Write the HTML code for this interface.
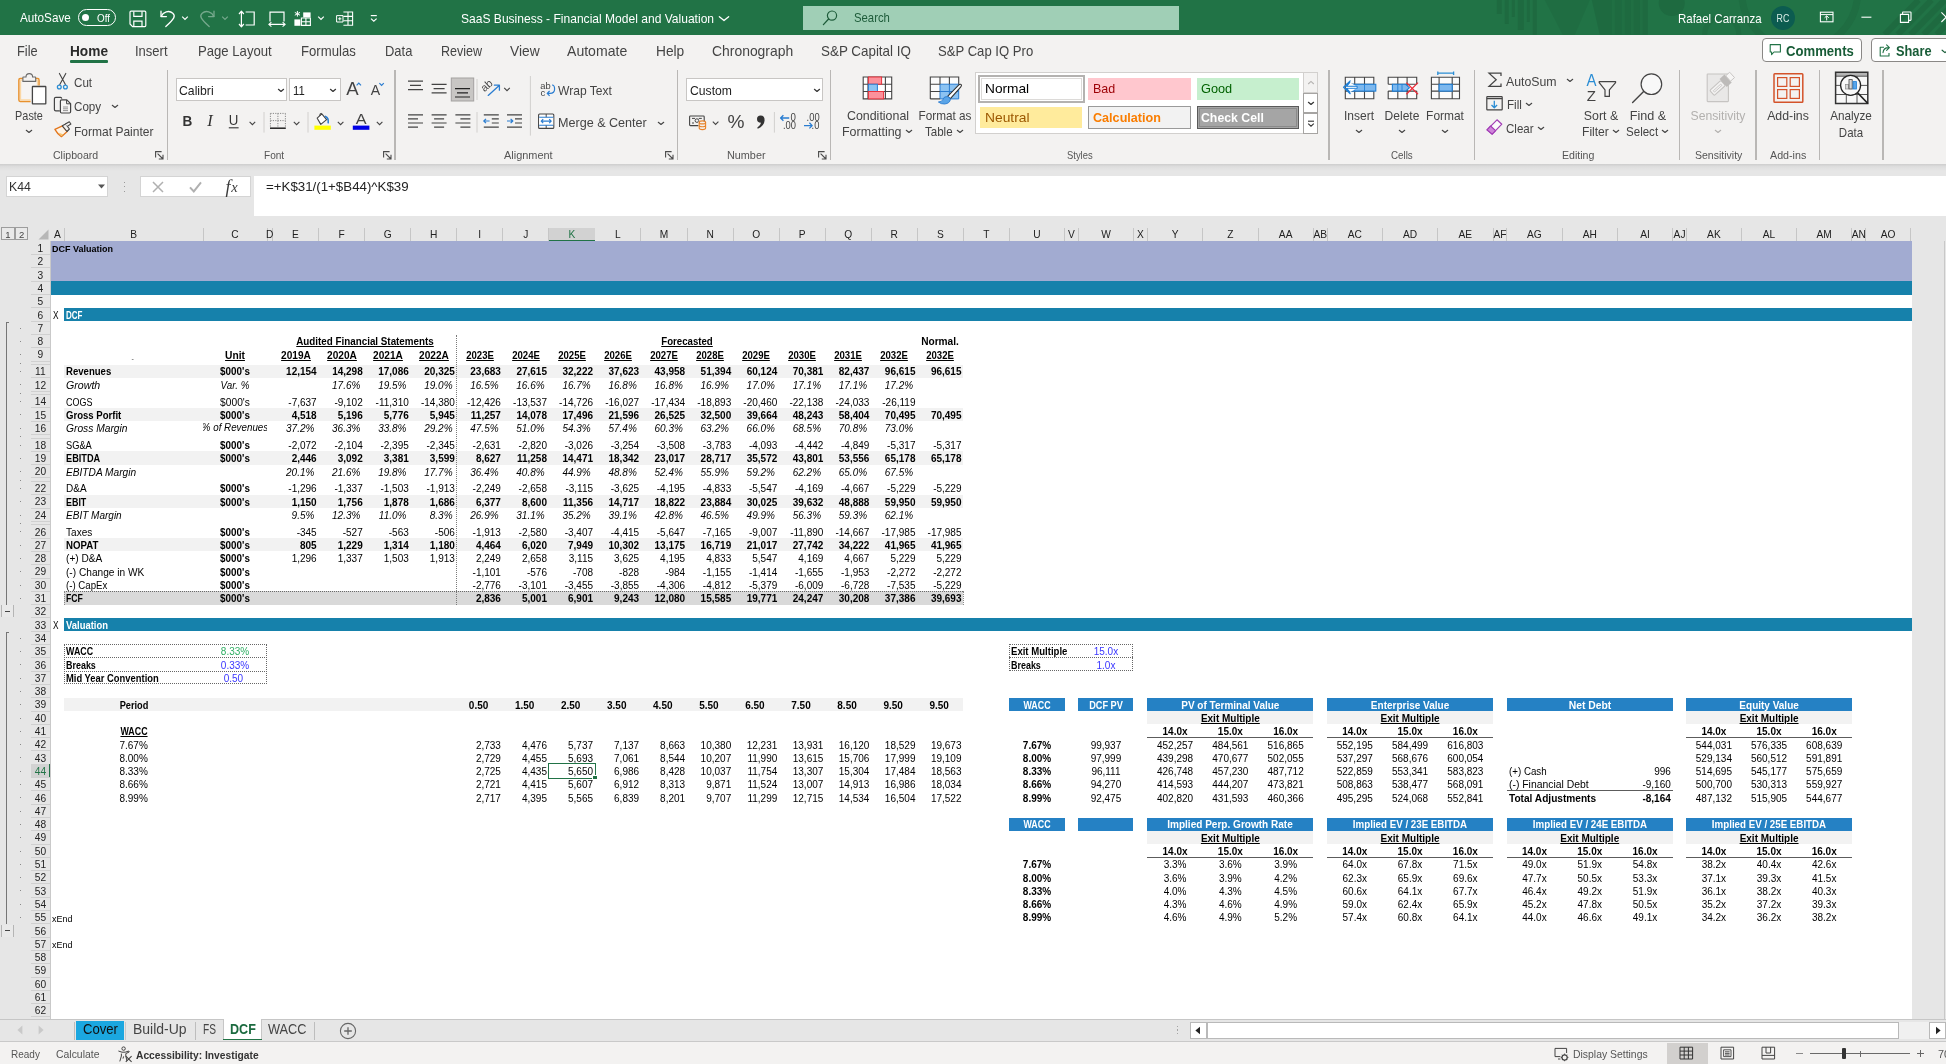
<!DOCTYPE html>
<html><head><meta charset="utf-8"><title>Excel</title>
<style>
html,body{margin:0;padding:0;}
body{width:1946px;height:1064px;overflow:hidden;position:relative;background:#e6e6e6;
font-family:"Liberation Sans",sans-serif;}
.b{position:absolute;display:block;}
.t{position:absolute;white-space:nowrap;line-height:1;display:block;}
svg{overflow:visible;}
#root{position:absolute;left:0;top:0;width:1946px;height:1064px;overflow:hidden;will-change:transform;}
</style></head>
<body>
<div id="root">
<div class="b" style="left:0.00px;top:216.50px;width:1946.00px;height:802.50px;background:#e6e6e6;"></div>
<div class="b" style="left:50.50px;top:241.40px;width:1861.70px;height:777.60px;background:#fff;"></div>
<div class="b" style="left:63.70px;top:227.60px;width:1.00px;height:13.40px;background:#c6c6c6;"></div>
<div class="b" style="left:202.50px;top:227.60px;width:1.00px;height:13.40px;background:#c6c6c6;"></div>
<div class="b" style="left:266.50px;top:227.60px;width:1.00px;height:13.40px;background:#c6c6c6;"></div>
<div class="b" style="left:272.00px;top:227.60px;width:1.00px;height:13.40px;background:#c6c6c6;"></div>
<div class="b" style="left:318.06px;top:227.60px;width:1.00px;height:13.40px;background:#c6c6c6;"></div>
<div class="b" style="left:364.12px;top:227.60px;width:1.00px;height:13.40px;background:#c6c6c6;"></div>
<div class="b" style="left:410.18px;top:227.60px;width:1.00px;height:13.40px;background:#c6c6c6;"></div>
<div class="b" style="left:456.24px;top:227.60px;width:1.00px;height:13.40px;background:#c6c6c6;"></div>
<div class="b" style="left:502.30px;top:227.60px;width:1.00px;height:13.40px;background:#c6c6c6;"></div>
<div class="b" style="left:548.36px;top:227.60px;width:1.00px;height:13.40px;background:#c6c6c6;"></div>
<div class="b" style="left:594.42px;top:227.60px;width:1.00px;height:13.40px;background:#c6c6c6;"></div>
<div class="b" style="left:640.48px;top:227.60px;width:1.00px;height:13.40px;background:#c6c6c6;"></div>
<div class="b" style="left:686.54px;top:227.60px;width:1.00px;height:13.40px;background:#c6c6c6;"></div>
<div class="b" style="left:732.60px;top:227.60px;width:1.00px;height:13.40px;background:#c6c6c6;"></div>
<div class="b" style="left:778.66px;top:227.60px;width:1.00px;height:13.40px;background:#c6c6c6;"></div>
<div class="b" style="left:824.72px;top:227.60px;width:1.00px;height:13.40px;background:#c6c6c6;"></div>
<div class="b" style="left:870.78px;top:227.60px;width:1.00px;height:13.40px;background:#c6c6c6;"></div>
<div class="b" style="left:916.84px;top:227.60px;width:1.00px;height:13.40px;background:#c6c6c6;"></div>
<div class="b" style="left:962.90px;top:227.60px;width:1.00px;height:13.40px;background:#c6c6c6;"></div>
<div class="b" style="left:1008.96px;top:227.60px;width:1.00px;height:13.40px;background:#c6c6c6;"></div>
<div class="b" style="left:1064.10px;top:227.60px;width:1.00px;height:13.40px;background:#c6c6c6;"></div>
<div class="b" style="left:1077.90px;top:227.60px;width:1.00px;height:13.40px;background:#c6c6c6;"></div>
<div class="b" style="left:1133.00px;top:227.60px;width:1.00px;height:13.40px;background:#c6c6c6;"></div>
<div class="b" style="left:1146.90px;top:227.60px;width:1.00px;height:13.40px;background:#c6c6c6;"></div>
<div class="b" style="left:1202.20px;top:227.60px;width:1.00px;height:13.40px;background:#c6c6c6;"></div>
<div class="b" style="left:1257.50px;top:227.60px;width:1.00px;height:13.40px;background:#c6c6c6;"></div>
<div class="b" style="left:1312.80px;top:227.60px;width:1.00px;height:13.40px;background:#c6c6c6;"></div>
<div class="b" style="left:1326.60px;top:227.60px;width:1.00px;height:13.40px;background:#c6c6c6;"></div>
<div class="b" style="left:1381.90px;top:227.60px;width:1.00px;height:13.40px;background:#c6c6c6;"></div>
<div class="b" style="left:1437.20px;top:227.60px;width:1.00px;height:13.40px;background:#c6c6c6;"></div>
<div class="b" style="left:1492.50px;top:227.60px;width:1.00px;height:13.40px;background:#c6c6c6;"></div>
<div class="b" style="left:1506.30px;top:227.60px;width:1.00px;height:13.40px;background:#c6c6c6;"></div>
<div class="b" style="left:1561.60px;top:227.60px;width:1.00px;height:13.40px;background:#c6c6c6;"></div>
<div class="b" style="left:1616.90px;top:227.60px;width:1.00px;height:13.40px;background:#c6c6c6;"></div>
<div class="b" style="left:1672.20px;top:227.60px;width:1.00px;height:13.40px;background:#c6c6c6;"></div>
<div class="b" style="left:1685.90px;top:227.60px;width:1.00px;height:13.40px;background:#c6c6c6;"></div>
<div class="b" style="left:1740.90px;top:227.60px;width:1.00px;height:13.40px;background:#c6c6c6;"></div>
<div class="b" style="left:1796.10px;top:227.60px;width:1.00px;height:13.40px;background:#c6c6c6;"></div>
<div class="b" style="left:1851.30px;top:227.60px;width:1.00px;height:13.40px;background:#c6c6c6;"></div>
<div class="b" style="left:1865.20px;top:227.60px;width:1.00px;height:13.40px;background:#c6c6c6;"></div>
<div class="b" style="left:1910.00px;top:227.60px;width:1.00px;height:13.40px;background:#c6c6c6;"></div>
<div class="b" style="left:548.86px;top:227.50px;width:46.06px;height:13.90px;background:#d2d2d2;"></div>
<div class="b" style="left:548.86px;top:240.20px;width:46.06px;height:1.20px;background:#217346;"></div>
<span class="t" style="top:230.08px;font-size:10.2px;color:#222;left:57.35px;transform-origin:50% 50%;transform:translateX(-50%);">A</span>
<span class="t" style="top:230.08px;font-size:10.2px;color:#222;left:133.60px;transform-origin:50% 50%;transform:translateX(-50%);">B</span>
<span class="t" style="top:230.08px;font-size:10.2px;color:#222;left:235.00px;transform-origin:50% 50%;transform:translateX(-50%);">C</span>
<span class="t" style="top:230.08px;font-size:10.2px;color:#222;left:269.75px;transform-origin:50% 50%;transform:translateX(-50%);">D</span>
<span class="t" style="top:230.08px;font-size:10.2px;color:#222;left:295.53px;transform-origin:50% 50%;transform:translateX(-50%);">E</span>
<span class="t" style="top:230.08px;font-size:10.2px;color:#222;left:341.59px;transform-origin:50% 50%;transform:translateX(-50%);">F</span>
<span class="t" style="top:230.08px;font-size:10.2px;color:#222;left:387.65px;transform-origin:50% 50%;transform:translateX(-50%);">G</span>
<span class="t" style="top:230.08px;font-size:10.2px;color:#222;left:433.71px;transform-origin:50% 50%;transform:translateX(-50%);">H</span>
<span class="t" style="top:230.08px;font-size:10.2px;color:#222;left:479.77px;transform-origin:50% 50%;transform:translateX(-50%);">I</span>
<span class="t" style="top:230.08px;font-size:10.2px;color:#222;left:525.83px;transform-origin:50% 50%;transform:translateX(-50%);">J</span>
<span class="t" style="top:230.08px;font-size:10.2px;color:#217346;left:571.89px;transform-origin:50% 50%;transform:translateX(-50%);">K</span>
<span class="t" style="top:230.08px;font-size:10.2px;color:#222;left:617.95px;transform-origin:50% 50%;transform:translateX(-50%);">L</span>
<span class="t" style="top:230.08px;font-size:10.2px;color:#222;left:664.01px;transform-origin:50% 50%;transform:translateX(-50%);">M</span>
<span class="t" style="top:230.08px;font-size:10.2px;color:#222;left:710.07px;transform-origin:50% 50%;transform:translateX(-50%);">N</span>
<span class="t" style="top:230.08px;font-size:10.2px;color:#222;left:756.13px;transform-origin:50% 50%;transform:translateX(-50%);">O</span>
<span class="t" style="top:230.08px;font-size:10.2px;color:#222;left:802.19px;transform-origin:50% 50%;transform:translateX(-50%);">P</span>
<span class="t" style="top:230.08px;font-size:10.2px;color:#222;left:848.25px;transform-origin:50% 50%;transform:translateX(-50%);">Q</span>
<span class="t" style="top:230.08px;font-size:10.2px;color:#222;left:894.31px;transform-origin:50% 50%;transform:translateX(-50%);">R</span>
<span class="t" style="top:230.08px;font-size:10.2px;color:#222;left:940.37px;transform-origin:50% 50%;transform:translateX(-50%);">S</span>
<span class="t" style="top:230.08px;font-size:10.2px;color:#222;left:986.43px;transform-origin:50% 50%;transform:translateX(-50%);">T</span>
<span class="t" style="top:230.08px;font-size:10.2px;color:#222;left:1037.03px;transform-origin:50% 50%;transform:translateX(-50%);">U</span>
<span class="t" style="top:230.08px;font-size:10.2px;color:#222;left:1071.50px;transform-origin:50% 50%;transform:translateX(-50%);">V</span>
<span class="t" style="top:230.08px;font-size:10.2px;color:#222;left:1105.95px;transform-origin:50% 50%;transform:translateX(-50%);">W</span>
<span class="t" style="top:230.08px;font-size:10.2px;color:#222;left:1140.45px;transform-origin:50% 50%;transform:translateX(-50%);">X</span>
<span class="t" style="top:230.08px;font-size:10.2px;color:#222;left:1175.05px;transform-origin:50% 50%;transform:translateX(-50%);">Y</span>
<span class="t" style="top:230.08px;font-size:10.2px;color:#222;left:1230.35px;transform-origin:50% 50%;transform:translateX(-50%);">Z</span>
<span class="t" style="top:230.08px;font-size:10.2px;color:#222;left:1285.65px;transform-origin:50% 50%;transform:translateX(-50%);">AA</span>
<span class="t" style="top:230.08px;font-size:10.2px;color:#222;left:1320.20px;transform-origin:50% 50%;transform:translateX(-50%);">AB</span>
<span class="t" style="top:230.08px;font-size:10.2px;color:#222;left:1354.75px;transform-origin:50% 50%;transform:translateX(-50%);">AC</span>
<span class="t" style="top:230.08px;font-size:10.2px;color:#222;left:1410.05px;transform-origin:50% 50%;transform:translateX(-50%);">AD</span>
<span class="t" style="top:230.08px;font-size:10.2px;color:#222;left:1465.35px;transform-origin:50% 50%;transform:translateX(-50%);">AE</span>
<span class="t" style="top:230.08px;font-size:10.2px;color:#222;left:1499.90px;transform-origin:50% 50%;transform:translateX(-50%);">AF</span>
<span class="t" style="top:230.08px;font-size:10.2px;color:#222;left:1534.45px;transform-origin:50% 50%;transform:translateX(-50%);">AG</span>
<span class="t" style="top:230.08px;font-size:10.2px;color:#222;left:1589.75px;transform-origin:50% 50%;transform:translateX(-50%);">AH</span>
<span class="t" style="top:230.08px;font-size:10.2px;color:#222;left:1645.05px;transform-origin:50% 50%;transform:translateX(-50%);">AI</span>
<span class="t" style="top:230.08px;font-size:10.2px;color:#222;left:1679.55px;transform-origin:50% 50%;transform:translateX(-50%);">AJ</span>
<span class="t" style="top:230.08px;font-size:10.2px;color:#222;left:1713.90px;transform-origin:50% 50%;transform:translateX(-50%);">AK</span>
<span class="t" style="top:230.08px;font-size:10.2px;color:#222;left:1769.00px;transform-origin:50% 50%;transform:translateX(-50%);">AL</span>
<span class="t" style="top:230.08px;font-size:10.2px;color:#222;left:1824.20px;transform-origin:50% 50%;transform:translateX(-50%);">AM</span>
<span class="t" style="top:230.08px;font-size:10.2px;color:#222;left:1858.75px;transform-origin:50% 50%;transform:translateX(-50%);">AN</span>
<span class="t" style="top:230.08px;font-size:10.2px;color:#222;left:1888.10px;transform-origin:50% 50%;transform:translateX(-50%);">AO</span>
<div class="b" style="left:50.50px;top:240.60px;width:1861.70px;height:0.80px;background:#c9c9c9;"></div>
<svg class="b" style="left:38.00px;top:229.00px;" width="11" height="11" viewBox="0 0 11 11"><path d="M10.5 0.5 L10.5 10.5 L0.5 10.5 Z" fill="#b7b7b7"/></svg>
<div class="b" style="left:1.40px;top:227.40px;width:13.20px;height:13.00px;background:#e9e9e9;border:1px solid #9d9d9d;box-sizing:border-box;"></div>
<span class="t" style="top:229.62px;font-size:9.5px;color:#444;left:8.00px;transform-origin:50% 50%;transform:translateX(-50%);">1</span>
<div class="b" style="left:15.00px;top:227.40px;width:13.20px;height:13.00px;background:#e9e9e9;border:1px solid #9d9d9d;box-sizing:border-box;"></div>
<span class="t" style="top:229.62px;font-size:9.5px;color:#444;left:21.60px;transform-origin:50% 50%;transform:translateX(-50%);">2</span>
<div class="b" style="left:30.50px;top:254.10px;width:19.60px;height:1.00px;background:#d0d0d0;"></div>
<span class="t" style="top:244.03px;font-size:10.2px;color:#222;left:40.40px;transform-origin:50% 50%;transform:translateX(-50%);">1</span>
<div class="b" style="left:30.50px;top:267.40px;width:19.60px;height:1.00px;background:#d0d0d0;"></div>
<span class="t" style="top:257.33px;font-size:10.2px;color:#222;left:40.40px;transform-origin:50% 50%;transform:translateX(-50%);">2</span>
<div class="b" style="left:30.50px;top:280.70px;width:19.60px;height:1.00px;background:#d0d0d0;"></div>
<span class="t" style="top:270.63px;font-size:10.2px;color:#222;left:40.40px;transform-origin:50% 50%;transform:translateX(-50%);">3</span>
<div class="b" style="left:30.50px;top:294.00px;width:19.60px;height:1.00px;background:#d0d0d0;"></div>
<span class="t" style="top:283.93px;font-size:10.2px;color:#222;left:40.40px;transform-origin:50% 50%;transform:translateX(-50%);">4</span>
<div class="b" style="left:30.50px;top:307.30px;width:19.60px;height:1.00px;background:#d0d0d0;"></div>
<span class="t" style="top:297.23px;font-size:10.2px;color:#222;left:40.40px;transform-origin:50% 50%;transform:translateX(-50%);">5</span>
<div class="b" style="left:30.50px;top:320.60px;width:19.60px;height:1.00px;background:#d0d0d0;"></div>
<span class="t" style="top:310.53px;font-size:10.2px;color:#222;left:40.40px;transform-origin:50% 50%;transform:translateX(-50%);">6</span>
<div class="b" style="left:30.50px;top:333.90px;width:19.60px;height:1.00px;background:#d0d0d0;"></div>
<span class="t" style="top:323.83px;font-size:10.2px;color:#222;left:40.40px;transform-origin:50% 50%;transform:translateX(-50%);">7</span>
<div class="b" style="left:30.50px;top:347.20px;width:19.60px;height:1.00px;background:#d0d0d0;"></div>
<span class="t" style="top:337.13px;font-size:10.2px;color:#222;left:40.40px;transform-origin:50% 50%;transform:translateX(-50%);">8</span>
<div class="b" style="left:30.50px;top:360.50px;width:19.60px;height:1.00px;background:#d0d0d0;"></div>
<span class="t" style="top:350.43px;font-size:10.2px;color:#222;left:40.40px;transform-origin:50% 50%;transform:translateX(-50%);">9</span>
<div class="b" style="left:30.50px;top:364.00px;width:19.60px;height:1.00px;background:#d0d0d0;"></div>
<div class="b" style="left:30.50px;top:377.30px;width:19.60px;height:1.00px;background:#d0d0d0;"></div>
<span class="t" style="top:367.23px;font-size:10.2px;color:#222;left:40.40px;transform-origin:50% 50%;transform:translateX(-50%);">11</span>
<div class="b" style="left:30.50px;top:390.60px;width:19.60px;height:1.00px;background:#d0d0d0;"></div>
<span class="t" style="top:380.53px;font-size:10.2px;color:#222;left:40.40px;transform-origin:50% 50%;transform:translateX(-50%);">12</span>
<div class="b" style="left:30.50px;top:394.10px;width:19.60px;height:1.00px;background:#d0d0d0;"></div>
<div class="b" style="left:30.50px;top:407.40px;width:19.60px;height:1.00px;background:#d0d0d0;"></div>
<span class="t" style="top:397.33px;font-size:10.2px;color:#222;left:40.40px;transform-origin:50% 50%;transform:translateX(-50%);">14</span>
<div class="b" style="left:30.50px;top:420.70px;width:19.60px;height:1.00px;background:#d0d0d0;"></div>
<span class="t" style="top:410.63px;font-size:10.2px;color:#222;left:40.40px;transform-origin:50% 50%;transform:translateX(-50%);">15</span>
<div class="b" style="left:30.50px;top:434.00px;width:19.60px;height:1.00px;background:#d0d0d0;"></div>
<span class="t" style="top:423.93px;font-size:10.2px;color:#222;left:40.40px;transform-origin:50% 50%;transform:translateX(-50%);">16</span>
<div class="b" style="left:30.50px;top:437.50px;width:19.60px;height:1.00px;background:#d0d0d0;"></div>
<div class="b" style="left:30.50px;top:450.80px;width:19.60px;height:1.00px;background:#d0d0d0;"></div>
<span class="t" style="top:440.73px;font-size:10.2px;color:#222;left:40.40px;transform-origin:50% 50%;transform:translateX(-50%);">18</span>
<div class="b" style="left:30.50px;top:464.10px;width:19.60px;height:1.00px;background:#d0d0d0;"></div>
<span class="t" style="top:454.03px;font-size:10.2px;color:#222;left:40.40px;transform-origin:50% 50%;transform:translateX(-50%);">19</span>
<div class="b" style="left:30.50px;top:477.40px;width:19.60px;height:1.00px;background:#d0d0d0;"></div>
<span class="t" style="top:467.33px;font-size:10.2px;color:#222;left:40.40px;transform-origin:50% 50%;transform:translateX(-50%);">20</span>
<div class="b" style="left:30.50px;top:480.90px;width:19.60px;height:1.00px;background:#d0d0d0;"></div>
<div class="b" style="left:30.50px;top:494.20px;width:19.60px;height:1.00px;background:#d0d0d0;"></div>
<span class="t" style="top:484.13px;font-size:10.2px;color:#222;left:40.40px;transform-origin:50% 50%;transform:translateX(-50%);">22</span>
<div class="b" style="left:30.50px;top:507.50px;width:19.60px;height:1.00px;background:#d0d0d0;"></div>
<span class="t" style="top:497.43px;font-size:10.2px;color:#222;left:40.40px;transform-origin:50% 50%;transform:translateX(-50%);">23</span>
<div class="b" style="left:30.50px;top:520.80px;width:19.60px;height:1.00px;background:#d0d0d0;"></div>
<span class="t" style="top:510.73px;font-size:10.2px;color:#222;left:40.40px;transform-origin:50% 50%;transform:translateX(-50%);">24</span>
<div class="b" style="left:30.50px;top:524.30px;width:19.60px;height:1.00px;background:#d0d0d0;"></div>
<div class="b" style="left:30.50px;top:537.60px;width:19.60px;height:1.00px;background:#d0d0d0;"></div>
<span class="t" style="top:527.53px;font-size:10.2px;color:#222;left:40.40px;transform-origin:50% 50%;transform:translateX(-50%);">26</span>
<div class="b" style="left:30.50px;top:550.90px;width:19.60px;height:1.00px;background:#d0d0d0;"></div>
<span class="t" style="top:540.83px;font-size:10.2px;color:#222;left:40.40px;transform-origin:50% 50%;transform:translateX(-50%);">27</span>
<div class="b" style="left:30.50px;top:564.20px;width:19.60px;height:1.00px;background:#d0d0d0;"></div>
<span class="t" style="top:554.13px;font-size:10.2px;color:#222;left:40.40px;transform-origin:50% 50%;transform:translateX(-50%);">28</span>
<div class="b" style="left:30.50px;top:577.50px;width:19.60px;height:1.00px;background:#d0d0d0;"></div>
<span class="t" style="top:567.43px;font-size:10.2px;color:#222;left:40.40px;transform-origin:50% 50%;transform:translateX(-50%);">29</span>
<div class="b" style="left:30.50px;top:590.80px;width:19.60px;height:1.00px;background:#d0d0d0;"></div>
<span class="t" style="top:580.73px;font-size:10.2px;color:#222;left:40.40px;transform-origin:50% 50%;transform:translateX(-50%);">30</span>
<div class="b" style="left:30.50px;top:604.10px;width:19.60px;height:1.00px;background:#d0d0d0;"></div>
<span class="t" style="top:594.03px;font-size:10.2px;color:#222;left:40.40px;transform-origin:50% 50%;transform:translateX(-50%);">31</span>
<div class="b" style="left:30.50px;top:617.40px;width:19.60px;height:1.00px;background:#d0d0d0;"></div>
<span class="t" style="top:607.33px;font-size:10.2px;color:#222;left:40.40px;transform-origin:50% 50%;transform:translateX(-50%);">32</span>
<div class="b" style="left:30.50px;top:630.70px;width:19.60px;height:1.00px;background:#d0d0d0;"></div>
<span class="t" style="top:620.63px;font-size:10.2px;color:#222;left:40.40px;transform-origin:50% 50%;transform:translateX(-50%);">33</span>
<div class="b" style="left:30.50px;top:644.00px;width:19.60px;height:1.00px;background:#d0d0d0;"></div>
<span class="t" style="top:633.93px;font-size:10.2px;color:#222;left:40.40px;transform-origin:50% 50%;transform:translateX(-50%);">34</span>
<div class="b" style="left:30.50px;top:657.30px;width:19.60px;height:1.00px;background:#d0d0d0;"></div>
<span class="t" style="top:647.23px;font-size:10.2px;color:#222;left:40.40px;transform-origin:50% 50%;transform:translateX(-50%);">35</span>
<div class="b" style="left:30.50px;top:670.60px;width:19.60px;height:1.00px;background:#d0d0d0;"></div>
<span class="t" style="top:660.53px;font-size:10.2px;color:#222;left:40.40px;transform-origin:50% 50%;transform:translateX(-50%);">36</span>
<div class="b" style="left:30.50px;top:683.90px;width:19.60px;height:1.00px;background:#d0d0d0;"></div>
<span class="t" style="top:673.83px;font-size:10.2px;color:#222;left:40.40px;transform-origin:50% 50%;transform:translateX(-50%);">37</span>
<div class="b" style="left:30.50px;top:697.20px;width:19.60px;height:1.00px;background:#d0d0d0;"></div>
<span class="t" style="top:687.13px;font-size:10.2px;color:#222;left:40.40px;transform-origin:50% 50%;transform:translateX(-50%);">38</span>
<div class="b" style="left:30.50px;top:710.50px;width:19.60px;height:1.00px;background:#d0d0d0;"></div>
<span class="t" style="top:700.43px;font-size:10.2px;color:#222;left:40.40px;transform-origin:50% 50%;transform:translateX(-50%);">39</span>
<div class="b" style="left:30.50px;top:723.80px;width:19.60px;height:1.00px;background:#d0d0d0;"></div>
<span class="t" style="top:713.73px;font-size:10.2px;color:#222;left:40.40px;transform-origin:50% 50%;transform:translateX(-50%);">40</span>
<div class="b" style="left:30.50px;top:737.10px;width:19.60px;height:1.00px;background:#d0d0d0;"></div>
<span class="t" style="top:727.03px;font-size:10.2px;color:#222;left:40.40px;transform-origin:50% 50%;transform:translateX(-50%);">41</span>
<div class="b" style="left:30.50px;top:750.40px;width:19.60px;height:1.00px;background:#d0d0d0;"></div>
<span class="t" style="top:740.33px;font-size:10.2px;color:#222;left:40.40px;transform-origin:50% 50%;transform:translateX(-50%);">42</span>
<div class="b" style="left:30.50px;top:763.70px;width:19.60px;height:1.00px;background:#d0d0d0;"></div>
<span class="t" style="top:753.63px;font-size:10.2px;color:#222;left:40.40px;transform-origin:50% 50%;transform:translateX(-50%);">43</span>
<div class="b" style="left:30.50px;top:764.30px;width:20.00px;height:13.30px;background:#d2d2d2;"></div>
<div class="b" style="left:48.80px;top:764.30px;width:1.80px;height:13.30px;background:#217346;"></div>
<div class="b" style="left:30.50px;top:777.00px;width:19.60px;height:1.00px;background:#d0d0d0;"></div>
<span class="t" style="top:766.93px;font-size:10.2px;color:#217346;left:40.40px;transform-origin:50% 50%;transform:translateX(-50%);">44</span>
<div class="b" style="left:30.50px;top:790.30px;width:19.60px;height:1.00px;background:#d0d0d0;"></div>
<span class="t" style="top:780.23px;font-size:10.2px;color:#222;left:40.40px;transform-origin:50% 50%;transform:translateX(-50%);">45</span>
<div class="b" style="left:30.50px;top:803.60px;width:19.60px;height:1.00px;background:#d0d0d0;"></div>
<span class="t" style="top:793.53px;font-size:10.2px;color:#222;left:40.40px;transform-origin:50% 50%;transform:translateX(-50%);">46</span>
<div class="b" style="left:30.50px;top:816.90px;width:19.60px;height:1.00px;background:#d0d0d0;"></div>
<span class="t" style="top:806.83px;font-size:10.2px;color:#222;left:40.40px;transform-origin:50% 50%;transform:translateX(-50%);">47</span>
<div class="b" style="left:30.50px;top:830.20px;width:19.60px;height:1.00px;background:#d0d0d0;"></div>
<span class="t" style="top:820.13px;font-size:10.2px;color:#222;left:40.40px;transform-origin:50% 50%;transform:translateX(-50%);">48</span>
<div class="b" style="left:30.50px;top:843.50px;width:19.60px;height:1.00px;background:#d0d0d0;"></div>
<span class="t" style="top:833.43px;font-size:10.2px;color:#222;left:40.40px;transform-origin:50% 50%;transform:translateX(-50%);">49</span>
<div class="b" style="left:30.50px;top:856.80px;width:19.60px;height:1.00px;background:#d0d0d0;"></div>
<span class="t" style="top:846.73px;font-size:10.2px;color:#222;left:40.40px;transform-origin:50% 50%;transform:translateX(-50%);">50</span>
<div class="b" style="left:30.50px;top:870.10px;width:19.60px;height:1.00px;background:#d0d0d0;"></div>
<span class="t" style="top:860.03px;font-size:10.2px;color:#222;left:40.40px;transform-origin:50% 50%;transform:translateX(-50%);">51</span>
<div class="b" style="left:30.50px;top:883.40px;width:19.60px;height:1.00px;background:#d0d0d0;"></div>
<span class="t" style="top:873.33px;font-size:10.2px;color:#222;left:40.40px;transform-origin:50% 50%;transform:translateX(-50%);">52</span>
<div class="b" style="left:30.50px;top:896.70px;width:19.60px;height:1.00px;background:#d0d0d0;"></div>
<span class="t" style="top:886.63px;font-size:10.2px;color:#222;left:40.40px;transform-origin:50% 50%;transform:translateX(-50%);">53</span>
<div class="b" style="left:30.50px;top:910.00px;width:19.60px;height:1.00px;background:#d0d0d0;"></div>
<span class="t" style="top:899.93px;font-size:10.2px;color:#222;left:40.40px;transform-origin:50% 50%;transform:translateX(-50%);">54</span>
<div class="b" style="left:30.50px;top:923.30px;width:19.60px;height:1.00px;background:#d0d0d0;"></div>
<span class="t" style="top:913.23px;font-size:10.2px;color:#222;left:40.40px;transform-origin:50% 50%;transform:translateX(-50%);">55</span>
<div class="b" style="left:30.50px;top:936.60px;width:19.60px;height:1.00px;background:#d0d0d0;"></div>
<span class="t" style="top:926.53px;font-size:10.2px;color:#222;left:40.40px;transform-origin:50% 50%;transform:translateX(-50%);">56</span>
<div class="b" style="left:30.50px;top:949.90px;width:19.60px;height:1.00px;background:#d0d0d0;"></div>
<span class="t" style="top:939.83px;font-size:10.2px;color:#222;left:40.40px;transform-origin:50% 50%;transform:translateX(-50%);">57</span>
<div class="b" style="left:30.50px;top:963.20px;width:19.60px;height:1.00px;background:#d0d0d0;"></div>
<span class="t" style="top:953.13px;font-size:10.2px;color:#222;left:40.40px;transform-origin:50% 50%;transform:translateX(-50%);">58</span>
<div class="b" style="left:30.50px;top:976.50px;width:19.60px;height:1.00px;background:#d0d0d0;"></div>
<span class="t" style="top:966.43px;font-size:10.2px;color:#222;left:40.40px;transform-origin:50% 50%;transform:translateX(-50%);">59</span>
<div class="b" style="left:30.50px;top:989.80px;width:19.60px;height:1.00px;background:#d0d0d0;"></div>
<span class="t" style="top:979.73px;font-size:10.2px;color:#222;left:40.40px;transform-origin:50% 50%;transform:translateX(-50%);">60</span>
<div class="b" style="left:30.50px;top:1003.10px;width:19.60px;height:1.00px;background:#d0d0d0;"></div>
<span class="t" style="top:993.03px;font-size:10.2px;color:#222;left:40.40px;transform-origin:50% 50%;transform:translateX(-50%);">61</span>
<div class="b" style="left:30.50px;top:1016.40px;width:19.60px;height:1.00px;background:#d0d0d0;"></div>
<span class="t" style="top:1006.33px;font-size:10.2px;color:#222;left:40.40px;transform-origin:50% 50%;transform:translateX(-50%);">62</span>
<div class="b" style="left:50.00px;top:241.40px;width:0.80px;height:777.60px;background:#c9c9c9;"></div>
<div class="b" style="left:5.80px;top:322.20px;width:1.00px;height:282.50px;background:#767676;"></div>
<div class="b" style="left:5.80px;top:322.20px;width:3.40px;height:1.00px;background:#767676;"></div>
<div class="b" style="left:20.00px;top:327.65px;width:1.00px;height:1.00px;background:#8a8a8a;"></div>
<div class="b" style="left:20.00px;top:340.95px;width:1.00px;height:1.00px;background:#8a8a8a;"></div>
<div class="b" style="left:20.00px;top:354.25px;width:1.00px;height:1.00px;background:#8a8a8a;"></div>
<div class="b" style="left:20.00px;top:362.65px;width:1.00px;height:1.00px;background:#8a8a8a;"></div>
<div class="b" style="left:20.00px;top:371.05px;width:1.00px;height:1.00px;background:#8a8a8a;"></div>
<div class="b" style="left:20.00px;top:384.35px;width:1.00px;height:1.00px;background:#8a8a8a;"></div>
<div class="b" style="left:20.00px;top:392.75px;width:1.00px;height:1.00px;background:#8a8a8a;"></div>
<div class="b" style="left:20.00px;top:401.15px;width:1.00px;height:1.00px;background:#8a8a8a;"></div>
<div class="b" style="left:20.00px;top:414.45px;width:1.00px;height:1.00px;background:#8a8a8a;"></div>
<div class="b" style="left:20.00px;top:427.75px;width:1.00px;height:1.00px;background:#8a8a8a;"></div>
<div class="b" style="left:20.00px;top:436.15px;width:1.00px;height:1.00px;background:#8a8a8a;"></div>
<div class="b" style="left:20.00px;top:444.55px;width:1.00px;height:1.00px;background:#8a8a8a;"></div>
<div class="b" style="left:20.00px;top:457.85px;width:1.00px;height:1.00px;background:#8a8a8a;"></div>
<div class="b" style="left:20.00px;top:471.15px;width:1.00px;height:1.00px;background:#8a8a8a;"></div>
<div class="b" style="left:20.00px;top:479.55px;width:1.00px;height:1.00px;background:#8a8a8a;"></div>
<div class="b" style="left:20.00px;top:487.95px;width:1.00px;height:1.00px;background:#8a8a8a;"></div>
<div class="b" style="left:20.00px;top:501.25px;width:1.00px;height:1.00px;background:#8a8a8a;"></div>
<div class="b" style="left:20.00px;top:514.55px;width:1.00px;height:1.00px;background:#8a8a8a;"></div>
<div class="b" style="left:20.00px;top:522.95px;width:1.00px;height:1.00px;background:#8a8a8a;"></div>
<div class="b" style="left:20.00px;top:531.35px;width:1.00px;height:1.00px;background:#8a8a8a;"></div>
<div class="b" style="left:20.00px;top:544.65px;width:1.00px;height:1.00px;background:#8a8a8a;"></div>
<div class="b" style="left:20.00px;top:557.95px;width:1.00px;height:1.00px;background:#8a8a8a;"></div>
<div class="b" style="left:20.00px;top:571.25px;width:1.00px;height:1.00px;background:#8a8a8a;"></div>
<div class="b" style="left:20.00px;top:584.55px;width:1.00px;height:1.00px;background:#8a8a8a;"></div>
<div class="b" style="left:20.00px;top:597.85px;width:1.00px;height:1.00px;background:#8a8a8a;"></div>
<div class="b" style="left:1.20px;top:605.30px;width:13.20px;height:12.00px;background:#e9e9e9;border-left:1px solid #b5b5b5;border-right:1px solid #b5b5b5;box-sizing:border-box;"></div>
<div class="b" style="left:5.20px;top:610.85px;width:5.20px;height:1.10px;background:#444;"></div>
<div class="b" style="left:5.80px;top:632.30px;width:1.00px;height:291.60px;background:#767676;"></div>
<div class="b" style="left:5.80px;top:632.30px;width:3.40px;height:1.00px;background:#767676;"></div>
<div class="b" style="left:20.00px;top:637.75px;width:1.00px;height:1.00px;background:#8a8a8a;"></div>
<div class="b" style="left:20.00px;top:651.05px;width:1.00px;height:1.00px;background:#8a8a8a;"></div>
<div class="b" style="left:20.00px;top:664.35px;width:1.00px;height:1.00px;background:#8a8a8a;"></div>
<div class="b" style="left:20.00px;top:677.65px;width:1.00px;height:1.00px;background:#8a8a8a;"></div>
<div class="b" style="left:20.00px;top:690.95px;width:1.00px;height:1.00px;background:#8a8a8a;"></div>
<div class="b" style="left:20.00px;top:704.25px;width:1.00px;height:1.00px;background:#8a8a8a;"></div>
<div class="b" style="left:20.00px;top:717.55px;width:1.00px;height:1.00px;background:#8a8a8a;"></div>
<div class="b" style="left:20.00px;top:730.85px;width:1.00px;height:1.00px;background:#8a8a8a;"></div>
<div class="b" style="left:20.00px;top:744.15px;width:1.00px;height:1.00px;background:#8a8a8a;"></div>
<div class="b" style="left:20.00px;top:757.45px;width:1.00px;height:1.00px;background:#8a8a8a;"></div>
<div class="b" style="left:20.00px;top:770.75px;width:1.00px;height:1.00px;background:#8a8a8a;"></div>
<div class="b" style="left:20.00px;top:784.05px;width:1.00px;height:1.00px;background:#8a8a8a;"></div>
<div class="b" style="left:20.00px;top:797.35px;width:1.00px;height:1.00px;background:#8a8a8a;"></div>
<div class="b" style="left:20.00px;top:810.65px;width:1.00px;height:1.00px;background:#8a8a8a;"></div>
<div class="b" style="left:20.00px;top:823.95px;width:1.00px;height:1.00px;background:#8a8a8a;"></div>
<div class="b" style="left:20.00px;top:837.25px;width:1.00px;height:1.00px;background:#8a8a8a;"></div>
<div class="b" style="left:20.00px;top:850.55px;width:1.00px;height:1.00px;background:#8a8a8a;"></div>
<div class="b" style="left:20.00px;top:863.85px;width:1.00px;height:1.00px;background:#8a8a8a;"></div>
<div class="b" style="left:20.00px;top:877.15px;width:1.00px;height:1.00px;background:#8a8a8a;"></div>
<div class="b" style="left:20.00px;top:890.45px;width:1.00px;height:1.00px;background:#8a8a8a;"></div>
<div class="b" style="left:20.00px;top:903.75px;width:1.00px;height:1.00px;background:#8a8a8a;"></div>
<div class="b" style="left:20.00px;top:917.05px;width:1.00px;height:1.00px;background:#8a8a8a;"></div>
<div class="b" style="left:1.20px;top:924.50px;width:13.20px;height:12.00px;background:#e9e9e9;border-left:1px solid #b5b5b5;border-right:1px solid #b5b5b5;box-sizing:border-box;"></div>
<div class="b" style="left:5.20px;top:930.05px;width:5.20px;height:1.10px;background:#444;"></div>
<div class="b" style="left:50.50px;top:241.40px;width:1861.70px;height:39.90px;background:#a2abd1;"></div>
<div class="b" style="left:50.50px;top:281.30px;width:1861.70px;height:13.30px;background:#1681ab;"></div>
<div class="b" style="left:64.20px;top:307.90px;width:1848.00px;height:13.30px;background:#1681ab;"></div>
<div class="b" style="left:64.20px;top:618.00px;width:1848.00px;height:13.30px;background:#1681ab;"></div>
<span class="t" style="transform:scaleX(0.9104);top:244.28px;font-size:9.9px;color:#000;font-weight:bold;left:52.30px;transform-origin:0 50%;">DCF Valuation</span>
<span class="t" style="transform:scaleX(0.8000);top:310.54px;font-size:10.4px;color:#000;left:52.50px;transform-origin:0 50%;">X</span>
<span class="t" style="transform:scaleX(0.8000);top:310.73px;font-size:10px;color:#fff;font-weight:bold;left:66.40px;transform-origin:0 50%;">DCF</span>
<span class="t" style="transform:scaleX(0.8000);top:620.64px;font-size:10.4px;color:#000;left:52.50px;transform-origin:0 50%;">X</span>
<span class="t" style="transform:scaleX(0.9432);top:620.83px;font-size:10px;color:#fff;font-weight:bold;left:66.40px;transform-origin:0 50%;">Valuation</span>
<div class="b" style="left:64.20px;top:364.60px;width:899.20px;height:13.30px;background:#f2f2f2;"></div>
<div class="b" style="left:64.20px;top:408.00px;width:899.20px;height:13.30px;background:#f2f2f2;"></div>
<div class="b" style="left:64.20px;top:451.40px;width:899.20px;height:13.30px;background:#f2f2f2;"></div>
<div class="b" style="left:64.20px;top:494.80px;width:899.20px;height:13.30px;background:#f2f2f2;"></div>
<div class="b" style="left:64.20px;top:538.20px;width:899.20px;height:13.30px;background:#f2f2f2;"></div>
<div class="b" style="left:64.20px;top:591.40px;width:899.20px;height:13.30px;background:#d9d9d9;"></div>
<div class="b" style="left:64.20px;top:697.80px;width:899.20px;height:13.30px;background:#f2f2f2;"></div>
<span class="t" style="transform:translateX(-50%) scaleX(0.9821);top:337.33px;font-size:10.0px;color:#000;font-weight:bold;text-decoration:underline;left:364.62px;transform-origin:50% 50%;">Audited Financial Statements</span>
<span class="t" style="transform:translateX(-50%) scaleX(0.9660);top:337.33px;font-size:10.0px;color:#000;font-weight:bold;text-decoration:underline;left:687.04px;transform-origin:50% 50%;">Forecasted</span>
<span class="t" style="transform:translateX(-50%) scaleX(1.0135);top:337.33px;font-size:10.0px;color:#000;font-weight:bold;left:940.37px;transform-origin:50% 50%;">Normal.</span>
<span class="t" style="transform:translateX(-50%) scaleX(1.0211);top:350.63px;font-size:10.0px;color:#000;font-weight:bold;text-decoration:underline;left:235.00px;transform-origin:50% 50%;">Unit</span>
<span class="t" style="transform:translateX(-50%) scaleX(1.0103);top:350.63px;font-size:10.0px;color:#000;font-weight:bold;text-decoration:underline;left:295.53px;transform-origin:50% 50%;">2019A</span>
<span class="t" style="transform:translateX(-50%) scaleX(1.0103);top:350.63px;font-size:10.0px;color:#000;font-weight:bold;text-decoration:underline;left:341.59px;transform-origin:50% 50%;">2020A</span>
<span class="t" style="transform:translateX(-50%) scaleX(1.0103);top:350.63px;font-size:10.0px;color:#000;font-weight:bold;text-decoration:underline;left:387.65px;transform-origin:50% 50%;">2021A</span>
<span class="t" style="transform:translateX(-50%) scaleX(1.0103);top:350.63px;font-size:10.0px;color:#000;font-weight:bold;text-decoration:underline;left:433.71px;transform-origin:50% 50%;">2022A</span>
<span class="t" style="transform:translateX(-50%) scaleX(0.9586);top:350.63px;font-size:10.0px;color:#000;font-weight:bold;text-decoration:underline;left:479.77px;transform-origin:50% 50%;">2023E</span>
<span class="t" style="transform:translateX(-50%) scaleX(0.9586);top:350.63px;font-size:10.0px;color:#000;font-weight:bold;text-decoration:underline;left:525.83px;transform-origin:50% 50%;">2024E</span>
<span class="t" style="transform:translateX(-50%) scaleX(0.9586);top:350.63px;font-size:10.0px;color:#000;font-weight:bold;text-decoration:underline;left:571.89px;transform-origin:50% 50%;">2025E</span>
<span class="t" style="transform:translateX(-50%) scaleX(0.9586);top:350.63px;font-size:10.0px;color:#000;font-weight:bold;text-decoration:underline;left:617.95px;transform-origin:50% 50%;">2026E</span>
<span class="t" style="transform:translateX(-50%) scaleX(0.9586);top:350.63px;font-size:10.0px;color:#000;font-weight:bold;text-decoration:underline;left:664.01px;transform-origin:50% 50%;">2027E</span>
<span class="t" style="transform:translateX(-50%) scaleX(0.9586);top:350.63px;font-size:10.0px;color:#000;font-weight:bold;text-decoration:underline;left:710.07px;transform-origin:50% 50%;">2028E</span>
<span class="t" style="transform:translateX(-50%) scaleX(0.9586);top:350.63px;font-size:10.0px;color:#000;font-weight:bold;text-decoration:underline;left:756.13px;transform-origin:50% 50%;">2029E</span>
<span class="t" style="transform:translateX(-50%) scaleX(0.9586);top:350.63px;font-size:10.0px;color:#000;font-weight:bold;text-decoration:underline;left:802.19px;transform-origin:50% 50%;">2030E</span>
<span class="t" style="transform:translateX(-50%) scaleX(0.9586);top:350.63px;font-size:10.0px;color:#000;font-weight:bold;text-decoration:underline;left:848.25px;transform-origin:50% 50%;">2031E</span>
<span class="t" style="transform:translateX(-50%) scaleX(0.9586);top:350.63px;font-size:10.0px;color:#000;font-weight:bold;text-decoration:underline;left:894.31px;transform-origin:50% 50%;">2032E</span>
<span class="t" style="transform:translateX(-50%) scaleX(0.9586);top:350.63px;font-size:10.0px;color:#000;font-weight:bold;text-decoration:underline;left:940.37px;transform-origin:50% 50%;">2032E</span>
<span class="t" style="top:355.23px;font-size:7px;color:#444;left:132.60px;transform-origin:50% 50%;transform:translateX(-50%);">-</span>
<span class="t" style="transform:scaleX(0.9574);top:367.43px;font-size:10.0px;color:#000;font-weight:bold;left:66.10px;transform-origin:0 50%;">Revenues</span>
<span class="t" style="transform:translateX(-50%) scaleX(0.9867);top:367.43px;font-size:10.0px;color:#000;font-weight:bold;left:235.00px;transform-origin:50% 50%;">$000's</span>
<span class="t" style="top:367.43px;font-size:10.0px;color:#000;font-weight:bold;right:1629.34px;transform-origin:100% 50%;">12,154</span>
<span class="t" style="top:367.43px;font-size:10.0px;color:#000;font-weight:bold;right:1583.28px;transform-origin:100% 50%;">14,298</span>
<span class="t" style="top:367.43px;font-size:10.0px;color:#000;font-weight:bold;right:1537.22px;transform-origin:100% 50%;">17,086</span>
<span class="t" style="top:367.43px;font-size:10.0px;color:#000;font-weight:bold;right:1491.16px;transform-origin:100% 50%;">20,325</span>
<span class="t" style="top:367.43px;font-size:10.0px;color:#000;font-weight:bold;right:1445.10px;transform-origin:100% 50%;">23,683</span>
<span class="t" style="top:367.43px;font-size:10.0px;color:#000;font-weight:bold;right:1399.04px;transform-origin:100% 50%;">27,615</span>
<span class="t" style="top:367.43px;font-size:10.0px;color:#000;font-weight:bold;right:1352.98px;transform-origin:100% 50%;">32,222</span>
<span class="t" style="top:367.43px;font-size:10.0px;color:#000;font-weight:bold;right:1306.92px;transform-origin:100% 50%;">37,623</span>
<span class="t" style="top:367.43px;font-size:10.0px;color:#000;font-weight:bold;right:1260.86px;transform-origin:100% 50%;">43,958</span>
<span class="t" style="top:367.43px;font-size:10.0px;color:#000;font-weight:bold;right:1214.80px;transform-origin:100% 50%;">51,394</span>
<span class="t" style="top:367.43px;font-size:10.0px;color:#000;font-weight:bold;right:1168.74px;transform-origin:100% 50%;">60,124</span>
<span class="t" style="top:367.43px;font-size:10.0px;color:#000;font-weight:bold;right:1122.68px;transform-origin:100% 50%;">70,381</span>
<span class="t" style="top:367.43px;font-size:10.0px;color:#000;font-weight:bold;right:1076.62px;transform-origin:100% 50%;">82,437</span>
<span class="t" style="top:367.43px;font-size:10.0px;color:#000;font-weight:bold;right:1030.56px;transform-origin:100% 50%;">96,615</span>
<span class="t" style="top:367.43px;font-size:10.0px;color:#000;font-weight:bold;right:984.50px;transform-origin:100% 50%;">96,615</span>
<span class="t" style="transform:scaleX(1.0625);top:380.73px;font-size:10.0px;color:#000;font-style:italic;left:66.10px;transform-origin:0 50%;">Growth</span>
<span class="t" style="transform:translateX(-50%) scaleX(0.9828);top:380.73px;font-size:10.0px;color:#000;font-style:italic;left:235.00px;transform-origin:50% 50%;">Var. %</span>
<span class="t" style="top:380.73px;font-size:10.0px;color:#000;font-style:italic;right:1585.58px;transform-origin:100% 50%;">17.6%</span>
<span class="t" style="top:380.73px;font-size:10.0px;color:#000;font-style:italic;right:1539.52px;transform-origin:100% 50%;">19.5%</span>
<span class="t" style="top:380.73px;font-size:10.0px;color:#000;font-style:italic;right:1493.46px;transform-origin:100% 50%;">19.0%</span>
<span class="t" style="top:380.73px;font-size:10.0px;color:#000;font-style:italic;right:1447.40px;transform-origin:100% 50%;">16.5%</span>
<span class="t" style="top:380.73px;font-size:10.0px;color:#000;font-style:italic;right:1401.34px;transform-origin:100% 50%;">16.6%</span>
<span class="t" style="top:380.73px;font-size:10.0px;color:#000;font-style:italic;right:1355.28px;transform-origin:100% 50%;">16.7%</span>
<span class="t" style="top:380.73px;font-size:10.0px;color:#000;font-style:italic;right:1309.22px;transform-origin:100% 50%;">16.8%</span>
<span class="t" style="top:380.73px;font-size:10.0px;color:#000;font-style:italic;right:1263.16px;transform-origin:100% 50%;">16.8%</span>
<span class="t" style="top:380.73px;font-size:10.0px;color:#000;font-style:italic;right:1217.10px;transform-origin:100% 50%;">16.9%</span>
<span class="t" style="top:380.73px;font-size:10.0px;color:#000;font-style:italic;right:1171.04px;transform-origin:100% 50%;">17.0%</span>
<span class="t" style="top:380.73px;font-size:10.0px;color:#000;font-style:italic;right:1124.98px;transform-origin:100% 50%;">17.1%</span>
<span class="t" style="top:380.73px;font-size:10.0px;color:#000;font-style:italic;right:1078.92px;transform-origin:100% 50%;">17.1%</span>
<span class="t" style="top:380.73px;font-size:10.0px;color:#000;font-style:italic;right:1032.86px;transform-origin:100% 50%;">17.2%</span>
<span class="t" style="transform:scaleX(0.8966);top:397.53px;font-size:10.0px;color:#000;left:66.10px;transform-origin:0 50%;">COGS</span>
<span class="t" style="transform:translateX(-50%) scaleX(1.0207);top:397.53px;font-size:10.0px;color:#000;left:235.00px;transform-origin:50% 50%;">$000's</span>
<span class="t" style="top:397.53px;font-size:10.0px;color:#000;right:1629.34px;transform-origin:100% 50%;">-7,637</span>
<span class="t" style="top:397.53px;font-size:10.0px;color:#000;right:1583.28px;transform-origin:100% 50%;">-9,102</span>
<span class="t" style="top:397.53px;font-size:10.0px;color:#000;right:1537.22px;transform-origin:100% 50%;">-11,310</span>
<span class="t" style="top:397.53px;font-size:10.0px;color:#000;right:1491.16px;transform-origin:100% 50%;">-14,380</span>
<span class="t" style="top:397.53px;font-size:10.0px;color:#000;right:1445.10px;transform-origin:100% 50%;">-12,426</span>
<span class="t" style="top:397.53px;font-size:10.0px;color:#000;right:1399.04px;transform-origin:100% 50%;">-13,537</span>
<span class="t" style="top:397.53px;font-size:10.0px;color:#000;right:1352.98px;transform-origin:100% 50%;">-14,726</span>
<span class="t" style="top:397.53px;font-size:10.0px;color:#000;right:1306.92px;transform-origin:100% 50%;">-16,027</span>
<span class="t" style="top:397.53px;font-size:10.0px;color:#000;right:1260.86px;transform-origin:100% 50%;">-17,434</span>
<span class="t" style="top:397.53px;font-size:10.0px;color:#000;right:1214.80px;transform-origin:100% 50%;">-18,893</span>
<span class="t" style="top:397.53px;font-size:10.0px;color:#000;right:1168.74px;transform-origin:100% 50%;">-20,460</span>
<span class="t" style="top:397.53px;font-size:10.0px;color:#000;right:1122.68px;transform-origin:100% 50%;">-22,138</span>
<span class="t" style="top:397.53px;font-size:10.0px;color:#000;right:1076.62px;transform-origin:100% 50%;">-24,033</span>
<span class="t" style="top:397.53px;font-size:10.0px;color:#000;right:1030.56px;transform-origin:100% 50%;">-26,119</span>
<span class="t" style="transform:scaleX(0.9569);top:410.83px;font-size:10.0px;color:#000;font-weight:bold;left:66.10px;transform-origin:0 50%;">Gross Porfit</span>
<span class="t" style="transform:translateX(-50%) scaleX(0.9867);top:410.83px;font-size:10.0px;color:#000;font-weight:bold;left:235.00px;transform-origin:50% 50%;">$000's</span>
<span class="t" style="top:410.83px;font-size:10.0px;color:#000;font-weight:bold;right:1629.34px;transform-origin:100% 50%;">4,518</span>
<span class="t" style="top:410.83px;font-size:10.0px;color:#000;font-weight:bold;right:1583.28px;transform-origin:100% 50%;">5,196</span>
<span class="t" style="top:410.83px;font-size:10.0px;color:#000;font-weight:bold;right:1537.22px;transform-origin:100% 50%;">5,776</span>
<span class="t" style="top:410.83px;font-size:10.0px;color:#000;font-weight:bold;right:1491.16px;transform-origin:100% 50%;">5,945</span>
<span class="t" style="top:410.83px;font-size:10.0px;color:#000;font-weight:bold;right:1445.10px;transform-origin:100% 50%;">11,257</span>
<span class="t" style="top:410.83px;font-size:10.0px;color:#000;font-weight:bold;right:1399.04px;transform-origin:100% 50%;">14,078</span>
<span class="t" style="top:410.83px;font-size:10.0px;color:#000;font-weight:bold;right:1352.98px;transform-origin:100% 50%;">17,496</span>
<span class="t" style="top:410.83px;font-size:10.0px;color:#000;font-weight:bold;right:1306.92px;transform-origin:100% 50%;">21,596</span>
<span class="t" style="top:410.83px;font-size:10.0px;color:#000;font-weight:bold;right:1260.86px;transform-origin:100% 50%;">26,525</span>
<span class="t" style="top:410.83px;font-size:10.0px;color:#000;font-weight:bold;right:1214.80px;transform-origin:100% 50%;">32,500</span>
<span class="t" style="top:410.83px;font-size:10.0px;color:#000;font-weight:bold;right:1168.74px;transform-origin:100% 50%;">39,664</span>
<span class="t" style="top:410.83px;font-size:10.0px;color:#000;font-weight:bold;right:1122.68px;transform-origin:100% 50%;">48,243</span>
<span class="t" style="top:410.83px;font-size:10.0px;color:#000;font-weight:bold;right:1076.62px;transform-origin:100% 50%;">58,404</span>
<span class="t" style="top:410.83px;font-size:10.0px;color:#000;font-weight:bold;right:1030.56px;transform-origin:100% 50%;">70,495</span>
<span class="t" style="top:410.83px;font-size:10.0px;color:#000;font-weight:bold;right:984.50px;transform-origin:100% 50%;">70,495</span>
<span class="t" style="transform:scaleX(1.0250);top:424.13px;font-size:10.0px;color:#000;font-style:italic;left:66.10px;transform-origin:0 50%;">Gross Margin</span>
<div class="b" style="left:203px;top:421.30px;width:64px;height:13.30px;overflow:hidden"><span class="t" style="transform:translateX(-50%) scaleX(0.9779);top:2.03px;font-size:10.0px;color:#000;font-style:italic;left:32.00px;transform-origin:50% 50%;">% of Revenues</span></div>
<span class="t" style="top:424.13px;font-size:10.0px;color:#000;font-style:italic;right:1631.64px;transform-origin:100% 50%;">37.2%</span>
<span class="t" style="top:424.13px;font-size:10.0px;color:#000;font-style:italic;right:1585.58px;transform-origin:100% 50%;">36.3%</span>
<span class="t" style="top:424.13px;font-size:10.0px;color:#000;font-style:italic;right:1539.52px;transform-origin:100% 50%;">33.8%</span>
<span class="t" style="top:424.13px;font-size:10.0px;color:#000;font-style:italic;right:1493.46px;transform-origin:100% 50%;">29.2%</span>
<span class="t" style="top:424.13px;font-size:10.0px;color:#000;font-style:italic;right:1447.40px;transform-origin:100% 50%;">47.5%</span>
<span class="t" style="top:424.13px;font-size:10.0px;color:#000;font-style:italic;right:1401.34px;transform-origin:100% 50%;">51.0%</span>
<span class="t" style="top:424.13px;font-size:10.0px;color:#000;font-style:italic;right:1355.28px;transform-origin:100% 50%;">54.3%</span>
<span class="t" style="top:424.13px;font-size:10.0px;color:#000;font-style:italic;right:1309.22px;transform-origin:100% 50%;">57.4%</span>
<span class="t" style="top:424.13px;font-size:10.0px;color:#000;font-style:italic;right:1263.16px;transform-origin:100% 50%;">60.3%</span>
<span class="t" style="top:424.13px;font-size:10.0px;color:#000;font-style:italic;right:1217.10px;transform-origin:100% 50%;">63.2%</span>
<span class="t" style="top:424.13px;font-size:10.0px;color:#000;font-style:italic;right:1171.04px;transform-origin:100% 50%;">66.0%</span>
<span class="t" style="top:424.13px;font-size:10.0px;color:#000;font-style:italic;right:1124.98px;transform-origin:100% 50%;">68.5%</span>
<span class="t" style="top:424.13px;font-size:10.0px;color:#000;font-style:italic;right:1078.92px;transform-origin:100% 50%;">70.8%</span>
<span class="t" style="top:424.13px;font-size:10.0px;color:#000;font-style:italic;right:1032.86px;transform-origin:100% 50%;">73.0%</span>
<span class="t" style="transform:scaleX(0.9286);top:440.93px;font-size:10.0px;color:#000;left:66.10px;transform-origin:0 50%;">SG&amp;A</span>
<span class="t" style="transform:translateX(-50%) scaleX(0.9867);top:440.93px;font-size:10.0px;color:#000;font-weight:bold;left:235.00px;transform-origin:50% 50%;">$000's</span>
<span class="t" style="top:440.93px;font-size:10.0px;color:#000;right:1629.34px;transform-origin:100% 50%;">-2,072</span>
<span class="t" style="top:440.93px;font-size:10.0px;color:#000;right:1583.28px;transform-origin:100% 50%;">-2,104</span>
<span class="t" style="top:440.93px;font-size:10.0px;color:#000;right:1537.22px;transform-origin:100% 50%;">-2,395</span>
<span class="t" style="top:440.93px;font-size:10.0px;color:#000;right:1491.16px;transform-origin:100% 50%;">-2,345</span>
<span class="t" style="top:440.93px;font-size:10.0px;color:#000;right:1445.10px;transform-origin:100% 50%;">-2,631</span>
<span class="t" style="top:440.93px;font-size:10.0px;color:#000;right:1399.04px;transform-origin:100% 50%;">-2,820</span>
<span class="t" style="top:440.93px;font-size:10.0px;color:#000;right:1352.98px;transform-origin:100% 50%;">-3,026</span>
<span class="t" style="top:440.93px;font-size:10.0px;color:#000;right:1306.92px;transform-origin:100% 50%;">-3,254</span>
<span class="t" style="top:440.93px;font-size:10.0px;color:#000;right:1260.86px;transform-origin:100% 50%;">-3,508</span>
<span class="t" style="top:440.93px;font-size:10.0px;color:#000;right:1214.80px;transform-origin:100% 50%;">-3,783</span>
<span class="t" style="top:440.93px;font-size:10.0px;color:#000;right:1168.74px;transform-origin:100% 50%;">-4,093</span>
<span class="t" style="top:440.93px;font-size:10.0px;color:#000;right:1122.68px;transform-origin:100% 50%;">-4,442</span>
<span class="t" style="top:440.93px;font-size:10.0px;color:#000;right:1076.62px;transform-origin:100% 50%;">-4,849</span>
<span class="t" style="top:440.93px;font-size:10.0px;color:#000;right:1030.56px;transform-origin:100% 50%;">-5,317</span>
<span class="t" style="top:440.93px;font-size:10.0px;color:#000;right:984.50px;transform-origin:100% 50%;">-5,317</span>
<span class="t" style="transform:scaleX(0.9189);top:454.23px;font-size:10.0px;color:#000;font-weight:bold;left:66.10px;transform-origin:0 50%;">EBITDA</span>
<span class="t" style="transform:translateX(-50%) scaleX(0.9867);top:454.23px;font-size:10.0px;color:#000;font-weight:bold;left:235.00px;transform-origin:50% 50%;">$000's</span>
<span class="t" style="top:454.23px;font-size:10.0px;color:#000;font-weight:bold;right:1629.34px;transform-origin:100% 50%;">2,446</span>
<span class="t" style="top:454.23px;font-size:10.0px;color:#000;font-weight:bold;right:1583.28px;transform-origin:100% 50%;">3,092</span>
<span class="t" style="top:454.23px;font-size:10.0px;color:#000;font-weight:bold;right:1537.22px;transform-origin:100% 50%;">3,381</span>
<span class="t" style="top:454.23px;font-size:10.0px;color:#000;font-weight:bold;right:1491.16px;transform-origin:100% 50%;">3,599</span>
<span class="t" style="top:454.23px;font-size:10.0px;color:#000;font-weight:bold;right:1445.10px;transform-origin:100% 50%;">8,627</span>
<span class="t" style="top:454.23px;font-size:10.0px;color:#000;font-weight:bold;right:1399.04px;transform-origin:100% 50%;">11,258</span>
<span class="t" style="top:454.23px;font-size:10.0px;color:#000;font-weight:bold;right:1352.98px;transform-origin:100% 50%;">14,471</span>
<span class="t" style="top:454.23px;font-size:10.0px;color:#000;font-weight:bold;right:1306.92px;transform-origin:100% 50%;">18,342</span>
<span class="t" style="top:454.23px;font-size:10.0px;color:#000;font-weight:bold;right:1260.86px;transform-origin:100% 50%;">23,017</span>
<span class="t" style="top:454.23px;font-size:10.0px;color:#000;font-weight:bold;right:1214.80px;transform-origin:100% 50%;">28,717</span>
<span class="t" style="top:454.23px;font-size:10.0px;color:#000;font-weight:bold;right:1168.74px;transform-origin:100% 50%;">35,572</span>
<span class="t" style="top:454.23px;font-size:10.0px;color:#000;font-weight:bold;right:1122.68px;transform-origin:100% 50%;">43,801</span>
<span class="t" style="top:454.23px;font-size:10.0px;color:#000;font-weight:bold;right:1076.62px;transform-origin:100% 50%;">53,556</span>
<span class="t" style="top:454.23px;font-size:10.0px;color:#000;font-weight:bold;right:1030.56px;transform-origin:100% 50%;">65,178</span>
<span class="t" style="top:454.23px;font-size:10.0px;color:#000;font-weight:bold;right:984.50px;transform-origin:100% 50%;">65,178</span>
<span class="t" style="transform:scaleX(1.0145);top:467.53px;font-size:10.0px;color:#000;font-style:italic;left:66.10px;transform-origin:0 50%;">EBITDA Margin</span>
<span class="t" style="top:467.53px;font-size:10.0px;color:#000;font-style:italic;right:1631.64px;transform-origin:100% 50%;">20.1%</span>
<span class="t" style="top:467.53px;font-size:10.0px;color:#000;font-style:italic;right:1585.58px;transform-origin:100% 50%;">21.6%</span>
<span class="t" style="top:467.53px;font-size:10.0px;color:#000;font-style:italic;right:1539.52px;transform-origin:100% 50%;">19.8%</span>
<span class="t" style="top:467.53px;font-size:10.0px;color:#000;font-style:italic;right:1493.46px;transform-origin:100% 50%;">17.7%</span>
<span class="t" style="top:467.53px;font-size:10.0px;color:#000;font-style:italic;right:1447.40px;transform-origin:100% 50%;">36.4%</span>
<span class="t" style="top:467.53px;font-size:10.0px;color:#000;font-style:italic;right:1401.34px;transform-origin:100% 50%;">40.8%</span>
<span class="t" style="top:467.53px;font-size:10.0px;color:#000;font-style:italic;right:1355.28px;transform-origin:100% 50%;">44.9%</span>
<span class="t" style="top:467.53px;font-size:10.0px;color:#000;font-style:italic;right:1309.22px;transform-origin:100% 50%;">48.8%</span>
<span class="t" style="top:467.53px;font-size:10.0px;color:#000;font-style:italic;right:1263.16px;transform-origin:100% 50%;">52.4%</span>
<span class="t" style="top:467.53px;font-size:10.0px;color:#000;font-style:italic;right:1217.10px;transform-origin:100% 50%;">55.9%</span>
<span class="t" style="top:467.53px;font-size:10.0px;color:#000;font-style:italic;right:1171.04px;transform-origin:100% 50%;">59.2%</span>
<span class="t" style="top:467.53px;font-size:10.0px;color:#000;font-style:italic;right:1124.98px;transform-origin:100% 50%;">62.2%</span>
<span class="t" style="top:467.53px;font-size:10.0px;color:#000;font-style:italic;right:1078.92px;transform-origin:100% 50%;">65.0%</span>
<span class="t" style="top:467.53px;font-size:10.0px;color:#000;font-style:italic;right:1032.86px;transform-origin:100% 50%;">67.5%</span>
<span class="t" style="transform:scaleX(1.0000);top:484.33px;font-size:10.0px;color:#000;left:66.10px;transform-origin:0 50%;">D&amp;A</span>
<span class="t" style="transform:translateX(-50%) scaleX(0.9867);top:484.33px;font-size:10.0px;color:#000;font-weight:bold;left:235.00px;transform-origin:50% 50%;">$000's</span>
<span class="t" style="top:484.33px;font-size:10.0px;color:#000;right:1629.34px;transform-origin:100% 50%;">-1,296</span>
<span class="t" style="top:484.33px;font-size:10.0px;color:#000;right:1583.28px;transform-origin:100% 50%;">-1,337</span>
<span class="t" style="top:484.33px;font-size:10.0px;color:#000;right:1537.22px;transform-origin:100% 50%;">-1,503</span>
<span class="t" style="top:484.33px;font-size:10.0px;color:#000;right:1491.16px;transform-origin:100% 50%;">-1,913</span>
<span class="t" style="top:484.33px;font-size:10.0px;color:#000;right:1445.10px;transform-origin:100% 50%;">-2,249</span>
<span class="t" style="top:484.33px;font-size:10.0px;color:#000;right:1399.04px;transform-origin:100% 50%;">-2,658</span>
<span class="t" style="top:484.33px;font-size:10.0px;color:#000;right:1352.98px;transform-origin:100% 50%;">-3,115</span>
<span class="t" style="top:484.33px;font-size:10.0px;color:#000;right:1306.92px;transform-origin:100% 50%;">-3,625</span>
<span class="t" style="top:484.33px;font-size:10.0px;color:#000;right:1260.86px;transform-origin:100% 50%;">-4,195</span>
<span class="t" style="top:484.33px;font-size:10.0px;color:#000;right:1214.80px;transform-origin:100% 50%;">-4,833</span>
<span class="t" style="top:484.33px;font-size:10.0px;color:#000;right:1168.74px;transform-origin:100% 50%;">-5,547</span>
<span class="t" style="top:484.33px;font-size:10.0px;color:#000;right:1122.68px;transform-origin:100% 50%;">-4,169</span>
<span class="t" style="top:484.33px;font-size:10.0px;color:#000;right:1076.62px;transform-origin:100% 50%;">-4,667</span>
<span class="t" style="top:484.33px;font-size:10.0px;color:#000;right:1030.56px;transform-origin:100% 50%;">-5,229</span>
<span class="t" style="top:484.33px;font-size:10.0px;color:#000;right:984.50px;transform-origin:100% 50%;">-5,229</span>
<span class="t" style="transform:scaleX(0.8913);top:497.63px;font-size:10.0px;color:#000;font-weight:bold;left:66.10px;transform-origin:0 50%;">EBIT</span>
<span class="t" style="transform:translateX(-50%) scaleX(0.9867);top:497.63px;font-size:10.0px;color:#000;font-weight:bold;left:235.00px;transform-origin:50% 50%;">$000's</span>
<span class="t" style="top:497.63px;font-size:10.0px;color:#000;font-weight:bold;right:1629.34px;transform-origin:100% 50%;">1,150</span>
<span class="t" style="top:497.63px;font-size:10.0px;color:#000;font-weight:bold;right:1583.28px;transform-origin:100% 50%;">1,756</span>
<span class="t" style="top:497.63px;font-size:10.0px;color:#000;font-weight:bold;right:1537.22px;transform-origin:100% 50%;">1,878</span>
<span class="t" style="top:497.63px;font-size:10.0px;color:#000;font-weight:bold;right:1491.16px;transform-origin:100% 50%;">1,686</span>
<span class="t" style="top:497.63px;font-size:10.0px;color:#000;font-weight:bold;right:1445.10px;transform-origin:100% 50%;">6,377</span>
<span class="t" style="top:497.63px;font-size:10.0px;color:#000;font-weight:bold;right:1399.04px;transform-origin:100% 50%;">8,600</span>
<span class="t" style="top:497.63px;font-size:10.0px;color:#000;font-weight:bold;right:1352.98px;transform-origin:100% 50%;">11,356</span>
<span class="t" style="top:497.63px;font-size:10.0px;color:#000;font-weight:bold;right:1306.92px;transform-origin:100% 50%;">14,717</span>
<span class="t" style="top:497.63px;font-size:10.0px;color:#000;font-weight:bold;right:1260.86px;transform-origin:100% 50%;">18,822</span>
<span class="t" style="top:497.63px;font-size:10.0px;color:#000;font-weight:bold;right:1214.80px;transform-origin:100% 50%;">23,884</span>
<span class="t" style="top:497.63px;font-size:10.0px;color:#000;font-weight:bold;right:1168.74px;transform-origin:100% 50%;">30,025</span>
<span class="t" style="top:497.63px;font-size:10.0px;color:#000;font-weight:bold;right:1122.68px;transform-origin:100% 50%;">39,632</span>
<span class="t" style="top:497.63px;font-size:10.0px;color:#000;font-weight:bold;right:1076.62px;transform-origin:100% 50%;">48,888</span>
<span class="t" style="top:497.63px;font-size:10.0px;color:#000;font-weight:bold;right:1030.56px;transform-origin:100% 50%;">59,950</span>
<span class="t" style="top:497.63px;font-size:10.0px;color:#000;font-weight:bold;right:984.50px;transform-origin:100% 50%;">59,950</span>
<span class="t" style="transform:scaleX(1.0000);top:510.93px;font-size:10.0px;color:#000;font-style:italic;left:66.10px;transform-origin:0 50%;">EBIT Margin</span>
<span class="t" style="top:510.93px;font-size:10.0px;color:#000;font-style:italic;right:1631.64px;transform-origin:100% 50%;">9.5%</span>
<span class="t" style="top:510.93px;font-size:10.0px;color:#000;font-style:italic;right:1585.58px;transform-origin:100% 50%;">12.3%</span>
<span class="t" style="top:510.93px;font-size:10.0px;color:#000;font-style:italic;right:1539.52px;transform-origin:100% 50%;">11.0%</span>
<span class="t" style="top:510.93px;font-size:10.0px;color:#000;font-style:italic;right:1493.46px;transform-origin:100% 50%;">8.3%</span>
<span class="t" style="top:510.93px;font-size:10.0px;color:#000;font-style:italic;right:1447.40px;transform-origin:100% 50%;">26.9%</span>
<span class="t" style="top:510.93px;font-size:10.0px;color:#000;font-style:italic;right:1401.34px;transform-origin:100% 50%;">31.1%</span>
<span class="t" style="top:510.93px;font-size:10.0px;color:#000;font-style:italic;right:1355.28px;transform-origin:100% 50%;">35.2%</span>
<span class="t" style="top:510.93px;font-size:10.0px;color:#000;font-style:italic;right:1309.22px;transform-origin:100% 50%;">39.1%</span>
<span class="t" style="top:510.93px;font-size:10.0px;color:#000;font-style:italic;right:1263.16px;transform-origin:100% 50%;">42.8%</span>
<span class="t" style="top:510.93px;font-size:10.0px;color:#000;font-style:italic;right:1217.10px;transform-origin:100% 50%;">46.5%</span>
<span class="t" style="top:510.93px;font-size:10.0px;color:#000;font-style:italic;right:1171.04px;transform-origin:100% 50%;">49.9%</span>
<span class="t" style="top:510.93px;font-size:10.0px;color:#000;font-style:italic;right:1124.98px;transform-origin:100% 50%;">56.3%</span>
<span class="t" style="top:510.93px;font-size:10.0px;color:#000;font-style:italic;right:1078.92px;transform-origin:100% 50%;">59.3%</span>
<span class="t" style="top:510.93px;font-size:10.0px;color:#000;font-style:italic;right:1032.86px;transform-origin:100% 50%;">62.1%</span>
<span class="t" style="transform:scaleX(1.0000);top:527.73px;font-size:10.0px;color:#000;left:66.10px;transform-origin:0 50%;">Taxes</span>
<span class="t" style="transform:translateX(-50%) scaleX(0.9867);top:527.73px;font-size:10.0px;color:#000;font-weight:bold;left:235.00px;transform-origin:50% 50%;">$000's</span>
<span class="t" style="top:527.73px;font-size:10.0px;color:#000;right:1629.34px;transform-origin:100% 50%;">-345</span>
<span class="t" style="top:527.73px;font-size:10.0px;color:#000;right:1583.28px;transform-origin:100% 50%;">-527</span>
<span class="t" style="top:527.73px;font-size:10.0px;color:#000;right:1537.22px;transform-origin:100% 50%;">-563</span>
<span class="t" style="top:527.73px;font-size:10.0px;color:#000;right:1491.16px;transform-origin:100% 50%;">-506</span>
<span class="t" style="top:527.73px;font-size:10.0px;color:#000;right:1445.10px;transform-origin:100% 50%;">-1,913</span>
<span class="t" style="top:527.73px;font-size:10.0px;color:#000;right:1399.04px;transform-origin:100% 50%;">-2,580</span>
<span class="t" style="top:527.73px;font-size:10.0px;color:#000;right:1352.98px;transform-origin:100% 50%;">-3,407</span>
<span class="t" style="top:527.73px;font-size:10.0px;color:#000;right:1306.92px;transform-origin:100% 50%;">-4,415</span>
<span class="t" style="top:527.73px;font-size:10.0px;color:#000;right:1260.86px;transform-origin:100% 50%;">-5,647</span>
<span class="t" style="top:527.73px;font-size:10.0px;color:#000;right:1214.80px;transform-origin:100% 50%;">-7,165</span>
<span class="t" style="top:527.73px;font-size:10.0px;color:#000;right:1168.74px;transform-origin:100% 50%;">-9,007</span>
<span class="t" style="top:527.73px;font-size:10.0px;color:#000;right:1122.68px;transform-origin:100% 50%;">-11,890</span>
<span class="t" style="top:527.73px;font-size:10.0px;color:#000;right:1076.62px;transform-origin:100% 50%;">-14,667</span>
<span class="t" style="top:527.73px;font-size:10.0px;color:#000;right:1030.56px;transform-origin:100% 50%;">-17,985</span>
<span class="t" style="top:527.73px;font-size:10.0px;color:#000;right:984.50px;transform-origin:100% 50%;">-17,985</span>
<span class="t" style="transform:scaleX(0.9647);top:541.03px;font-size:10.0px;color:#000;font-weight:bold;left:66.10px;transform-origin:0 50%;">NOPAT</span>
<span class="t" style="transform:translateX(-50%) scaleX(0.9867);top:541.03px;font-size:10.0px;color:#000;font-weight:bold;left:235.00px;transform-origin:50% 50%;">$000's</span>
<span class="t" style="top:541.03px;font-size:10.0px;color:#000;font-weight:bold;right:1629.34px;transform-origin:100% 50%;">805</span>
<span class="t" style="top:541.03px;font-size:10.0px;color:#000;font-weight:bold;right:1583.28px;transform-origin:100% 50%;">1,229</span>
<span class="t" style="top:541.03px;font-size:10.0px;color:#000;font-weight:bold;right:1537.22px;transform-origin:100% 50%;">1,314</span>
<span class="t" style="top:541.03px;font-size:10.0px;color:#000;font-weight:bold;right:1491.16px;transform-origin:100% 50%;">1,180</span>
<span class="t" style="top:541.03px;font-size:10.0px;color:#000;font-weight:bold;right:1445.10px;transform-origin:100% 50%;">4,464</span>
<span class="t" style="top:541.03px;font-size:10.0px;color:#000;font-weight:bold;right:1399.04px;transform-origin:100% 50%;">6,020</span>
<span class="t" style="top:541.03px;font-size:10.0px;color:#000;font-weight:bold;right:1352.98px;transform-origin:100% 50%;">7,949</span>
<span class="t" style="top:541.03px;font-size:10.0px;color:#000;font-weight:bold;right:1306.92px;transform-origin:100% 50%;">10,302</span>
<span class="t" style="top:541.03px;font-size:10.0px;color:#000;font-weight:bold;right:1260.86px;transform-origin:100% 50%;">13,175</span>
<span class="t" style="top:541.03px;font-size:10.0px;color:#000;font-weight:bold;right:1214.80px;transform-origin:100% 50%;">16,719</span>
<span class="t" style="top:541.03px;font-size:10.0px;color:#000;font-weight:bold;right:1168.74px;transform-origin:100% 50%;">21,017</span>
<span class="t" style="top:541.03px;font-size:10.0px;color:#000;font-weight:bold;right:1122.68px;transform-origin:100% 50%;">27,742</span>
<span class="t" style="top:541.03px;font-size:10.0px;color:#000;font-weight:bold;right:1076.62px;transform-origin:100% 50%;">34,222</span>
<span class="t" style="top:541.03px;font-size:10.0px;color:#000;font-weight:bold;right:1030.56px;transform-origin:100% 50%;">41,965</span>
<span class="t" style="top:541.03px;font-size:10.0px;color:#000;font-weight:bold;right:984.50px;transform-origin:100% 50%;">41,965</span>
<span class="t" style="transform:scaleX(1.0139);top:554.33px;font-size:10.0px;color:#000;left:66.10px;transform-origin:0 50%;">(+) D&amp;A</span>
<span class="t" style="transform:translateX(-50%) scaleX(0.9867);top:554.33px;font-size:10.0px;color:#000;font-weight:bold;left:235.00px;transform-origin:50% 50%;">$000's</span>
<span class="t" style="top:554.33px;font-size:10.0px;color:#000;right:1629.34px;transform-origin:100% 50%;">1,296</span>
<span class="t" style="top:554.33px;font-size:10.0px;color:#000;right:1583.28px;transform-origin:100% 50%;">1,337</span>
<span class="t" style="top:554.33px;font-size:10.0px;color:#000;right:1537.22px;transform-origin:100% 50%;">1,503</span>
<span class="t" style="top:554.33px;font-size:10.0px;color:#000;right:1491.16px;transform-origin:100% 50%;">1,913</span>
<span class="t" style="top:554.33px;font-size:10.0px;color:#000;right:1445.10px;transform-origin:100% 50%;">2,249</span>
<span class="t" style="top:554.33px;font-size:10.0px;color:#000;right:1399.04px;transform-origin:100% 50%;">2,658</span>
<span class="t" style="top:554.33px;font-size:10.0px;color:#000;right:1352.98px;transform-origin:100% 50%;">3,115</span>
<span class="t" style="top:554.33px;font-size:10.0px;color:#000;right:1306.92px;transform-origin:100% 50%;">3,625</span>
<span class="t" style="top:554.33px;font-size:10.0px;color:#000;right:1260.86px;transform-origin:100% 50%;">4,195</span>
<span class="t" style="top:554.33px;font-size:10.0px;color:#000;right:1214.80px;transform-origin:100% 50%;">4,833</span>
<span class="t" style="top:554.33px;font-size:10.0px;color:#000;right:1168.74px;transform-origin:100% 50%;">5,547</span>
<span class="t" style="top:554.33px;font-size:10.0px;color:#000;right:1122.68px;transform-origin:100% 50%;">4,169</span>
<span class="t" style="top:554.33px;font-size:10.0px;color:#000;right:1076.62px;transform-origin:100% 50%;">4,667</span>
<span class="t" style="top:554.33px;font-size:10.0px;color:#000;right:1030.56px;transform-origin:100% 50%;">5,229</span>
<span class="t" style="top:554.33px;font-size:10.0px;color:#000;right:984.50px;transform-origin:100% 50%;">5,229</span>
<span class="t" style="transform:scaleX(1.0130);top:567.63px;font-size:10.0px;color:#000;left:66.10px;transform-origin:0 50%;">(-) Change in WK</span>
<span class="t" style="transform:translateX(-50%) scaleX(0.9867);top:567.63px;font-size:10.0px;color:#000;font-weight:bold;left:235.00px;transform-origin:50% 50%;">$000's</span>
<span class="t" style="top:567.63px;font-size:10.0px;color:#000;right:1445.10px;transform-origin:100% 50%;">-1,101</span>
<span class="t" style="top:567.63px;font-size:10.0px;color:#000;right:1399.04px;transform-origin:100% 50%;">-576</span>
<span class="t" style="top:567.63px;font-size:10.0px;color:#000;right:1352.98px;transform-origin:100% 50%;">-708</span>
<span class="t" style="top:567.63px;font-size:10.0px;color:#000;right:1306.92px;transform-origin:100% 50%;">-828</span>
<span class="t" style="top:567.63px;font-size:10.0px;color:#000;right:1260.86px;transform-origin:100% 50%;">-984</span>
<span class="t" style="top:567.63px;font-size:10.0px;color:#000;right:1214.80px;transform-origin:100% 50%;">-1,155</span>
<span class="t" style="top:567.63px;font-size:10.0px;color:#000;right:1168.74px;transform-origin:100% 50%;">-1,414</span>
<span class="t" style="top:567.63px;font-size:10.0px;color:#000;right:1122.68px;transform-origin:100% 50%;">-1,655</span>
<span class="t" style="top:567.63px;font-size:10.0px;color:#000;right:1076.62px;transform-origin:100% 50%;">-1,953</span>
<span class="t" style="top:567.63px;font-size:10.0px;color:#000;right:1030.56px;transform-origin:100% 50%;">-2,272</span>
<span class="t" style="top:567.63px;font-size:10.0px;color:#000;right:984.50px;transform-origin:100% 50%;">-2,272</span>
<span class="t" style="transform:scaleX(0.9651);top:580.93px;font-size:10.0px;color:#000;left:66.10px;transform-origin:0 50%;">(-) CapEx</span>
<span class="t" style="transform:translateX(-50%) scaleX(0.9867);top:580.93px;font-size:10.0px;color:#000;font-weight:bold;left:235.00px;transform-origin:50% 50%;">$000's</span>
<span class="t" style="top:580.93px;font-size:10.0px;color:#000;right:1445.10px;transform-origin:100% 50%;">-2,776</span>
<span class="t" style="top:580.93px;font-size:10.0px;color:#000;right:1399.04px;transform-origin:100% 50%;">-3,101</span>
<span class="t" style="top:580.93px;font-size:10.0px;color:#000;right:1352.98px;transform-origin:100% 50%;">-3,455</span>
<span class="t" style="top:580.93px;font-size:10.0px;color:#000;right:1306.92px;transform-origin:100% 50%;">-3,855</span>
<span class="t" style="top:580.93px;font-size:10.0px;color:#000;right:1260.86px;transform-origin:100% 50%;">-4,306</span>
<span class="t" style="top:580.93px;font-size:10.0px;color:#000;right:1214.80px;transform-origin:100% 50%;">-4,812</span>
<span class="t" style="top:580.93px;font-size:10.0px;color:#000;right:1168.74px;transform-origin:100% 50%;">-5,379</span>
<span class="t" style="top:580.93px;font-size:10.0px;color:#000;right:1122.68px;transform-origin:100% 50%;">-6,009</span>
<span class="t" style="top:580.93px;font-size:10.0px;color:#000;right:1076.62px;transform-origin:100% 50%;">-6,728</span>
<span class="t" style="top:580.93px;font-size:10.0px;color:#000;right:1030.56px;transform-origin:100% 50%;">-7,535</span>
<span class="t" style="top:580.93px;font-size:10.0px;color:#000;right:984.50px;transform-origin:100% 50%;">-5,229</span>
<span class="t" style="transform:scaleX(0.8684);top:594.23px;font-size:10.0px;color:#000;font-weight:bold;left:66.10px;transform-origin:0 50%;">FCF</span>
<span class="t" style="transform:translateX(-50%) scaleX(0.9867);top:594.23px;font-size:10.0px;color:#000;font-weight:bold;left:235.00px;transform-origin:50% 50%;">$000's</span>
<span class="t" style="top:594.23px;font-size:10.0px;color:#000;font-weight:bold;right:1445.10px;transform-origin:100% 50%;">2,836</span>
<span class="t" style="top:594.23px;font-size:10.0px;color:#000;font-weight:bold;right:1399.04px;transform-origin:100% 50%;">5,001</span>
<span class="t" style="top:594.23px;font-size:10.0px;color:#000;font-weight:bold;right:1352.98px;transform-origin:100% 50%;">6,901</span>
<span class="t" style="top:594.23px;font-size:10.0px;color:#000;font-weight:bold;right:1306.92px;transform-origin:100% 50%;">9,243</span>
<span class="t" style="top:594.23px;font-size:10.0px;color:#000;font-weight:bold;right:1260.86px;transform-origin:100% 50%;">12,080</span>
<span class="t" style="top:594.23px;font-size:10.0px;color:#000;font-weight:bold;right:1214.80px;transform-origin:100% 50%;">15,585</span>
<span class="t" style="top:594.23px;font-size:10.0px;color:#000;font-weight:bold;right:1168.74px;transform-origin:100% 50%;">19,771</span>
<span class="t" style="top:594.23px;font-size:10.0px;color:#000;font-weight:bold;right:1122.68px;transform-origin:100% 50%;">24,247</span>
<span class="t" style="top:594.23px;font-size:10.0px;color:#000;font-weight:bold;right:1076.62px;transform-origin:100% 50%;">30,208</span>
<span class="t" style="top:594.23px;font-size:10.0px;color:#000;font-weight:bold;right:1030.56px;transform-origin:100% 50%;">37,386</span>
<span class="t" style="top:594.23px;font-size:10.0px;color:#000;font-weight:bold;right:984.50px;transform-origin:100% 50%;">39,693</span>
<div class="b" style="left:456.20px;top:334.50px;width:0.00px;height:270.20px;border-left:1px dotted #7a7a7a;"></div>
<div class="b" style="left:64.20px;top:590.90px;width:899.20px;height:0.00px;border-top:1px dotted #6a6a6a;"></div>
<div class="b" style="left:962.90px;top:591.40px;width:0.00px;height:13.30px;border-left:1px dotted #8a8a8a;"></div>
<div class="b" style="left:63.90px;top:591.40px;width:0.00px;height:13.30px;border-left:1px dotted #8a8a8a;"></div>
<span class="t" style="transform:scaleX(0.8871);top:647.43px;font-size:10.0px;color:#000;font-weight:bold;left:66.10px;transform-origin:0 50%;">WACC</span>
<span class="t" style="transform:scaleX(0.8939);top:660.73px;font-size:10.0px;color:#000;font-weight:bold;left:66.10px;transform-origin:0 50%;">Breaks</span>
<span class="t" style="transform:scaleX(0.9394);top:674.03px;font-size:10.0px;color:#000;font-weight:bold;left:66.10px;transform-origin:0 50%;">Mid Year Convention</span>
<span class="t" style="top:647.43px;font-size:10.0px;color:#2fae63;left:235.00px;transform-origin:50% 50%;transform:translateX(-50%);">8.33%</span>
<span class="t" style="top:660.73px;font-size:10.0px;color:#3a36ff;left:235.00px;transform-origin:50% 50%;transform:translateX(-50%);">0.33%</span>
<span class="t" style="top:674.03px;font-size:10.0px;color:#3a36ff;left:233.40px;transform-origin:50% 50%;transform:translateX(-50%);">0.50</span>
<div class="b" style="left:63.90px;top:644.10px;width:202.80px;height:39.90px;border:1px dotted #666;box-sizing:border-box;"></div>
<div class="b" style="left:64.20px;top:657.40px;width:202.80px;height:0.00px;border-top:1px dotted #666;"></div>
<div class="b" style="left:64.20px;top:670.70px;width:202.80px;height:0.00px;border-top:1px dotted #666;"></div>
<span class="t" style="transform:translateX(-50%) scaleX(0.9226);top:700.63px;font-size:10.0px;color:#000;font-weight:bold;left:133.60px;transform-origin:50% 50%;">Period</span>
<span class="t" style="top:700.63px;font-size:10.0px;color:#000;font-weight:bold;left:478.57px;transform-origin:50% 50%;transform:translateX(-50%);">0.50</span>
<span class="t" style="top:700.63px;font-size:10.0px;color:#000;font-weight:bold;left:524.63px;transform-origin:50% 50%;transform:translateX(-50%);">1.50</span>
<span class="t" style="top:700.63px;font-size:10.0px;color:#000;font-weight:bold;left:570.69px;transform-origin:50% 50%;transform:translateX(-50%);">2.50</span>
<span class="t" style="top:700.63px;font-size:10.0px;color:#000;font-weight:bold;left:616.75px;transform-origin:50% 50%;transform:translateX(-50%);">3.50</span>
<span class="t" style="top:700.63px;font-size:10.0px;color:#000;font-weight:bold;left:662.81px;transform-origin:50% 50%;transform:translateX(-50%);">4.50</span>
<span class="t" style="top:700.63px;font-size:10.0px;color:#000;font-weight:bold;left:708.87px;transform-origin:50% 50%;transform:translateX(-50%);">5.50</span>
<span class="t" style="top:700.63px;font-size:10.0px;color:#000;font-weight:bold;left:754.93px;transform-origin:50% 50%;transform:translateX(-50%);">6.50</span>
<span class="t" style="top:700.63px;font-size:10.0px;color:#000;font-weight:bold;left:800.99px;transform-origin:50% 50%;transform:translateX(-50%);">7.50</span>
<span class="t" style="top:700.63px;font-size:10.0px;color:#000;font-weight:bold;left:847.05px;transform-origin:50% 50%;transform:translateX(-50%);">8.50</span>
<span class="t" style="top:700.63px;font-size:10.0px;color:#000;font-weight:bold;left:893.11px;transform-origin:50% 50%;transform:translateX(-50%);">9.50</span>
<span class="t" style="top:700.63px;font-size:10.0px;color:#000;font-weight:bold;left:939.17px;transform-origin:50% 50%;transform:translateX(-50%);">9.50</span>
<span class="t" style="transform:translateX(-50%) scaleX(0.8871);top:727.23px;font-size:10.0px;color:#000;font-weight:bold;text-decoration:underline;left:133.60px;transform-origin:50% 50%;">WACC</span>
<span class="t" style="top:740.53px;font-size:10.0px;color:#000;left:133.60px;transform-origin:50% 50%;transform:translateX(-50%);">7.67%</span>
<span class="t" style="top:740.53px;font-size:10.0px;color:#000;right:1445.10px;transform-origin:100% 50%;">2,733</span>
<span class="t" style="top:740.53px;font-size:10.0px;color:#000;right:1399.04px;transform-origin:100% 50%;">4,476</span>
<span class="t" style="top:740.53px;font-size:10.0px;color:#000;right:1352.98px;transform-origin:100% 50%;">5,737</span>
<span class="t" style="top:740.53px;font-size:10.0px;color:#000;right:1306.92px;transform-origin:100% 50%;">7,137</span>
<span class="t" style="top:740.53px;font-size:10.0px;color:#000;right:1260.86px;transform-origin:100% 50%;">8,663</span>
<span class="t" style="top:740.53px;font-size:10.0px;color:#000;right:1214.80px;transform-origin:100% 50%;">10,380</span>
<span class="t" style="top:740.53px;font-size:10.0px;color:#000;right:1168.74px;transform-origin:100% 50%;">12,231</span>
<span class="t" style="top:740.53px;font-size:10.0px;color:#000;right:1122.68px;transform-origin:100% 50%;">13,931</span>
<span class="t" style="top:740.53px;font-size:10.0px;color:#000;right:1076.62px;transform-origin:100% 50%;">16,120</span>
<span class="t" style="top:740.53px;font-size:10.0px;color:#000;right:1030.56px;transform-origin:100% 50%;">18,529</span>
<span class="t" style="top:740.53px;font-size:10.0px;color:#000;right:984.50px;transform-origin:100% 50%;">19,673</span>
<span class="t" style="top:753.83px;font-size:10.0px;color:#000;left:133.60px;transform-origin:50% 50%;transform:translateX(-50%);">8.00%</span>
<span class="t" style="top:753.83px;font-size:10.0px;color:#000;right:1445.10px;transform-origin:100% 50%;">2,729</span>
<span class="t" style="top:753.83px;font-size:10.0px;color:#000;right:1399.04px;transform-origin:100% 50%;">4,455</span>
<span class="t" style="top:753.83px;font-size:10.0px;color:#000;right:1352.98px;transform-origin:100% 50%;">5,693</span>
<span class="t" style="top:753.83px;font-size:10.0px;color:#000;right:1306.92px;transform-origin:100% 50%;">7,061</span>
<span class="t" style="top:753.83px;font-size:10.0px;color:#000;right:1260.86px;transform-origin:100% 50%;">8,544</span>
<span class="t" style="top:753.83px;font-size:10.0px;color:#000;right:1214.80px;transform-origin:100% 50%;">10,207</span>
<span class="t" style="top:753.83px;font-size:10.0px;color:#000;right:1168.74px;transform-origin:100% 50%;">11,990</span>
<span class="t" style="top:753.83px;font-size:10.0px;color:#000;right:1122.68px;transform-origin:100% 50%;">13,615</span>
<span class="t" style="top:753.83px;font-size:10.0px;color:#000;right:1076.62px;transform-origin:100% 50%;">15,706</span>
<span class="t" style="top:753.83px;font-size:10.0px;color:#000;right:1030.56px;transform-origin:100% 50%;">17,999</span>
<span class="t" style="top:753.83px;font-size:10.0px;color:#000;right:984.50px;transform-origin:100% 50%;">19,109</span>
<span class="t" style="top:767.13px;font-size:10.0px;color:#000;left:133.60px;transform-origin:50% 50%;transform:translateX(-50%);">8.33%</span>
<span class="t" style="top:767.13px;font-size:10.0px;color:#000;right:1445.10px;transform-origin:100% 50%;">2,725</span>
<span class="t" style="top:767.13px;font-size:10.0px;color:#000;right:1399.04px;transform-origin:100% 50%;">4,435</span>
<span class="t" style="top:767.13px;font-size:10.0px;color:#000;right:1352.98px;transform-origin:100% 50%;">5,650</span>
<span class="t" style="top:767.13px;font-size:10.0px;color:#000;right:1306.92px;transform-origin:100% 50%;">6,986</span>
<span class="t" style="top:767.13px;font-size:10.0px;color:#000;right:1260.86px;transform-origin:100% 50%;">8,428</span>
<span class="t" style="top:767.13px;font-size:10.0px;color:#000;right:1214.80px;transform-origin:100% 50%;">10,037</span>
<span class="t" style="top:767.13px;font-size:10.0px;color:#000;right:1168.74px;transform-origin:100% 50%;">11,754</span>
<span class="t" style="top:767.13px;font-size:10.0px;color:#000;right:1122.68px;transform-origin:100% 50%;">13,307</span>
<span class="t" style="top:767.13px;font-size:10.0px;color:#000;right:1076.62px;transform-origin:100% 50%;">15,304</span>
<span class="t" style="top:767.13px;font-size:10.0px;color:#000;right:1030.56px;transform-origin:100% 50%;">17,484</span>
<span class="t" style="top:767.13px;font-size:10.0px;color:#000;right:984.50px;transform-origin:100% 50%;">18,563</span>
<span class="t" style="top:780.43px;font-size:10.0px;color:#000;left:133.60px;transform-origin:50% 50%;transform:translateX(-50%);">8.66%</span>
<span class="t" style="top:780.43px;font-size:10.0px;color:#000;right:1445.10px;transform-origin:100% 50%;">2,721</span>
<span class="t" style="top:780.43px;font-size:10.0px;color:#000;right:1399.04px;transform-origin:100% 50%;">4,415</span>
<span class="t" style="top:780.43px;font-size:10.0px;color:#000;right:1352.98px;transform-origin:100% 50%;">5,607</span>
<span class="t" style="top:780.43px;font-size:10.0px;color:#000;right:1306.92px;transform-origin:100% 50%;">6,912</span>
<span class="t" style="top:780.43px;font-size:10.0px;color:#000;right:1260.86px;transform-origin:100% 50%;">8,313</span>
<span class="t" style="top:780.43px;font-size:10.0px;color:#000;right:1214.80px;transform-origin:100% 50%;">9,871</span>
<span class="t" style="top:780.43px;font-size:10.0px;color:#000;right:1168.74px;transform-origin:100% 50%;">11,524</span>
<span class="t" style="top:780.43px;font-size:10.0px;color:#000;right:1122.68px;transform-origin:100% 50%;">13,007</span>
<span class="t" style="top:780.43px;font-size:10.0px;color:#000;right:1076.62px;transform-origin:100% 50%;">14,913</span>
<span class="t" style="top:780.43px;font-size:10.0px;color:#000;right:1030.56px;transform-origin:100% 50%;">16,986</span>
<span class="t" style="top:780.43px;font-size:10.0px;color:#000;right:984.50px;transform-origin:100% 50%;">18,034</span>
<span class="t" style="top:793.73px;font-size:10.0px;color:#000;left:133.60px;transform-origin:50% 50%;transform:translateX(-50%);">8.99%</span>
<span class="t" style="top:793.73px;font-size:10.0px;color:#000;right:1445.10px;transform-origin:100% 50%;">2,717</span>
<span class="t" style="top:793.73px;font-size:10.0px;color:#000;right:1399.04px;transform-origin:100% 50%;">4,395</span>
<span class="t" style="top:793.73px;font-size:10.0px;color:#000;right:1352.98px;transform-origin:100% 50%;">5,565</span>
<span class="t" style="top:793.73px;font-size:10.0px;color:#000;right:1306.92px;transform-origin:100% 50%;">6,839</span>
<span class="t" style="top:793.73px;font-size:10.0px;color:#000;right:1260.86px;transform-origin:100% 50%;">8,201</span>
<span class="t" style="top:793.73px;font-size:10.0px;color:#000;right:1214.80px;transform-origin:100% 50%;">9,707</span>
<span class="t" style="top:793.73px;font-size:10.0px;color:#000;right:1168.74px;transform-origin:100% 50%;">11,299</span>
<span class="t" style="top:793.73px;font-size:10.0px;color:#000;right:1122.68px;transform-origin:100% 50%;">12,715</span>
<span class="t" style="top:793.73px;font-size:10.0px;color:#000;right:1076.62px;transform-origin:100% 50%;">14,534</span>
<span class="t" style="top:793.73px;font-size:10.0px;color:#000;right:1030.56px;transform-origin:100% 50%;">16,504</span>
<span class="t" style="top:793.73px;font-size:10.0px;color:#000;right:984.50px;transform-origin:100% 50%;">17,522</span>
<div class="b" style="left:547.66px;top:763.10px;width:48.26px;height:15.50px;border:1.8px solid #217346;box-sizing:border-box;"></div>
<div class="b" style="left:592.32px;top:775.20px;width:5.20px;height:5.20px;background:#217346;border:1px solid #fff;box-sizing:border-box;"></div>
<span class="t" style="transform:scaleX(0.9576);top:647.43px;font-size:10.0px;color:#000;font-weight:bold;left:1011.36px;transform-origin:0 50%;">Exit Multiple</span>
<span class="t" style="transform:scaleX(0.8939);top:660.73px;font-size:10.0px;color:#000;font-weight:bold;left:1011.36px;transform-origin:0 50%;">Breaks</span>
<span class="t" style="top:647.43px;font-size:10.0px;color:#3a36ff;left:1105.95px;transform-origin:50% 50%;transform:translateX(-50%);">15.0x</span>
<span class="t" style="top:660.73px;font-size:10.0px;color:#3a36ff;left:1105.95px;transform-origin:50% 50%;transform:translateX(-50%);">1.0x</span>
<div class="b" style="left:1009.16px;top:644.10px;width:124.04px;height:26.60px;border:1px dotted #666;box-sizing:border-box;"></div>
<div class="b" style="left:1009.46px;top:657.40px;width:124.04px;height:0.00px;border-top:1px dotted #666;"></div>
<div class="b" style="left:1009.46px;top:697.80px;width:55.14px;height:13.30px;background:#2581c4;"></div>
<span class="t" style="transform:translateX(-50%) scaleX(0.8871);top:700.63px;font-size:10.0px;color:#fff;font-weight:bold;left:1037.03px;transform-origin:50% 50%;">WACC</span>
<div class="b" style="left:1078.40px;top:697.80px;width:55.10px;height:13.30px;background:#2581c4;"></div>
<span class="t" style="transform:translateX(-50%) scaleX(0.9189);top:700.63px;font-size:10.0px;color:#fff;font-weight:bold;left:1105.95px;transform-origin:50% 50%;">DCF PV</span>
<div class="b" style="left:1147.40px;top:697.80px;width:165.90px;height:13.30px;background:#2581c4;"></div>
<span class="t" style="transform:translateX(-50%) scaleX(1.0000);top:700.63px;font-size:10.0px;color:#fff;font-weight:bold;left:1230.35px;transform-origin:50% 50%;">PV of Terminal Value</span>
<div class="b" style="left:1327.10px;top:697.80px;width:165.90px;height:13.30px;background:#2581c4;"></div>
<span class="t" style="transform:translateX(-50%) scaleX(1.0000);top:700.63px;font-size:10.0px;color:#fff;font-weight:bold;left:1410.05px;transform-origin:50% 50%;">Enterprise Value</span>
<div class="b" style="left:1506.80px;top:697.80px;width:165.90px;height:13.30px;background:#2581c4;"></div>
<span class="t" style="transform:translateX(-50%) scaleX(1.0366);top:700.63px;font-size:10.0px;color:#fff;font-weight:bold;left:1589.75px;transform-origin:50% 50%;">Net Debt</span>
<div class="b" style="left:1686.40px;top:697.80px;width:165.40px;height:13.30px;background:#2581c4;"></div>
<span class="t" style="transform:translateX(-50%) scaleX(1.0000);top:700.63px;font-size:10.0px;color:#fff;font-weight:bold;left:1769.10px;transform-origin:50% 50%;">Equity Value</span>
<span class="t" style="top:740.53px;font-size:10.0px;color:#000;font-weight:bold;left:1037.03px;transform-origin:50% 50%;transform:translateX(-50%);">7.67%</span>
<span class="t" style="top:753.83px;font-size:10.0px;color:#000;font-weight:bold;left:1037.03px;transform-origin:50% 50%;transform:translateX(-50%);">8.00%</span>
<span class="t" style="top:767.13px;font-size:10.0px;color:#000;font-weight:bold;left:1037.03px;transform-origin:50% 50%;transform:translateX(-50%);">8.33%</span>
<span class="t" style="top:780.43px;font-size:10.0px;color:#000;font-weight:bold;left:1037.03px;transform-origin:50% 50%;transform:translateX(-50%);">8.66%</span>
<span class="t" style="top:793.73px;font-size:10.0px;color:#000;font-weight:bold;left:1037.03px;transform-origin:50% 50%;transform:translateX(-50%);">8.99%</span>
<span class="t" style="top:740.53px;font-size:10.0px;color:#000;left:1105.95px;transform-origin:50% 50%;transform:translateX(-50%);">99,937</span>
<span class="t" style="top:753.83px;font-size:10.0px;color:#000;left:1105.95px;transform-origin:50% 50%;transform:translateX(-50%);">97,999</span>
<span class="t" style="top:767.13px;font-size:10.0px;color:#000;left:1105.95px;transform-origin:50% 50%;transform:translateX(-50%);">96,111</span>
<span class="t" style="top:780.43px;font-size:10.0px;color:#000;left:1105.95px;transform-origin:50% 50%;transform:translateX(-50%);">94,270</span>
<span class="t" style="top:793.73px;font-size:10.0px;color:#000;left:1105.95px;transform-origin:50% 50%;transform:translateX(-50%);">92,475</span>
<div class="b" style="left:1147.40px;top:711.10px;width:165.90px;height:13.30px;background:#f2f2f2;"></div>
<span class="t" style="transform:translateX(-50%) scaleX(1.0000);top:713.93px;font-size:10.0px;color:#000;font-weight:bold;text-decoration:underline;left:1230.35px;transform-origin:50% 50%;">Exit Multiple</span>
<span class="t" style="top:727.23px;font-size:10.0px;color:#000;font-weight:bold;left:1175.05px;transform-origin:50% 50%;transform:translateX(-50%);">14.0x</span>
<span class="t" style="top:727.23px;font-size:10.0px;color:#000;font-weight:bold;left:1230.35px;transform-origin:50% 50%;transform:translateX(-50%);">15.0x</span>
<span class="t" style="top:727.23px;font-size:10.0px;color:#000;font-weight:bold;left:1285.65px;transform-origin:50% 50%;transform:translateX(-50%);">16.0x</span>
<div class="b" style="left:1147.40px;top:736.80px;width:165.90px;height:1.30px;background:#5c5c5c;"></div>
<span class="t" style="top:740.53px;font-size:10.0px;color:#000;left:1175.05px;transform-origin:50% 50%;transform:translateX(-50%);">452,257</span>
<span class="t" style="top:740.53px;font-size:10.0px;color:#000;left:1230.35px;transform-origin:50% 50%;transform:translateX(-50%);">484,561</span>
<span class="t" style="top:740.53px;font-size:10.0px;color:#000;left:1285.65px;transform-origin:50% 50%;transform:translateX(-50%);">516,865</span>
<span class="t" style="top:753.83px;font-size:10.0px;color:#000;left:1175.05px;transform-origin:50% 50%;transform:translateX(-50%);">439,298</span>
<span class="t" style="top:753.83px;font-size:10.0px;color:#000;left:1230.35px;transform-origin:50% 50%;transform:translateX(-50%);">470,677</span>
<span class="t" style="top:753.83px;font-size:10.0px;color:#000;left:1285.65px;transform-origin:50% 50%;transform:translateX(-50%);">502,055</span>
<span class="t" style="top:767.13px;font-size:10.0px;color:#000;left:1175.05px;transform-origin:50% 50%;transform:translateX(-50%);">426,748</span>
<span class="t" style="top:767.13px;font-size:10.0px;color:#000;left:1230.35px;transform-origin:50% 50%;transform:translateX(-50%);">457,230</span>
<span class="t" style="top:767.13px;font-size:10.0px;color:#000;left:1285.65px;transform-origin:50% 50%;transform:translateX(-50%);">487,712</span>
<span class="t" style="top:780.43px;font-size:10.0px;color:#000;left:1175.05px;transform-origin:50% 50%;transform:translateX(-50%);">414,593</span>
<span class="t" style="top:780.43px;font-size:10.0px;color:#000;left:1230.35px;transform-origin:50% 50%;transform:translateX(-50%);">444,207</span>
<span class="t" style="top:780.43px;font-size:10.0px;color:#000;left:1285.65px;transform-origin:50% 50%;transform:translateX(-50%);">473,821</span>
<span class="t" style="top:793.73px;font-size:10.0px;color:#000;left:1175.05px;transform-origin:50% 50%;transform:translateX(-50%);">402,820</span>
<span class="t" style="top:793.73px;font-size:10.0px;color:#000;left:1230.35px;transform-origin:50% 50%;transform:translateX(-50%);">431,593</span>
<span class="t" style="top:793.73px;font-size:10.0px;color:#000;left:1285.65px;transform-origin:50% 50%;transform:translateX(-50%);">460,366</span>
<div class="b" style="left:1327.10px;top:711.10px;width:165.90px;height:13.30px;background:#f2f2f2;"></div>
<span class="t" style="transform:translateX(-50%) scaleX(1.0000);top:713.93px;font-size:10.0px;color:#000;font-weight:bold;text-decoration:underline;left:1410.05px;transform-origin:50% 50%;">Exit Multiple</span>
<span class="t" style="top:727.23px;font-size:10.0px;color:#000;font-weight:bold;left:1354.75px;transform-origin:50% 50%;transform:translateX(-50%);">14.0x</span>
<span class="t" style="top:727.23px;font-size:10.0px;color:#000;font-weight:bold;left:1410.05px;transform-origin:50% 50%;transform:translateX(-50%);">15.0x</span>
<span class="t" style="top:727.23px;font-size:10.0px;color:#000;font-weight:bold;left:1465.35px;transform-origin:50% 50%;transform:translateX(-50%);">16.0x</span>
<div class="b" style="left:1327.10px;top:736.80px;width:165.90px;height:1.30px;background:#5c5c5c;"></div>
<span class="t" style="top:740.53px;font-size:10.0px;color:#000;left:1354.75px;transform-origin:50% 50%;transform:translateX(-50%);">552,195</span>
<span class="t" style="top:740.53px;font-size:10.0px;color:#000;left:1410.05px;transform-origin:50% 50%;transform:translateX(-50%);">584,499</span>
<span class="t" style="top:740.53px;font-size:10.0px;color:#000;left:1465.35px;transform-origin:50% 50%;transform:translateX(-50%);">616,803</span>
<span class="t" style="top:753.83px;font-size:10.0px;color:#000;left:1354.75px;transform-origin:50% 50%;transform:translateX(-50%);">537,297</span>
<span class="t" style="top:753.83px;font-size:10.0px;color:#000;left:1410.05px;transform-origin:50% 50%;transform:translateX(-50%);">568,676</span>
<span class="t" style="top:753.83px;font-size:10.0px;color:#000;left:1465.35px;transform-origin:50% 50%;transform:translateX(-50%);">600,054</span>
<span class="t" style="top:767.13px;font-size:10.0px;color:#000;left:1354.75px;transform-origin:50% 50%;transform:translateX(-50%);">522,859</span>
<span class="t" style="top:767.13px;font-size:10.0px;color:#000;left:1410.05px;transform-origin:50% 50%;transform:translateX(-50%);">553,341</span>
<span class="t" style="top:767.13px;font-size:10.0px;color:#000;left:1465.35px;transform-origin:50% 50%;transform:translateX(-50%);">583,823</span>
<span class="t" style="top:780.43px;font-size:10.0px;color:#000;left:1354.75px;transform-origin:50% 50%;transform:translateX(-50%);">508,863</span>
<span class="t" style="top:780.43px;font-size:10.0px;color:#000;left:1410.05px;transform-origin:50% 50%;transform:translateX(-50%);">538,477</span>
<span class="t" style="top:780.43px;font-size:10.0px;color:#000;left:1465.35px;transform-origin:50% 50%;transform:translateX(-50%);">568,091</span>
<span class="t" style="top:793.73px;font-size:10.0px;color:#000;left:1354.75px;transform-origin:50% 50%;transform:translateX(-50%);">495,295</span>
<span class="t" style="top:793.73px;font-size:10.0px;color:#000;left:1410.05px;transform-origin:50% 50%;transform:translateX(-50%);">524,068</span>
<span class="t" style="top:793.73px;font-size:10.0px;color:#000;left:1465.35px;transform-origin:50% 50%;transform:translateX(-50%);">552,841</span>
<div class="b" style="left:1686.40px;top:711.10px;width:165.40px;height:13.30px;background:#f2f2f2;"></div>
<span class="t" style="transform:translateX(-50%) scaleX(1.0000);top:713.93px;font-size:10.0px;color:#000;font-weight:bold;text-decoration:underline;left:1769.10px;transform-origin:50% 50%;">Exit Multiple</span>
<span class="t" style="top:727.23px;font-size:10.0px;color:#000;font-weight:bold;left:1713.90px;transform-origin:50% 50%;transform:translateX(-50%);">14.0x</span>
<span class="t" style="top:727.23px;font-size:10.0px;color:#000;font-weight:bold;left:1769.00px;transform-origin:50% 50%;transform:translateX(-50%);">15.0x</span>
<span class="t" style="top:727.23px;font-size:10.0px;color:#000;font-weight:bold;left:1824.20px;transform-origin:50% 50%;transform:translateX(-50%);">16.0x</span>
<div class="b" style="left:1686.40px;top:736.80px;width:165.40px;height:1.30px;background:#5c5c5c;"></div>
<span class="t" style="top:740.53px;font-size:10.0px;color:#000;left:1713.90px;transform-origin:50% 50%;transform:translateX(-50%);">544,031</span>
<span class="t" style="top:740.53px;font-size:10.0px;color:#000;left:1769.00px;transform-origin:50% 50%;transform:translateX(-50%);">576,335</span>
<span class="t" style="top:740.53px;font-size:10.0px;color:#000;left:1824.20px;transform-origin:50% 50%;transform:translateX(-50%);">608,639</span>
<span class="t" style="top:753.83px;font-size:10.0px;color:#000;left:1713.90px;transform-origin:50% 50%;transform:translateX(-50%);">529,134</span>
<span class="t" style="top:753.83px;font-size:10.0px;color:#000;left:1769.00px;transform-origin:50% 50%;transform:translateX(-50%);">560,512</span>
<span class="t" style="top:753.83px;font-size:10.0px;color:#000;left:1824.20px;transform-origin:50% 50%;transform:translateX(-50%);">591,891</span>
<span class="t" style="top:767.13px;font-size:10.0px;color:#000;left:1713.90px;transform-origin:50% 50%;transform:translateX(-50%);">514,695</span>
<span class="t" style="top:767.13px;font-size:10.0px;color:#000;left:1769.00px;transform-origin:50% 50%;transform:translateX(-50%);">545,177</span>
<span class="t" style="top:767.13px;font-size:10.0px;color:#000;left:1824.20px;transform-origin:50% 50%;transform:translateX(-50%);">575,659</span>
<span class="t" style="top:780.43px;font-size:10.0px;color:#000;left:1713.90px;transform-origin:50% 50%;transform:translateX(-50%);">500,700</span>
<span class="t" style="top:780.43px;font-size:10.0px;color:#000;left:1769.00px;transform-origin:50% 50%;transform:translateX(-50%);">530,313</span>
<span class="t" style="top:780.43px;font-size:10.0px;color:#000;left:1824.20px;transform-origin:50% 50%;transform:translateX(-50%);">559,927</span>
<span class="t" style="top:793.73px;font-size:10.0px;color:#000;left:1713.90px;transform-origin:50% 50%;transform:translateX(-50%);">487,132</span>
<span class="t" style="top:793.73px;font-size:10.0px;color:#000;left:1769.00px;transform-origin:50% 50%;transform:translateX(-50%);">515,905</span>
<span class="t" style="top:793.73px;font-size:10.0px;color:#000;left:1824.20px;transform-origin:50% 50%;transform:translateX(-50%);">544,677</span>
<span class="t" style="transform:scaleX(0.9744);top:767.13px;font-size:10.0px;color:#000;left:1508.70px;transform-origin:0 50%;">(+) Cash</span>
<span class="t" style="top:767.13px;font-size:10.0px;color:#000;right:275.20px;transform-origin:100% 50%;">996</span>
<span class="t" style="transform:scaleX(1.0390);top:780.43px;font-size:10.0px;color:#000;left:1508.70px;transform-origin:0 50%;">(-) Financial Debt</span>
<span class="t" style="top:780.43px;font-size:10.0px;color:#000;right:275.20px;transform-origin:100% 50%;">-9,160</span>
<span class="t" style="transform:scaleX(1.0116);top:793.73px;font-size:10.0px;color:#000;font-weight:bold;left:1508.70px;transform-origin:0 50%;">Total Adjustments</span>
<span class="t" style="top:793.73px;font-size:10.0px;color:#000;font-weight:bold;right:275.20px;transform-origin:100% 50%;">-8,164</span>
<div class="b" style="left:1506.80px;top:790.00px;width:165.90px;height:1.30px;background:#5c5c5c;"></div>
<div class="b" style="left:1009.46px;top:817.50px;width:55.14px;height:13.30px;background:#2581c4;"></div>
<span class="t" style="transform:translateX(-50%) scaleX(0.8871);top:820.33px;font-size:10.0px;color:#fff;font-weight:bold;left:1037.03px;transform-origin:50% 50%;">WACC</span>
<div class="b" style="left:1078.40px;top:817.50px;width:55.10px;height:13.30px;background:#2581c4;"></div>
<div class="b" style="left:1147.40px;top:817.50px;width:165.90px;height:13.30px;background:#2581c4;"></div>
<span class="t" style="transform:translateX(-50%) scaleX(1.0040);top:820.33px;font-size:10.0px;color:#fff;font-weight:bold;left:1230.35px;transform-origin:50% 50%;">Implied Perp. Growth Rate</span>
<div class="b" style="left:1327.10px;top:817.50px;width:165.90px;height:13.30px;background:#2581c4;"></div>
<span class="t" style="transform:translateX(-50%) scaleX(0.9744);top:820.33px;font-size:10.0px;color:#fff;font-weight:bold;left:1410.05px;transform-origin:50% 50%;">Implied EV / 23E EBITDA</span>
<div class="b" style="left:1506.80px;top:817.50px;width:165.90px;height:13.30px;background:#2581c4;"></div>
<span class="t" style="transform:translateX(-50%) scaleX(0.9744);top:820.33px;font-size:10.0px;color:#fff;font-weight:bold;left:1589.75px;transform-origin:50% 50%;">Implied EV / 24E EBITDA</span>
<div class="b" style="left:1686.40px;top:817.50px;width:165.40px;height:13.30px;background:#2581c4;"></div>
<span class="t" style="transform:translateX(-50%) scaleX(0.9744);top:820.33px;font-size:10.0px;color:#fff;font-weight:bold;left:1769.10px;transform-origin:50% 50%;">Implied EV / 25E EBITDA</span>
<span class="t" style="top:860.23px;font-size:10.0px;color:#000;font-weight:bold;left:1037.03px;transform-origin:50% 50%;transform:translateX(-50%);">7.67%</span>
<span class="t" style="top:873.53px;font-size:10.0px;color:#000;font-weight:bold;left:1037.03px;transform-origin:50% 50%;transform:translateX(-50%);">8.00%</span>
<span class="t" style="top:886.83px;font-size:10.0px;color:#000;font-weight:bold;left:1037.03px;transform-origin:50% 50%;transform:translateX(-50%);">8.33%</span>
<span class="t" style="top:900.13px;font-size:10.0px;color:#000;font-weight:bold;left:1037.03px;transform-origin:50% 50%;transform:translateX(-50%);">8.66%</span>
<span class="t" style="top:913.43px;font-size:10.0px;color:#000;font-weight:bold;left:1037.03px;transform-origin:50% 50%;transform:translateX(-50%);">8.99%</span>
<div class="b" style="left:1147.40px;top:830.80px;width:165.90px;height:13.30px;background:#f2f2f2;"></div>
<span class="t" style="transform:translateX(-50%) scaleX(1.0000);top:833.63px;font-size:10.0px;color:#000;font-weight:bold;text-decoration:underline;left:1230.35px;transform-origin:50% 50%;">Exit Multiple</span>
<span class="t" style="top:846.93px;font-size:10.0px;color:#000;font-weight:bold;left:1175.05px;transform-origin:50% 50%;transform:translateX(-50%);">14.0x</span>
<span class="t" style="top:846.93px;font-size:10.0px;color:#000;font-weight:bold;left:1230.35px;transform-origin:50% 50%;transform:translateX(-50%);">15.0x</span>
<span class="t" style="top:846.93px;font-size:10.0px;color:#000;font-weight:bold;left:1285.65px;transform-origin:50% 50%;transform:translateX(-50%);">16.0x</span>
<div class="b" style="left:1147.40px;top:856.50px;width:165.90px;height:1.30px;background:#5c5c5c;"></div>
<span class="t" style="top:860.23px;font-size:10.0px;color:#000;left:1175.05px;transform-origin:50% 50%;transform:translateX(-50%);">3.3%</span>
<span class="t" style="top:860.23px;font-size:10.0px;color:#000;left:1230.35px;transform-origin:50% 50%;transform:translateX(-50%);">3.6%</span>
<span class="t" style="top:860.23px;font-size:10.0px;color:#000;left:1285.65px;transform-origin:50% 50%;transform:translateX(-50%);">3.9%</span>
<span class="t" style="top:873.53px;font-size:10.0px;color:#000;left:1175.05px;transform-origin:50% 50%;transform:translateX(-50%);">3.6%</span>
<span class="t" style="top:873.53px;font-size:10.0px;color:#000;left:1230.35px;transform-origin:50% 50%;transform:translateX(-50%);">3.9%</span>
<span class="t" style="top:873.53px;font-size:10.0px;color:#000;left:1285.65px;transform-origin:50% 50%;transform:translateX(-50%);">4.2%</span>
<span class="t" style="top:886.83px;font-size:10.0px;color:#000;left:1175.05px;transform-origin:50% 50%;transform:translateX(-50%);">4.0%</span>
<span class="t" style="top:886.83px;font-size:10.0px;color:#000;left:1230.35px;transform-origin:50% 50%;transform:translateX(-50%);">4.3%</span>
<span class="t" style="top:886.83px;font-size:10.0px;color:#000;left:1285.65px;transform-origin:50% 50%;transform:translateX(-50%);">4.5%</span>
<span class="t" style="top:900.13px;font-size:10.0px;color:#000;left:1175.05px;transform-origin:50% 50%;transform:translateX(-50%);">4.3%</span>
<span class="t" style="top:900.13px;font-size:10.0px;color:#000;left:1230.35px;transform-origin:50% 50%;transform:translateX(-50%);">4.6%</span>
<span class="t" style="top:900.13px;font-size:10.0px;color:#000;left:1285.65px;transform-origin:50% 50%;transform:translateX(-50%);">4.9%</span>
<span class="t" style="top:913.43px;font-size:10.0px;color:#000;left:1175.05px;transform-origin:50% 50%;transform:translateX(-50%);">4.6%</span>
<span class="t" style="top:913.43px;font-size:10.0px;color:#000;left:1230.35px;transform-origin:50% 50%;transform:translateX(-50%);">4.9%</span>
<span class="t" style="top:913.43px;font-size:10.0px;color:#000;left:1285.65px;transform-origin:50% 50%;transform:translateX(-50%);">5.2%</span>
<div class="b" style="left:1327.10px;top:830.80px;width:165.90px;height:13.30px;background:#f2f2f2;"></div>
<span class="t" style="transform:translateX(-50%) scaleX(1.0000);top:833.63px;font-size:10.0px;color:#000;font-weight:bold;text-decoration:underline;left:1410.05px;transform-origin:50% 50%;">Exit Multiple</span>
<span class="t" style="top:846.93px;font-size:10.0px;color:#000;font-weight:bold;left:1354.75px;transform-origin:50% 50%;transform:translateX(-50%);">14.0x</span>
<span class="t" style="top:846.93px;font-size:10.0px;color:#000;font-weight:bold;left:1410.05px;transform-origin:50% 50%;transform:translateX(-50%);">15.0x</span>
<span class="t" style="top:846.93px;font-size:10.0px;color:#000;font-weight:bold;left:1465.35px;transform-origin:50% 50%;transform:translateX(-50%);">16.0x</span>
<div class="b" style="left:1327.10px;top:856.50px;width:165.90px;height:1.30px;background:#5c5c5c;"></div>
<span class="t" style="top:860.23px;font-size:10.0px;color:#000;left:1354.75px;transform-origin:50% 50%;transform:translateX(-50%);">64.0x</span>
<span class="t" style="top:860.23px;font-size:10.0px;color:#000;left:1410.05px;transform-origin:50% 50%;transform:translateX(-50%);">67.8x</span>
<span class="t" style="top:860.23px;font-size:10.0px;color:#000;left:1465.35px;transform-origin:50% 50%;transform:translateX(-50%);">71.5x</span>
<span class="t" style="top:873.53px;font-size:10.0px;color:#000;left:1354.75px;transform-origin:50% 50%;transform:translateX(-50%);">62.3x</span>
<span class="t" style="top:873.53px;font-size:10.0px;color:#000;left:1410.05px;transform-origin:50% 50%;transform:translateX(-50%);">65.9x</span>
<span class="t" style="top:873.53px;font-size:10.0px;color:#000;left:1465.35px;transform-origin:50% 50%;transform:translateX(-50%);">69.6x</span>
<span class="t" style="top:886.83px;font-size:10.0px;color:#000;left:1354.75px;transform-origin:50% 50%;transform:translateX(-50%);">60.6x</span>
<span class="t" style="top:886.83px;font-size:10.0px;color:#000;left:1410.05px;transform-origin:50% 50%;transform:translateX(-50%);">64.1x</span>
<span class="t" style="top:886.83px;font-size:10.0px;color:#000;left:1465.35px;transform-origin:50% 50%;transform:translateX(-50%);">67.7x</span>
<span class="t" style="top:900.13px;font-size:10.0px;color:#000;left:1354.75px;transform-origin:50% 50%;transform:translateX(-50%);">59.0x</span>
<span class="t" style="top:900.13px;font-size:10.0px;color:#000;left:1410.05px;transform-origin:50% 50%;transform:translateX(-50%);">62.4x</span>
<span class="t" style="top:900.13px;font-size:10.0px;color:#000;left:1465.35px;transform-origin:50% 50%;transform:translateX(-50%);">65.9x</span>
<span class="t" style="top:913.43px;font-size:10.0px;color:#000;left:1354.75px;transform-origin:50% 50%;transform:translateX(-50%);">57.4x</span>
<span class="t" style="top:913.43px;font-size:10.0px;color:#000;left:1410.05px;transform-origin:50% 50%;transform:translateX(-50%);">60.8x</span>
<span class="t" style="top:913.43px;font-size:10.0px;color:#000;left:1465.35px;transform-origin:50% 50%;transform:translateX(-50%);">64.1x</span>
<div class="b" style="left:1506.80px;top:830.80px;width:165.90px;height:13.30px;background:#f2f2f2;"></div>
<span class="t" style="transform:translateX(-50%) scaleX(1.0000);top:833.63px;font-size:10.0px;color:#000;font-weight:bold;text-decoration:underline;left:1589.75px;transform-origin:50% 50%;">Exit Multiple</span>
<span class="t" style="top:846.93px;font-size:10.0px;color:#000;font-weight:bold;left:1534.45px;transform-origin:50% 50%;transform:translateX(-50%);">14.0x</span>
<span class="t" style="top:846.93px;font-size:10.0px;color:#000;font-weight:bold;left:1589.75px;transform-origin:50% 50%;transform:translateX(-50%);">15.0x</span>
<span class="t" style="top:846.93px;font-size:10.0px;color:#000;font-weight:bold;left:1645.05px;transform-origin:50% 50%;transform:translateX(-50%);">16.0x</span>
<div class="b" style="left:1506.80px;top:856.50px;width:165.90px;height:1.30px;background:#5c5c5c;"></div>
<span class="t" style="top:860.23px;font-size:10.0px;color:#000;left:1534.45px;transform-origin:50% 50%;transform:translateX(-50%);">49.0x</span>
<span class="t" style="top:860.23px;font-size:10.0px;color:#000;left:1589.75px;transform-origin:50% 50%;transform:translateX(-50%);">51.9x</span>
<span class="t" style="top:860.23px;font-size:10.0px;color:#000;left:1645.05px;transform-origin:50% 50%;transform:translateX(-50%);">54.8x</span>
<span class="t" style="top:873.53px;font-size:10.0px;color:#000;left:1534.45px;transform-origin:50% 50%;transform:translateX(-50%);">47.7x</span>
<span class="t" style="top:873.53px;font-size:10.0px;color:#000;left:1589.75px;transform-origin:50% 50%;transform:translateX(-50%);">50.5x</span>
<span class="t" style="top:873.53px;font-size:10.0px;color:#000;left:1645.05px;transform-origin:50% 50%;transform:translateX(-50%);">53.3x</span>
<span class="t" style="top:886.83px;font-size:10.0px;color:#000;left:1534.45px;transform-origin:50% 50%;transform:translateX(-50%);">46.4x</span>
<span class="t" style="top:886.83px;font-size:10.0px;color:#000;left:1589.75px;transform-origin:50% 50%;transform:translateX(-50%);">49.2x</span>
<span class="t" style="top:886.83px;font-size:10.0px;color:#000;left:1645.05px;transform-origin:50% 50%;transform:translateX(-50%);">51.9x</span>
<span class="t" style="top:900.13px;font-size:10.0px;color:#000;left:1534.45px;transform-origin:50% 50%;transform:translateX(-50%);">45.2x</span>
<span class="t" style="top:900.13px;font-size:10.0px;color:#000;left:1589.75px;transform-origin:50% 50%;transform:translateX(-50%);">47.8x</span>
<span class="t" style="top:900.13px;font-size:10.0px;color:#000;left:1645.05px;transform-origin:50% 50%;transform:translateX(-50%);">50.5x</span>
<span class="t" style="top:913.43px;font-size:10.0px;color:#000;left:1534.45px;transform-origin:50% 50%;transform:translateX(-50%);">44.0x</span>
<span class="t" style="top:913.43px;font-size:10.0px;color:#000;left:1589.75px;transform-origin:50% 50%;transform:translateX(-50%);">46.6x</span>
<span class="t" style="top:913.43px;font-size:10.0px;color:#000;left:1645.05px;transform-origin:50% 50%;transform:translateX(-50%);">49.1x</span>
<div class="b" style="left:1686.40px;top:830.80px;width:165.40px;height:13.30px;background:#f2f2f2;"></div>
<span class="t" style="transform:translateX(-50%) scaleX(1.0000);top:833.63px;font-size:10.0px;color:#000;font-weight:bold;text-decoration:underline;left:1769.10px;transform-origin:50% 50%;">Exit Multiple</span>
<span class="t" style="top:846.93px;font-size:10.0px;color:#000;font-weight:bold;left:1713.90px;transform-origin:50% 50%;transform:translateX(-50%);">14.0x</span>
<span class="t" style="top:846.93px;font-size:10.0px;color:#000;font-weight:bold;left:1769.00px;transform-origin:50% 50%;transform:translateX(-50%);">15.0x</span>
<span class="t" style="top:846.93px;font-size:10.0px;color:#000;font-weight:bold;left:1824.20px;transform-origin:50% 50%;transform:translateX(-50%);">16.0x</span>
<div class="b" style="left:1686.40px;top:856.50px;width:165.40px;height:1.30px;background:#5c5c5c;"></div>
<span class="t" style="top:860.23px;font-size:10.0px;color:#000;left:1713.90px;transform-origin:50% 50%;transform:translateX(-50%);">38.2x</span>
<span class="t" style="top:860.23px;font-size:10.0px;color:#000;left:1769.00px;transform-origin:50% 50%;transform:translateX(-50%);">40.4x</span>
<span class="t" style="top:860.23px;font-size:10.0px;color:#000;left:1824.20px;transform-origin:50% 50%;transform:translateX(-50%);">42.6x</span>
<span class="t" style="top:873.53px;font-size:10.0px;color:#000;left:1713.90px;transform-origin:50% 50%;transform:translateX(-50%);">37.1x</span>
<span class="t" style="top:873.53px;font-size:10.0px;color:#000;left:1769.00px;transform-origin:50% 50%;transform:translateX(-50%);">39.3x</span>
<span class="t" style="top:873.53px;font-size:10.0px;color:#000;left:1824.20px;transform-origin:50% 50%;transform:translateX(-50%);">41.5x</span>
<span class="t" style="top:886.83px;font-size:10.0px;color:#000;left:1713.90px;transform-origin:50% 50%;transform:translateX(-50%);">36.1x</span>
<span class="t" style="top:886.83px;font-size:10.0px;color:#000;left:1769.00px;transform-origin:50% 50%;transform:translateX(-50%);">38.2x</span>
<span class="t" style="top:886.83px;font-size:10.0px;color:#000;left:1824.20px;transform-origin:50% 50%;transform:translateX(-50%);">40.3x</span>
<span class="t" style="top:900.13px;font-size:10.0px;color:#000;left:1713.90px;transform-origin:50% 50%;transform:translateX(-50%);">35.2x</span>
<span class="t" style="top:900.13px;font-size:10.0px;color:#000;left:1769.00px;transform-origin:50% 50%;transform:translateX(-50%);">37.2x</span>
<span class="t" style="top:900.13px;font-size:10.0px;color:#000;left:1824.20px;transform-origin:50% 50%;transform:translateX(-50%);">39.3x</span>
<span class="t" style="top:913.43px;font-size:10.0px;color:#000;left:1713.90px;transform-origin:50% 50%;transform:translateX(-50%);">34.2x</span>
<span class="t" style="top:913.43px;font-size:10.0px;color:#000;left:1769.00px;transform-origin:50% 50%;transform:translateX(-50%);">36.2x</span>
<span class="t" style="top:913.43px;font-size:10.0px;color:#000;left:1824.20px;transform-origin:50% 50%;transform:translateX(-50%);">38.2x</span>
<span class="t" style="transform:scaleX(0.9318);top:913.50px;font-size:9.6px;color:#000;left:52.30px;transform-origin:0 50%;">xEnd</span>
<span class="t" style="transform:scaleX(0.9318);top:940.10px;font-size:9.6px;color:#000;left:52.30px;transform-origin:0 50%;">xEnd</span>
<div class="b" style="left:1944.30px;top:241.00px;width:1.20px;height:778.00px;background:#c8c8c8;"></div>
<div class="b" style="left:0.00px;top:0.00px;width:1946.00px;height:34.70px;background:#217346;"></div>
<svg class="b" style="left:0;top:0;overflow:hidden" width="1946" height="34.7" viewBox="0 0 1946 34.7"><rect x="1497" y="0" width="5" height="14" fill="#1e6a40"/><rect x="1505" y="0" width="4" height="24" fill="#1e6a40"/><rect x="1512" y="0" width="3" height="17" fill="#1e6a40"/><rect x="1518" y="0" width="6" height="30" fill="#1e6a40"/><rect x="1527" y="0" width="3" height="22" fill="#1e6a40"/><rect x="1533" y="0" width="4" height="34.7" fill="#1e6a40"/><path d="M1545 0 H1590 L1575 34.7 H1563 Z" fill="#1f6d42"/><path d="M1592 0 H1648 V34.7 H1600 Z" fill="#1e6a40"/><rect x="1612" y="0" width="3" height="34.7" fill="#217346" opacity="0.6"/><rect x="1622" y="0" width="3" height="34.7" fill="#217346" opacity="0.6"/><rect x="1631" y="0" width="3" height="34.7" fill="#217346" opacity="0.6"/><rect x="1640" y="0" width="3" height="34.7" fill="#217346" opacity="0.6"/><circle cx="1672" cy="3" r="13" fill="#1e6a40"/><circle cx="1722" cy="34" r="17" fill="none" stroke="#1f6d42" stroke-width="5"/><circle cx="1800" cy="-8" r="58" fill="none" stroke="#1f6d42" stroke-width="7"/><path d="M1885 34.7 L1919 0" stroke="#1e6a40" stroke-width="6"/><path d="M1898 34.7 L1932 0" stroke="#1e6a40" stroke-width="6"/><path d="M1911 34.7 L1945 0" stroke="#1e6a40" stroke-width="6"/><path d="M1924 34.7 L1958 0" stroke="#1e6a40" stroke-width="6"/><path d="M1937 34.7 L1971 0" stroke="#1e6a40" stroke-width="6"/></svg>
<span class="t" style="transform:scaleX(0.8741);top:10.97px;font-size:13.4px;color:#fff;left:20.00px;transform-origin:0 50%;">AutoSave</span>
<div class="b" style="left:77.60px;top:8.80px;width:38.60px;height:17.00px;border:1.3px solid #fff;border-radius:9px;box-sizing:border-box;"></div>
<div class="b" style="left:82.40px;top:13.80px;width:7.00px;height:7.00px;background:#fff;border-radius:50%;"></div>
<span class="t" style="transform:scaleX(0.8800);top:12.56px;font-size:11.2px;color:#fff;left:97.00px;transform-origin:0 50%;">Off</span>
<svg class="b" style="left:0;top:0" width="1946" height="35" viewBox="0 0 1946 35"><path d="M130 12.2 Q130 11.2 131 11.2 H144.8 Q145.8 11.2 145.8 12.2 V25.6 Q145.8 26.6 144.8 26.6 H132.6 L130 24 Z" fill="none" stroke="#fff" stroke-width="1.2" /><path d="M133.8 11.4 V16.4 H142 V11.4" fill="none" stroke="#fff" stroke-width="1.2" /><path d="M133.8 26.4 V21.2 H142 V26.4" fill="none" stroke="#fff" stroke-width="1.2" /><path d="M161 11.2 V16.6 H166.4" fill="none" stroke="#fff" stroke-width="1.3" stroke-linejoin="round" stroke-linecap="round"/><path d="M161.2 16.4 C163 12 169 9.8 172.8 13.2 C175.8 16 174.6 18.4 165.8 26.6" fill="none" stroke="#fff" stroke-width="1.3" stroke-linecap="round"/><path d="M182.2 16.6 L185 19.4 L187.8 16.6" fill="none" stroke="#fff" stroke-width="1.2" /><g opacity="0.38"><path d="M214 11.2 V16.6 H208.6" fill="none" stroke="#fff" stroke-width="1.3" stroke-linejoin="round" stroke-linecap="round"/><path d="M213.8 16.4 C212 12 206 9.8 202.2 13.2 C199.2 16 200.4 18.4 209.2 26.6" fill="none" stroke="#fff" stroke-width="1.3" stroke-linecap="round"/><path d="M222.2 16.6 L225 19.4 L227.8 16.6" fill="none" stroke="#fff" stroke-width="1.2" /></g><path d="M241.4 11.4 V26.6 M239 14 L241.4 11.2 L243.8 14 M239 24 L241.4 26.8 L243.8 24" fill="none" stroke="#fff" stroke-width="1.2" stroke-linejoin="round"/><path d="M245.6 12 H254.2 V25 H245.6" fill="none" stroke="#fff" stroke-width="1.2" /><path d="M270 21.6 V12.2 H284 V21.6" fill="none" stroke="#fff" stroke-width="1.2" /><path d="M269 24.4 H285 M271.4 22.2 L268.8 24.4 L271.4 26.6 M282.6 22.2 L285.2 24.4 L282.6 26.6" fill="none" stroke="#fff" stroke-width="1.1" stroke-linejoin="round"/><rect x="303.2" y="12.4" width="7.4" height="5" fill="#fff"/><rect x="294.4" y="19.4" width="6" height="6.4" fill="#fff"/><path d="M301.4 18 H310.4 V25.4 H301.4 Z M305.9 18 V25.4 M301.4 21.7 H310.4" fill="none" stroke="#fff" stroke-width="1.1" /><path d="M297.4 11 V16.6 M294.8 12.4 L300 15.2 M300 12.4 L294.8 15.2" fill="none" stroke="#fff" stroke-width="1.0" /><path d="M318.2 16.6 L321 19.4 L323.8 16.6" fill="none" stroke="#fff" stroke-width="1.2" /><path d="M343.4 12 H352.6 V25.2 H343.4 M343.4 16.4 H352.6 M343.4 20.8 H352.6 M348 12 V25.2" fill="none" stroke="#fff" stroke-width="1.1" /><path d="M336.6 15.6 H343 V22 H336.6 Z M339.8 17.2 V20.4 M338.2 18.8 H341.4" fill="none" stroke="#fff" stroke-width="1.0" /><path d="M370.8 15.6 H376.8" fill="none" stroke="#fff" stroke-width="1.2" /><path d="M371 18.6 L373.8 21.2 L376.6 18.6" fill="none" stroke="#fff" stroke-width="1.2" /></svg>
<span class="t" style="transform:scaleX(0.8867);top:11.57px;font-size:13.6px;color:#fff;left:461.00px;transform-origin:0 50%;">SaaS Business - Financial Model and Valuation</span>
<svg class="b" style="left:718.80px;top:12.60px;" width="10" height="10" viewBox="0 0 10 10"><path d="M0.36 3.70 L5 7.61 L9.64 3.70" fill="none" stroke="#fff" stroke-width="1.3" stroke-linecap="round" stroke-linejoin="round"/></svg>
<div class="b" style="left:802.50px;top:5.50px;width:376.20px;height:24.00px;background:#a0cfb6;"></div>
<svg class="b" style="left:821.00px;top:9.00px;" width="18" height="18" viewBox="0 0 18 18"><circle cx="11" cy="6.6" r="4.6" fill="none" stroke="#1e5c3a" stroke-width="1.2"/><path d="M7.6 10 L2.4 15.6" stroke="#1e5c3a" stroke-width="1.3" stroke-linecap="round"/></svg>
<span class="t" style="transform:scaleX(0.8524);top:11.42px;font-size:13.3px;color:#1e5c3a;left:853.80px;transform-origin:0 50%;">Search</span>
<span class="t" style="transform:scaleX(0.8500);top:11.62px;font-size:13.5px;color:#fff;left:1678.20px;transform-origin:0 50%;">Rafael Carranza</span>
<div class="b" style="left:1771.00px;top:5.60px;width:24.00px;height:24.00px;background:#0c5c50;border-radius:50%;"></div>
<span class="t" style="transform:translateX(-50%) scaleX(0.8333);top:12.89px;font-size:10.6px;color:#d9ece6;left:1783.00px;transform-origin:50% 50%;">RC</span>
<svg class="b" style="left:0;top:0" width="1946" height="35" viewBox="0 0 1946 35"><rect x="1820.4" y="12.2" width="12.6" height="9.6" rx="0" fill="none" stroke="#fff" stroke-width="1.1" /><path d="M1820.4 14.6 H1833" fill="none" stroke="#fff" stroke-width="1.0" /><path d="M1826.7 20.4 V16 M1824.6 17.8 L1826.7 15.8 L1828.8 17.8" fill="none" stroke="#fff" stroke-width="1.0" /><path d="M1861.4 17.2 H1871.4" fill="none" stroke="#fff" stroke-width="1.1" /><path d="M1900.4 14.4 H1908.6 V22.4 H1900.4 Z" fill="none" stroke="#fff" stroke-width="1.1" stroke-linejoin="round"/><path d="M1902.6 14.2 V12.4 Q1902.6 12 1903 12 H1910.4 Q1911 12 1911 12.6 V19.8 Q1911 20.4 1910.4 20.4 H1908.8" fill="none" stroke="#fff" stroke-width="1.1" /><path d="M1941.4 12.4 L1951 22 M1941.4 22 L1951 12.4" fill="none" stroke="#fff" stroke-width="1.1" /></svg>
<div class="b" style="left:0.00px;top:34.70px;width:1946.00px;height:129.00px;background:#f3f2f1;"></div>
<span class="t" style="transform:scaleX(0.8750);top:43.87px;font-size:14.6px;color:#444;left:17.00px;transform-origin:0 50%;">File</span>
<span class="t" style="transform:scaleX(0.9500);top:43.97px;font-size:14.4px;color:#2b2b2b;font-weight:bold;left:69.50px;transform-origin:0 50%;">Home</span>
<span class="t" style="transform:scaleX(0.8919);top:43.87px;font-size:14.6px;color:#444;left:135.00px;transform-origin:0 50%;">Insert</span>
<span class="t" style="transform:scaleX(0.8994);top:43.87px;font-size:14.6px;color:#444;left:198.00px;transform-origin:0 50%;">Page Layout</span>
<span class="t" style="transform:scaleX(0.9016);top:43.87px;font-size:14.6px;color:#444;left:300.75px;transform-origin:0 50%;">Formulas</span>
<span class="t" style="transform:scaleX(0.8871);top:43.87px;font-size:14.6px;color:#444;left:384.50px;transform-origin:0 50%;">Data</span>
<span class="t" style="transform:scaleX(0.8594);top:43.87px;font-size:14.6px;color:#444;left:440.75px;transform-origin:0 50%;">Review</span>
<span class="t" style="transform:scaleX(0.9435);top:43.87px;font-size:14.6px;color:#444;left:510.00px;transform-origin:0 50%;">View</span>
<span class="t" style="transform:scaleX(0.9637);top:43.87px;font-size:14.6px;color:#444;left:567.00px;transform-origin:0 50%;">Automate</span>
<span class="t" style="transform:scaleX(0.9417);top:43.87px;font-size:14.6px;color:#444;left:655.50px;transform-origin:0 50%;">Help</span>
<span class="t" style="transform:scaleX(0.9529);top:43.87px;font-size:14.6px;color:#444;left:712.00px;transform-origin:0 50%;">Chronograph</span>
<span class="t" style="transform:scaleX(0.9184);top:43.87px;font-size:14.6px;color:#444;left:821.25px;transform-origin:0 50%;">S&amp;P Capital IQ</span>
<span class="t" style="transform:scaleX(0.8981);top:43.87px;font-size:14.6px;color:#444;left:938.20px;transform-origin:0 50%;">S&amp;P Cap IQ Pro</span>
<div class="b" style="left:69.50px;top:60.20px;width:38.00px;height:2.40px;background:#217346;border-radius:1px;"></div>
<div class="b" style="left:1761.50px;top:38.00px;width:100.50px;height:24.00px;background:#fff;border:1px solid #8a8886;border-radius:4px;box-sizing:border-box;"></div>
<svg class="b" style="left:1769.00px;top:43.00px;" width="14" height="14" viewBox="0 0 14 14"><path d="M1.2 1.6 H11.4 V9 H5 L2.6 11.6 V9 H1.2 Z" fill="none" stroke="#217346" stroke-width="1.1" stroke-linejoin="round"/></svg>
<span class="t" style="transform:scaleX(0.9247);top:43.57px;font-size:14.2px;color:#185c37;font-weight:bold;left:1786.00px;transform-origin:0 50%;">Comments</span>
<div class="b" style="left:1871.30px;top:38.00px;width:90.00px;height:24.00px;background:#fff;border:1px solid #8a8886;border-radius:4px;box-sizing:border-box;"></div>
<svg class="b" style="left:1878.00px;top:42.50px;" width="16" height="15" viewBox="0 0 16 15"><path d="M6 4.2 H2.2 V13 H11 V10" fill="none" stroke="#217346" stroke-width="1.1" stroke-linejoin="round"/><path d="M5 9.6 C5.4 6.4 7.6 4.6 10.6 4.6 M8.6 1.8 L11.4 4.6 L8.6 7.4" fill="none" stroke="#217346" stroke-width="1.1" stroke-linejoin="round" stroke-linecap="round"/></svg>
<span class="t" style="transform:scaleX(0.9026);top:43.57px;font-size:14.2px;color:#185c37;font-weight:bold;left:1896.00px;transform-origin:0 50%;">Share</span>
<svg class="b" style="left:1939.50px;top:46.00px;" width="10" height="10" viewBox="0 0 10 10"><path d="M2.12 4.19 L5 6.62 L7.88 4.19" fill="none" stroke="#185c37" stroke-width="1.2" stroke-linecap="round" stroke-linejoin="round"/></svg>
<div class="b" style="left:0.00px;top:163.50px;width:1946.00px;height:7.00px;background:linear-gradient(#cdcdcd,#dedede 40%,#e6e6e6);"></div>
<div class="b" style="left:166.80px;top:70.00px;width:1.40px;height:89.50px;background:#b9b7b5;"></div>
<div class="b" style="left:394.30px;top:70.00px;width:1.40px;height:89.50px;background:#b9b7b5;"></div>
<div class="b" style="left:676.80px;top:70.00px;width:1.40px;height:89.50px;background:#b9b7b5;"></div>
<div class="b" style="left:830.00px;top:70.00px;width:1.40px;height:89.50px;background:#b9b7b5;"></div>
<div class="b" style="left:1328.30px;top:70.00px;width:1.40px;height:89.50px;background:#b9b7b5;"></div>
<div class="b" style="left:1473.70px;top:70.00px;width:1.40px;height:89.50px;background:#b9b7b5;"></div>
<div class="b" style="left:1678.90px;top:70.00px;width:1.40px;height:89.50px;background:#b9b7b5;"></div>
<div class="b" style="left:1755.20px;top:70.00px;width:1.40px;height:89.50px;background:#b9b7b5;"></div>
<div class="b" style="left:1818.90px;top:70.00px;width:1.40px;height:89.50px;background:#b9b7b5;"></div>
<div class="b" style="left:1882.30px;top:70.00px;width:1.40px;height:89.50px;background:#b9b7b5;"></div>
<span class="t" style="transform:scaleX(0.9100);top:149.16px;font-size:11.6px;color:#555;left:52.80px;transform-origin:0 50%;">Clipboard</span>
<span class="t" style="transform:scaleX(0.8696);top:149.16px;font-size:11.6px;color:#555;left:263.70px;transform-origin:0 50%;">Font</span>
<span class="t" style="transform:scaleX(0.9423);top:149.16px;font-size:11.6px;color:#555;left:504.00px;transform-origin:0 50%;">Alignment</span>
<span class="t" style="transform:scaleX(0.9341);top:149.16px;font-size:11.6px;color:#555;left:727.00px;transform-origin:0 50%;">Number</span>
<span class="t" style="transform:scaleX(0.8125);top:149.16px;font-size:11.6px;color:#555;left:1067.00px;transform-origin:0 50%;">Styles</span>
<span class="t" style="transform:scaleX(0.8423);top:149.16px;font-size:11.6px;color:#555;left:1391.40px;transform-origin:0 50%;">Cells</span>
<span class="t" style="transform:scaleX(0.9143);top:149.16px;font-size:11.6px;color:#555;left:1562.00px;transform-origin:0 50%;">Editing</span>
<span class="t" style="transform:scaleX(0.9077);top:149.16px;font-size:11.6px;color:#555;left:1694.80px;transform-origin:0 50%;">Sensitivity</span>
<span class="t" style="transform:scaleX(0.9231);top:149.16px;font-size:11.6px;color:#555;left:1769.70px;transform-origin:0 50%;">Add-ins</span>
<svg class="b" style="left:155.30px;top:151.30px;" width="9" height="9" viewBox="0 0 9 9"><path d="M0.6 6.6 V0.6 H6.6 M2.6 2.6 L8 8 M8 3.8 V8 H3.8" fill="none" stroke="#4a4a4a" stroke-width="1.1"/></svg>
<svg class="b" style="left:382.90px;top:151.30px;" width="9" height="9" viewBox="0 0 9 9"><path d="M0.6 6.6 V0.6 H6.6 M2.6 2.6 L8 8 M8 3.8 V8 H3.8" fill="none" stroke="#4a4a4a" stroke-width="1.1"/></svg>
<svg class="b" style="left:664.90px;top:151.30px;" width="9" height="9" viewBox="0 0 9 9"><path d="M0.6 6.6 V0.6 H6.6 M2.6 2.6 L8 8 M8 3.8 V8 H3.8" fill="none" stroke="#4a4a4a" stroke-width="1.1"/></svg>
<svg class="b" style="left:818.10px;top:151.30px;" width="9" height="9" viewBox="0 0 9 9"><path d="M0.6 6.6 V0.6 H6.6 M2.6 2.6 L8 8 M8 3.8 V8 H3.8" fill="none" stroke="#4a4a4a" stroke-width="1.1"/></svg>
<svg class="b" style="left:0;top:0" width="1946" height="230" viewBox="0 0 1946 230"><path d="M18.9 78.6 H39 V101.4 H18.9 Z" fill="#f6f4f3"/><path d="M30.6 101.4 H20.2 Q18.9 101.4 18.9 100.1 V79.9 Q18.9 78.6 20.2 78.6 H37.8 Q39 78.6 39 79.9 V85.4" fill="none" stroke="#e8912d" stroke-width="1.5" /><path d="M30.6 99.9 H20.5 V80.2 H37.5 V85.4" fill="none" stroke="#fbd7a4" stroke-width="1.3" /><path d="M22.9 81.4 V77.6 Q22.9 77 23.5 77 H26 Q26 73.6 29.3 73.6 Q32.6 73.6 32.6 77 H35.1 Q35.7 77 35.7 77.6 V81.4 Z" fill="#f3f2f1" stroke="#6a6a6a" stroke-width="1.1" /><rect x="32.4" y="86.5" width="13.4" height="17.4" rx="0.4" fill="#fff" stroke="#444" stroke-width="1.3" /></svg>
<span class="t" style="transform:translateX(-50%) scaleX(0.8235);top:109.07px;font-size:13.2px;color:#444;left:29.40px;transform-origin:50% 50%;">Paste</span>
<svg class="b" style="left:24.30px;top:125.80px;" width="10" height="10" viewBox="0 0 10 10"><path d="M2.28 4.24 L5 6.53 L7.72 4.24" fill="none" stroke="#444" stroke-width="1.1" stroke-linecap="round" stroke-linejoin="round"/></svg>
<svg class="b" style="left:0;top:0" width="1946" height="230" viewBox="0 0 1946 230"><path d="M59.4 73.4 L65.4 84.6 M65.8 73.4 L59.8 84.6" fill="none" stroke="#444" stroke-width="1.1" stroke-linecap="round"/><circle cx="59.3" cy="87" r="1.9" fill="none" stroke="#2a8dd4" stroke-width="1.3"/><circle cx="65.4" cy="87" r="1.9" fill="none" stroke="#2a8dd4" stroke-width="1.3"/><path d="M59.8 110.8 H55.8 Q54.4 110.8 54.4 109.4 V98.8 Q54.4 97.4 55.8 97.4 H60.6 Q61.6 97.4 61.8 98.6" fill="none" stroke="#444" stroke-width="1.2" /><path d="M60.4 101 Q60.4 99.8 61.6 99.8 H66.8 L70.6 103.6 V111.8 Q70.6 113 69.4 113 H61.6 Q60.4 113 60.4 111.8 Z" fill="#f6f5f4" stroke="#444" stroke-width="1.2" stroke-linejoin="round"/><path d="M66.6 100 V103.8 H70.4" fill="none" stroke="#444" stroke-width="1.0" /><path d="M63 107 H68 M63 108.8 H68 M63 110.6 H68" fill="none" stroke="#8a8a8a" stroke-width="0.9" /><path d="M54.9 129.4 L62.4 125.9 L67.2 131.6 L61.4 136.7 Q57.4 134 54.9 129.4 Z" fill="#fdf3e6" stroke="#e3761c" stroke-width="1.3" stroke-linejoin="round"/><path d="M58.4 132.6 L63.4 134.4 L61.4 136.2 Z" fill="#f7c36b"/><path d="M62.3 125.8 L65.6 123.9 L69.4 129 L67 131.5 Z" fill="#f3f2f1" stroke="#444" stroke-width="1.1" stroke-linejoin="round"/><path d="M65.4 124 L69.3 121.8 L70.9 124 L67.2 126.4" fill="#f3f2f1" stroke="#444" stroke-width="1.1" stroke-linejoin="round"/></svg>
<span class="t" style="transform:scaleX(0.8810);top:76.07px;font-size:13.2px;color:#444;left:74.00px;transform-origin:0 50%;">Cut</span>
<span class="t" style="transform:scaleX(0.8806);top:100.47px;font-size:13.2px;color:#444;left:74.00px;transform-origin:0 50%;">Copy</span>
<svg class="b" style="left:110.40px;top:101.40px;" width="10" height="10" viewBox="0 0 10 10"><path d="M2.28 4.24 L5 6.53 L7.72 4.24" fill="none" stroke="#444" stroke-width="1.1" stroke-linecap="round" stroke-linejoin="round"/></svg>
<span class="t" style="transform:scaleX(0.9115);top:125.37px;font-size:13.2px;color:#444;left:74.00px;transform-origin:0 50%;">Format Painter</span>
<div class="b" style="left:176.00px;top:78.00px;width:111.40px;height:23.00px;background:#fff;border:1px solid #c8c6c4;box-sizing:border-box;"></div>
<span class="t" style="transform:scaleX(0.9270);top:83.87px;font-size:13.2px;color:#222;left:179.20px;transform-origin:0 50%;">Calibri</span>
<svg class="b" style="left:276.00px;top:85.20px;" width="10" height="10" viewBox="0 0 10 10"><path d="M2.44 4.28 L5 6.44 L7.56 4.28" fill="none" stroke="#333" stroke-width="1.2" stroke-linecap="round" stroke-linejoin="round"/></svg>
<div class="b" style="left:289.00px;top:78.00px;width:51.60px;height:23.00px;background:#fff;border:1px solid #c8c6c4;box-sizing:border-box;"></div>
<span class="t" style="transform:scaleX(0.8571);top:84.24px;font-size:13.2px;color:#222;left:292.70px;transform-origin:0 50%;">11</span>
<svg class="b" style="left:328.40px;top:85.20px;" width="10" height="10" viewBox="0 0 10 10"><path d="M2.44 4.28 L5 6.44 L7.56 4.28" fill="none" stroke="#333" stroke-width="1.2" stroke-linecap="round" stroke-linejoin="round"/></svg>
<svg class="b" style="left:0;top:0" width="1946" height="230" viewBox="0 0 1946 230"><text x="346.2" y="95.4" font-family="Liberation Sans" font-size="17.6" fill="#444" textLength="12.4" lengthAdjust="spacingAndGlyphs">A</text><path d="M356.6 85.4 L358.8 83.2 L361 85.4" fill="none" stroke="#2a7dd1" stroke-width="1.2" /><text x="370.8" y="95.4" font-family="Liberation Sans" font-size="14" fill="#444" textLength="9.4" lengthAdjust="spacingAndGlyphs">A</text><path d="M379.4 83.2 L381.6 85.4 L383.8 83.2" fill="none" stroke="#2a7dd1" stroke-width="1.2" /><text x="182.6" y="126.4" font-family="Liberation Sans" font-weight="bold" font-size="15.4" fill="#333" textLength="9.8" lengthAdjust="spacingAndGlyphs">B</text><text x="207.2" y="126.2" style="font-family:'Liberation Serif',serif" font-style="italic" font-size="16.4" fill="#333">I</text><text x="228.8" y="125" font-family="Liberation Sans" font-size="14.6" fill="#333" textLength="9.6" lengthAdjust="spacingAndGlyphs">U</text><path d="M228.8 127.8 H238.6" fill="none" stroke="#333" stroke-width="1.1" /><path d="M249.6 121.8 L252.4 124.6 L255.2 121.8" fill="none" stroke="#444" stroke-width="1.1" /><path d="M264 112 V132.6" fill="none" stroke="#d2d0ce" stroke-width="1" /><path d="M270.4 113.4 H285.4 M270.4 113.4 V127 M285.4 113.4 V127 M277.9 113.4 V127 M270.4 120.6 H285.4" fill="none" stroke="#8a8a8a" stroke-width="1" stroke-dasharray="1.2 1.2"/><path d="M270 128.2 H285.8" fill="none" stroke="#222" stroke-width="1.5" /><path d="M293.8 121.8 L296.6 124.6 L299.4 121.8" fill="none" stroke="#444" stroke-width="1.1" /><path d="M308 112 V132.6" fill="none" stroke="#d2d0ce" stroke-width="1" /><path d="M317.2 118.2 L321.8 113.8 L326.6 119.6 L320.8 124.4 Z" fill="#fff" stroke="#444" stroke-width="1.1" stroke-linejoin="round"/><path d="M319.8 116 Q319.4 112.8 321.8 113.4" fill="none" stroke="#444" stroke-width="1" /><path d="M325.4 116.4 Q328.8 117.6 328.2 122.8" fill="none" stroke="#2a7dd1" stroke-width="1.6" stroke-linecap="round"/><rect x="314.4" y="125.6" width="16.4" height="4.2" fill="#ffff00"/><path d="M337.8 121.8 L340.6 124.6 L343.4 121.8" fill="none" stroke="#444" stroke-width="1.1" /><text x="355.8" y="124" font-family="Liberation Sans" font-size="15.4" fill="#444" textLength="10.8" lengthAdjust="spacingAndGlyphs">A</text><rect x="352.8" y="125.6" width="16.6" height="4.2" fill="#0000e6"/><path d="M376.8 121.8 L379.6 124.6 L382.4 121.8" fill="none" stroke="#444" stroke-width="1.1" /></svg>
<svg class="b" style="left:0;top:0" width="1946" height="230" viewBox="0 0 1946 230"><path d="M408.00 81.20 H423.00 M410.00 85.40 H421.00 M408.00 89.60 H423.00 " fill="none" stroke="#444" stroke-width="1.2" /><path d="M431.60 84.40 H446.60 M433.60 88.60 H444.60 M431.60 92.80 H446.60 " fill="none" stroke="#444" stroke-width="1.2" /><rect x="451.3" y="78" width="22.4" height="23" rx="0" fill="#c8c6c4" stroke="#a3a1a0" stroke-width="1" /><path d="M455.00 88.60 H470.00 M457.00 92.80 H468.00 M455.00 97.00 H470.00 " fill="none" stroke="#222" stroke-width="1.2" /><path d="M477 79 V100" fill="none" stroke="#d2d0ce" stroke-width="1" /><text x="0" y="0" font-family="Liberation Sans" font-size="10.8" fill="#444" transform="translate(484.6 92.2) rotate(-42)">ab</text><path d="M488.2 95.4 L499.2 85.6 M494.4 85.2 H499.4 V90.2" fill="none" stroke="#2a7dd1" stroke-width="1.3" stroke-linejoin="round" stroke-linecap="round"/><path d="M504.2 87.8 L507 90.6 L509.8 87.8" fill="none" stroke="#444" stroke-width="1.1" /><path d="M530.4 76 V135.6" fill="none" stroke="#d2d0ce" stroke-width="1" /><path d="M408.00 114.80 H423.00 M408.00 118.90 H418.00 M408.00 123.00 H423.00 M408.00 127.10 H418.00 " fill="none" stroke="#444" stroke-width="1.2" /><path d="M431.60 114.80 H446.60 M434.10 118.90 H444.10 M431.60 123.00 H446.60 M434.10 127.10 H444.10 " fill="none" stroke="#444" stroke-width="1.2" /><path d="M455.40 114.80 H470.40 M460.40 118.90 H470.40 M455.40 123.00 H470.40 M460.40 127.10 H470.40 " fill="none" stroke="#444" stroke-width="1.2" /><path d="M477 112 V132.6" fill="none" stroke="#d2d0ce" stroke-width="1" /><path d="M483.8 114.8 H498.8 M491.8 118.9 H498.8 M491.8 123 H498.8 M483.8 127.1 H498.8" fill="none" stroke="#444" stroke-width="1.2" /><path d="M483.8 121 H489.6 M486 118.8 L483.8 121 L486 123.2" fill="none" stroke="#2a7dd1" stroke-width="1.2" stroke-linejoin="round"/><path d="M507 114.8 H522 M515 118.9 H522 M515 123 H522 M507 127.1 H522" fill="none" stroke="#444" stroke-width="1.2" /><path d="M507 121 H512.8 M510.6 118.8 L512.8 121 L510.6 123.2" fill="none" stroke="#2a7dd1" stroke-width="1.2" stroke-linejoin="round"/><text x="540.2" y="89" font-family="Liberation Sans" font-size="9.6" fill="#444" textLength="10.4" lengthAdjust="spacingAndGlyphs">ab</text><text x="540.4" y="96.4" font-family="Liberation Sans" font-size="9.6" fill="#444">c</text><path d="M552 85 Q554.6 85 554.6 89 Q554.6 93.4 550 93.4 H547.4 M549.6 91 L547.2 93.4 L549.6 95.8" fill="none" stroke="#2a7dd1" stroke-width="1.2" stroke-linejoin="round"/><rect x="538.6" y="114" width="15.2" height="14.4" rx="1" fill="#fff" stroke="#444" stroke-width="1.1" /><rect x="539.2" y="117.4" width="14" height="7.6" fill="#fff"/><path d="M546.2 114 V117.2 M546.2 125.2 V128.4" fill="none" stroke="#444" stroke-width="1.0" /><path d="M539.2 117.2 H553.2 M539.2 125.2 H553.2" fill="none" stroke="#2a7dd1" stroke-width="1.1" /><path d="M541.4 121.2 H551 M543.2 119.2 L541.2 121.2 L543.2 123.2 M549.2 119.2 L551.2 121.2 L549.2 123.2" fill="none" stroke="#2a7dd1" stroke-width="1.2" stroke-linejoin="round"/></svg>
<span class="t" style="transform:scaleX(0.9153);top:83.97px;font-size:13.2px;color:#444;left:558.00px;transform-origin:0 50%;">Wrap Text</span>
<span class="t" style="transform:scaleX(0.9538);top:116.47px;font-size:13.2px;color:#444;left:558.00px;transform-origin:0 50%;">Merge &amp; Center</span>
<svg class="b" style="left:655.60px;top:117.60px;" width="10" height="10" viewBox="0 0 10 10"><path d="M2.28 4.24 L5 6.53 L7.72 4.24" fill="none" stroke="#444" stroke-width="1.1" stroke-linecap="round" stroke-linejoin="round"/></svg>
<div class="b" style="left:686.00px;top:78.20px;width:137.00px;height:22.40px;background:#fff;border:1px solid #c8c6c4;box-sizing:border-box;"></div>
<span class="t" style="transform:scaleX(0.9222);top:83.87px;font-size:13.2px;color:#222;left:689.60px;transform-origin:0 50%;">Custom</span>
<svg class="b" style="left:811.60px;top:85.20px;" width="10" height="10" viewBox="0 0 10 10"><path d="M2.44 4.28 L5 6.44 L7.56 4.28" fill="none" stroke="#333" stroke-width="1.2" stroke-linecap="round" stroke-linejoin="round"/></svg>
<svg class="b" style="left:0;top:0" width="1946" height="230" viewBox="0 0 1946 230"><rect x="689.6" y="116" width="14.6" height="9.6" rx="0.8" fill="none" stroke="#444" stroke-width="1.1" /><path d="M692 118.4 H695 M698.8 118.4 H701.8 M692 123 H694" fill="none" stroke="#444" stroke-width="1" /><circle cx="696.9" cy="120.6" r="1.8" fill="none" stroke="#444" stroke-width="1"/><path d="M698.4 121.6 H706.4 V128 Q706.4 129.8 702.4 129.8 Q698.4 129.8 698.4 128 Z" fill="#f3f2f1"/><ellipse cx="702.4" cy="122.4" rx="3.2" ry="1.5" fill="none" stroke="#e8832a" stroke-width="1.1"/><path d="M699.2 122.4 V128 Q699.2 129.6 702.4 129.6 Q705.6 129.6 705.6 128 V122.4 M699.2 125.2 Q699.2 126.8 702.4 126.8 Q705.6 126.8 705.6 125.2" fill="none" stroke="#e8832a" stroke-width="1.1" /><path d="M712.8 121.6 L715.6 124.4 L718.4 121.6" fill="none" stroke="#444" stroke-width="1.1" /><text x="727.6" y="127.6" font-family="Liberation Sans" font-size="18.6" fill="#444" textLength="17" lengthAdjust="spacingAndGlyphs">%</text><path d="M760.6 115.4 Q764.8 115.4 764.6 120.4 Q764.2 125.8 757.8 128.8 L757.2 127.8 Q760.6 125.6 761 122.8 Q757 122.8 757 119 Q757 115.4 760.6 115.4 Z" fill="#333"/><path d="M774.4 112 V132.6" fill="none" stroke="#d2d0ce" stroke-width="1" /><text x="790.6" y="121.4" font-family="Liberation Sans" font-size="10" fill="#444" textLength="5.4" lengthAdjust="spacingAndGlyphs">0</text><text x="783" y="129.4" font-family="Liberation Sans" font-size="10" fill="#444" textLength="13" lengthAdjust="spacingAndGlyphs">.00</text><path d="M780.6 118 H789.2 M783.4 115.2 L780.6 118 L783.4 120.8" fill="none" stroke="#2a7dd1" stroke-width="1.3" stroke-linejoin="round"/><text x="806.6" y="121.4" font-family="Liberation Sans" font-size="10" fill="#444" textLength="13" lengthAdjust="spacingAndGlyphs">.00</text><text x="811.6" y="129.4" font-family="Liberation Sans" font-size="10" fill="#444" textLength="7.8" lengthAdjust="spacingAndGlyphs">.0</text><path d="M804 125.6 H812 M809.4 122.8 L812.2 125.6 L809.4 128.4" fill="none" stroke="#2a7dd1" stroke-width="1.3" stroke-linejoin="round"/></svg>
<svg class="b" style="left:0;top:0" width="1946" height="230" viewBox="0 0 1946 230"><rect x="863.2" y="77" width="28.50" height="21.90" fill="#fff"/><path d="M863.2 77 H891.7 V98.9 H863.2 Z M868 77 V98.9 M885.4 77 V98.9 M863.2 84.2 H891.7 M863.2 91.5 H891.7" fill="none" stroke="#444" stroke-width="1.1" /><rect x="868.4" y="77" width="13.2" height="7.20" fill="#fb919b" stroke="#e8323c" stroke-width="1"/><rect x="868.4" y="84.2" width="9" height="7.30" fill="#8cc3f2" stroke="#2a7dd1" stroke-width="1"/><rect x="868.4" y="91.5" width="15.2" height="7.40" fill="#fb919b" stroke="#e8323c" stroke-width="1"/><rect x="930.3" y="77" width="28.40" height="21.90" fill="#fbfbfb"/><rect x="940" y="84.2" width="18.70" height="14.70" fill="#8cc3f2"/><path d="M940 84.2 H958.7 V98.9 H940 Z M949.4 84.2 V98.9 M940 91.5 H958.7" fill="none" stroke="#2a7dd1" stroke-width="1.0" /><path d="M930.3 98.9 V77 H958.7 V84.2 M940 77 V84.2 M949.4 77 V84.2 M930.3 84.2 H940 M930.3 91.5 H940 M930.3 98.9 H940" fill="none" stroke="#444" stroke-width="1.1" /><path d="M947.6 96.4 L958.6 85.2 Q960.4 83.6 961.2 84.6 Q962 85.6 960.6 87.2 L950.4 98.6 Z" fill="#fff" stroke="#333" stroke-width="1.1" stroke-linejoin="round"/><path d="M947.4 96.6 Q950 97 950.4 99.2 Q950 103.4 944.6 104 Q941 104.2 938.4 102 Q942.6 101.6 943.2 99.2 Q943.8 96.2 947.4 96.6 Z" fill="#5aa5e8" stroke="#2a7dd1" stroke-width="0.9"/></svg>
<span class="t" style="transform:translateX(-50%) scaleX(0.9409);top:109.07px;font-size:13.2px;color:#444;left:877.80px;transform-origin:50% 50%;">Conditional</span>
<span class="t" style="transform:scaleX(0.9444);top:125.27px;font-size:13.2px;color:#444;left:842.00px;transform-origin:0 50%;">Formatting</span>
<svg class="b" style="left:903.60px;top:126.40px;" width="10" height="10" viewBox="0 0 10 10"><path d="M2.28 4.24 L5 6.53 L7.72 4.24" fill="none" stroke="#444" stroke-width="1.1" stroke-linecap="round" stroke-linejoin="round"/></svg>
<span class="t" style="transform:translateX(-50%) scaleX(0.8915);top:109.07px;font-size:13.2px;color:#444;left:944.90px;transform-origin:50% 50%;">Format as</span>
<span class="t" style="transform:scaleX(0.8750);top:125.27px;font-size:13.2px;color:#444;left:925.40px;transform-origin:0 50%;">Table</span>
<svg class="b" style="left:954.60px;top:126.40px;" width="10" height="10" viewBox="0 0 10 10"><path d="M2.28 4.24 L5 6.53 L7.72 4.24" fill="none" stroke="#444" stroke-width="1.1" stroke-linecap="round" stroke-linejoin="round"/></svg>
<div class="b" style="left:975.20px;top:72.40px;width:343.30px;height:61.80px;background:#fff;border:1px solid #d2d0ce;box-sizing:border-box;"></div>
<div class="b" style="left:977.50px;top:75.00px;width:107.50px;height:27.80px;background:#fff;border:2px solid #b4b2b0;box-sizing:border-box;outline:1px solid #dcdad8;outline-offset:-4px;"></div>
<span class="t" style="transform:scaleX(1.0233);top:82.17px;font-size:13.4px;color:#000;left:984.60px;transform-origin:0 50%;">Normal</span>
<div class="b" style="left:1088.40px;top:77.90px;width:102.20px;height:22.00px;background:#ffc7ce;"></div>
<span class="t" style="transform:scaleX(0.9333);top:82.17px;font-size:13.4px;color:#9c0006;left:1093.00px;transform-origin:0 50%;">Bad</span>
<div class="b" style="left:1197.00px;top:77.90px;width:101.80px;height:22.00px;background:#c6efce;"></div>
<span class="t" style="transform:scaleX(0.9515);top:82.17px;font-size:13.4px;color:#006100;left:1201.40px;transform-origin:0 50%;">Good</span>
<div class="b" style="left:980.00px;top:106.70px;width:101.80px;height:21.80px;background:#ffeb9c;"></div>
<span class="t" style="transform:scaleX(1.0326);top:110.77px;font-size:13.4px;color:#9c5700;left:984.60px;transform-origin:0 50%;">Neutral</span>
<div class="b" style="left:1088.40px;top:106.40px;width:102.20px;height:22.40px;background:#f2f2f2;border:1px solid #9a9a9a;box-sizing:border-box;"></div>
<span class="t" style="transform:scaleX(0.9417);top:110.77px;font-size:13.4px;color:#fa7d00;font-weight:bold;left:1092.80px;transform-origin:0 50%;">Calculation</span>
<div class="b" style="left:1197.00px;top:106.40px;width:101.80px;height:22.40px;background:#a5a5a5;border:1.6px solid #5a5a5a;box-sizing:border-box;outline:1px solid #8a8a8a;outline-offset:-3px;"></div>
<span class="t" style="transform:scaleX(0.9176);top:110.77px;font-size:13.4px;color:#fff;font-weight:bold;left:1201.40px;transform-origin:0 50%;">Check Cell</span>
<div class="b" style="left:1303.30px;top:72.40px;width:15.20px;height:20.60px;background:#f3f2f1;border:1px solid #d2d0ce;box-sizing:border-box;"></div>
<div class="b" style="left:1303.30px;top:93.00px;width:15.20px;height:20.40px;background:#fff;border:1px solid #a6a4a2;box-sizing:border-box;"></div>
<div class="b" style="left:1303.30px;top:113.40px;width:15.20px;height:20.80px;background:#fff;border:1px solid #a6a4a2;box-sizing:border-box;"></div>
<svg class="b" style="left:1305.90px;top:78.00px;" width="10" height="10" viewBox="0 0 10 10"><path d="M2.2 6 L5 3.4 L7.8 6" fill="none" stroke="#b5b3b1" stroke-width="1.1"/></svg>
<svg class="b" style="left:1305.90px;top:98.00px;" width="10" height="10" viewBox="0 0 10 10"><path d="M2.44 4.28 L5 6.44 L7.56 4.28" fill="none" stroke="#333" stroke-width="1.2" stroke-linecap="round" stroke-linejoin="round"/></svg>
<svg class="b" style="left:1305.90px;top:118.50px;" width="10" height="10" viewBox="0 0 10 10"><path d="M2 2.2 H8" stroke="#333" stroke-width="1.1"/><path d="M2.2 4.6 L5 7.2 L7.8 4.6" fill="none" stroke="#333" stroke-width="1.1"/></svg>
<svg class="b" style="left:0;top:0" width="1946" height="230" viewBox="0 0 1946 230"><rect x="1345.3" y="77.3" width="28.50" height="21.40" fill="#fbfbfb"/><path d="M1345.3 77.3 H1373.8 V98.7 H1345.3 Z M1354.7 77.3 V98.7 M1364.5 77.3 V98.7 M1345.3 84.3 H1373.8 M1345.3 91.1 H1373.8" fill="none" stroke="#444" stroke-width="1.1" /><rect x="1351" y="84.3" width="24.8" height="6.80" fill="#7db8ee" stroke="#1f7fd6" stroke-width="1.1"/><path d="M1354.7 84.3 V91.1 M1364.5 84.3 V91.1" fill="none" stroke="#1f7fd6" stroke-width="0.9" /><path d="M1357 86.4 H1346.4 L1349.8 82.4 M1357 88.2 H1346.4 L1349.8 92.2 M1343.6 87.3 L1350.2 80.9 M1343.6 87.3 L1350.2 93.7 M1357 86.4 V88.2" fill="#fff" stroke="#1f7fd6" stroke-width="1.2" stroke-linejoin="round" stroke-linecap="round"/><path d="M1346 87.3 H1356.6" stroke="#fff" stroke-width="1"/><rect x="1388.2" y="77.3" width="28.50" height="21.40" fill="#fbfbfb"/><path d="M1388.2 84.3 V77.3 H1416.7 V84.3 M1388.2 91.1 V98.7 H1416.7 V91.1 M1397.8 77.3 V98.7 M1407.1 77.3 V98.7 M1388.2 84.3 H1416.7 M1388.2 91.1 H1416.7" fill="none" stroke="#444" stroke-width="1.1" /><path d="M1392.4 84.3 H1405.6 L1409.4 87.7 L1405.6 91.1 H1392.4 Z" fill="#7db8ee" stroke="#1f7fd6" stroke-width="1.1"/><path d="M1397.8 84.3 V91.1 M1402 84.3 V91.1" fill="none" stroke="#1f7fd6" stroke-width="0.9" /><path d="M1406.4 82.6 L1418 94.2 M1418 82.6 L1406.4 94.2" fill="none" stroke="#ee2f3c" stroke-width="1.3" /><rect x="1431.4" y="77.3" width="28.10" height="21.40" fill="#fbfbfb"/><path d="M1431.4 77.3 H1459.5 V98.7 H1431.4 Z M1439.1 77.3 V98.7 M1452.2 77.3 V98.7 M1431.4 84.3 H1459.5 M1431.4 91.1 H1459.5" fill="none" stroke="#444" stroke-width="1.1" /><rect x="1439.1" y="84.3" width="13.10" height="6.80" fill="#7db8ee" stroke="#1f7fd6" stroke-width="1.1"/><path d="M1437.8 73.2 H1453.6 M1437.8 71.4 V75 M1453.6 71.4 V75" fill="none" stroke="#2a8dd4" stroke-width="1.3" /></svg>
<span class="t" style="transform:translateX(-50%) scaleX(0.9091);top:109.07px;font-size:13.2px;color:#444;left:1359.00px;transform-origin:50% 50%;">Insert</span>
<svg class="b" style="left:1354.00px;top:126.40px;" width="10" height="10" viewBox="0 0 10 10"><path d="M2.28 4.24 L5 6.53 L7.72 4.24" fill="none" stroke="#444" stroke-width="1.1" stroke-linecap="round" stroke-linejoin="round"/></svg>
<span class="t" style="transform:translateX(-50%) scaleX(0.9132);top:109.07px;font-size:13.2px;color:#444;left:1402.30px;transform-origin:50% 50%;">Delete</span>
<svg class="b" style="left:1397.30px;top:126.40px;" width="10" height="10" viewBox="0 0 10 10"><path d="M2.28 4.24 L5 6.53 L7.72 4.24" fill="none" stroke="#444" stroke-width="1.1" stroke-linecap="round" stroke-linejoin="round"/></svg>
<span class="t" style="transform:translateX(-50%) scaleX(0.9048);top:109.07px;font-size:13.2px;color:#444;left:1445.00px;transform-origin:50% 50%;">Format</span>
<svg class="b" style="left:1440.00px;top:126.40px;" width="10" height="10" viewBox="0 0 10 10"><path d="M2.28 4.24 L5 6.53 L7.72 4.24" fill="none" stroke="#444" stroke-width="1.1" stroke-linecap="round" stroke-linejoin="round"/></svg>
<svg class="b" style="left:0;top:0" width="1946" height="230" viewBox="0 0 1946 230"><path d="M1501 76 V73.2 H1489 L1496.2 79.8 L1489 86.4 H1501 V83.6" fill="none" stroke="#444" stroke-width="1.25" stroke-linejoin="miter"/><rect x="1486.8" y="96.6" width="15.4" height="13.2" rx="0.6" fill="none" stroke="#444" stroke-width="1.2" /><path d="M1486.8 98.6 H1502.2" fill="none" stroke="#444" stroke-width="1.3" /><path d="M1494.3 100.8 V107.6 M1491.5 105 L1494.3 107.8 L1497.1 105" fill="none" stroke="#2a8dd4" stroke-width="1.3" stroke-linejoin="round"/><path d="M1497 119.8 L1501.8 124.2 L1492.2 134.2 L1487 129.8 Z" fill="#fbfbfb" stroke="#a13cb5" stroke-width="1.2" stroke-linejoin="round"/><path d="M1490.6 126 L1495.6 130.6 L1492.2 134.2 L1487 129.8 Z" fill="#cf85da" stroke="#a13cb5" stroke-width="1.1" stroke-linejoin="round"/><text x="1586.6" y="85.8" font-family="Liberation Sans" font-size="15.6" fill="#2a8dd4" textLength="10" lengthAdjust="spacingAndGlyphs">A</text><text x="1586.8" y="100.9" font-family="Liberation Sans" font-size="15.2" fill="#444" textLength="9.2" lengthAdjust="spacingAndGlyphs">Z</text><path d="M1599.2 81.6 H1615.6 V82.6 L1609.4 89.8 V96.4 H1605 V89.8 L1599.2 82.6 Z" fill="none" stroke="#444" stroke-width="1.2" stroke-linejoin="round"/><circle cx="1651.4" cy="84.2" r="10.3" fill="#f8f8f8" stroke="#444" stroke-width="1.2"/><path d="M1643.6 91.6 L1632.6 102.6" fill="none" stroke="#444" stroke-width="1.4" stroke-linecap="round"/></svg>
<span class="t" style="transform:scaleX(0.9333);top:74.77px;font-size:13.2px;color:#444;left:1506.20px;transform-origin:0 50%;">AutoSum</span>
<svg class="b" style="left:1565.30px;top:75.40px;" width="10" height="10" viewBox="0 0 10 10"><path d="M2.28 4.24 L5 6.53 L7.72 4.24" fill="none" stroke="#444" stroke-width="1.1" stroke-linecap="round" stroke-linejoin="round"/></svg>
<span class="t" style="transform:scaleX(0.8824);top:97.97px;font-size:13.2px;color:#444;left:1506.80px;transform-origin:0 50%;">Fill</span>
<svg class="b" style="left:1523.70px;top:99.30px;" width="10" height="10" viewBox="0 0 10 10"><path d="M2.28 4.24 L5 6.53 L7.72 4.24" fill="none" stroke="#444" stroke-width="1.1" stroke-linecap="round" stroke-linejoin="round"/></svg>
<span class="t" style="transform:scaleX(0.8750);top:121.87px;font-size:13.2px;color:#444;left:1506.20px;transform-origin:0 50%;">Clear</span>
<svg class="b" style="left:1536.00px;top:123.20px;" width="10" height="10" viewBox="0 0 10 10"><path d="M2.28 4.24 L5 6.53 L7.72 4.24" fill="none" stroke="#444" stroke-width="1.1" stroke-linecap="round" stroke-linejoin="round"/></svg>
<span class="t" style="transform:translateX(-50%) scaleX(0.9378);top:109.07px;font-size:13.2px;color:#444;left:1601.20px;transform-origin:50% 50%;">Sort &amp;</span>
<span class="t" style="transform:scaleX(0.9172);top:125.27px;font-size:13.2px;color:#444;left:1582.20px;transform-origin:0 50%;">Filter</span>
<svg class="b" style="left:1611.00px;top:126.40px;" width="10" height="10" viewBox="0 0 10 10"><path d="M2.28 4.24 L5 6.53 L7.72 4.24" fill="none" stroke="#444" stroke-width="1.1" stroke-linecap="round" stroke-linejoin="round"/></svg>
<span class="t" style="transform:translateX(-50%) scaleX(0.9553);top:109.07px;font-size:13.2px;color:#444;left:1647.60px;transform-origin:50% 50%;">Find &amp;</span>
<span class="t" style="transform:scaleX(0.8757);top:125.27px;font-size:13.2px;color:#444;left:1626.00px;transform-origin:0 50%;">Select</span>
<svg class="b" style="left:1660.00px;top:126.40px;" width="10" height="10" viewBox="0 0 10 10"><path d="M2.28 4.24 L5 6.53 L7.72 4.24" fill="none" stroke="#444" stroke-width="1.1" stroke-linecap="round" stroke-linejoin="round"/></svg>
<svg class="b" style="left:0;top:0" width="1946" height="230" viewBox="0 0 1946 230"><rect x="1707.2" y="74" width="21.2" height="27.6" rx="0.6" fill="#e9e8e7" stroke="#c6c4c2" stroke-width="1.1" /><g transform="rotate(-42 1722 84)"><rect x="1708.6" y="80.6" width="15" height="6.8" rx="1.2" fill="#f3f2f1" stroke="#c6c4c2" stroke-width="1.1"/><rect x="1711" y="83.2" width="10" height="1.8" fill="none" stroke="#c6c4c2" stroke-width="0.8"/><rect x="1723.6" y="78.6" width="6.6" height="10.8" fill="#bdbbb9"/><rect x="1730.2" y="80.4" width="5.4" height="7.2" fill="#f7f6f5" stroke="#c6c4c2" stroke-width="0.9"/></g><rect x="1774" y="73.8" width="28.8" height="28.4" rx="0.8" fill="none" stroke="#d4532a" stroke-width="1.5" /><rect x="1777.6" y="77.6" width="9.2" height="8.8" rx="0" fill="none" stroke="#d4532a" stroke-width="1.2" /><rect x="1777.6" y="89.6" width="9.2" height="8.8" rx="0" fill="none" stroke="#d4532a" stroke-width="1.2" /><rect x="1790.2" y="77.6" width="9.2" height="8.8" rx="0" fill="none" stroke="#d4532a" stroke-width="1.2" /><rect x="1790.2" y="89.6" width="9.2" height="8.8" rx="0" fill="none" stroke="#d4532a" stroke-width="1.2" /><rect x="1835.6" y="72.2" width="32.20" height="31.40" fill="#f8f8f8"/><rect x="1835.6" y="72.2" width="32.20" height="4" fill="#b5b5b5"/><path d="M1846.3 76.2 V103.6 M1857 76.2 V103.6 M1835.6 76.2 H1867.8 M1835.6 85.4 H1867.8 M1835.6 94.5 H1867.8 " fill="none" stroke="#555" stroke-width="1.0" /><path d="M1835.6 72.2 H1867.8 V103.6 H1835.6 Z" fill="none" stroke="#333" stroke-width="1.5" /><circle cx="1850.6" cy="85.3" r="10" fill="#f8f8f8" stroke="#222" stroke-width="1.3"/><rect x="1845.6" y="84.4" width="2.8" height="4.6" fill="#d8d8d8" stroke="#8a8a8a" stroke-width="0.7"/><rect x="1849" y="79.6" width="3.2" height="9.4" fill="#d8d8d8" stroke="#444" stroke-width="0.8"/><rect x="1853" y="81.6" width="3.4" height="7.4" fill="#5aa5e8" stroke="#1f7fd6" stroke-width="0.8"/><path d="M1857.8 93 L1867.4 103" fill="none" stroke="#222" stroke-width="1.8" stroke-linecap="round"/></svg>
<span class="t" style="transform:translateX(-50%) scaleX(0.9254);top:109.07px;font-size:13.2px;color:#b3b1af;left:1718.30px;transform-origin:50% 50%;">Sensitivity</span>
<svg class="b" style="left:1713.00px;top:126.40px;" width="10" height="10" viewBox="0 0 10 10"><path d="M2.28 4.24 L5 6.53 L7.72 4.24" fill="none" stroke="#b3b1af" stroke-width="1.1" stroke-linecap="round" stroke-linejoin="round"/></svg>
<span class="t" style="transform:translateX(-50%) scaleX(0.9333);top:109.07px;font-size:13.2px;color:#444;left:1788.00px;transform-origin:50% 50%;">Add-ins</span>
<span class="t" style="transform:translateX(-50%) scaleX(0.8894);top:109.07px;font-size:13.2px;color:#444;left:1851.40px;transform-origin:50% 50%;">Analyze</span>
<span class="t" style="transform:translateX(-50%) scaleX(0.8714);top:125.67px;font-size:13.2px;color:#444;left:1851.40px;transform-origin:50% 50%;">Data</span>
<div class="b" style="left:0.00px;top:170.50px;width:1946.00px;height:56.50px;background:#e6e6e6;"></div>
<div class="b" style="left:5.50px;top:175.50px;width:102.50px;height:21.50px;background:#fff;border:1px solid #d4d4d4;box-sizing:border-box;"></div>
<span class="t" style="transform:scaleX(0.9167);top:180.34px;font-size:13.4px;color:#333;left:9.20px;transform-origin:0 50%;">K44</span>
<svg class="b" style="left:97.00px;top:183.00px;" width="9" height="7" viewBox="0 0 9 7"><path d="M1 1.6 H8 L4.5 5.6 Z" fill="#555"/></svg>
<div class="b" style="left:123.50px;top:181.50px;width:1.30px;height:1.30px;background:#9a9a9a;"></div>
<div class="b" style="left:123.50px;top:186.20px;width:1.30px;height:1.30px;background:#9a9a9a;"></div>
<div class="b" style="left:123.50px;top:190.90px;width:1.30px;height:1.30px;background:#9a9a9a;"></div>
<div class="b" style="left:139.50px;top:175.50px;width:111.00px;height:21.50px;background:#fff;border:1px solid #d4d4d4;box-sizing:border-box;"></div>
<svg class="b" style="left:152.00px;top:180.50px;" width="12" height="12" viewBox="0 0 12 12"><path d="M1 1 L11 11 M11 1 L1 11" stroke="#b0b0b0" stroke-width="1.5" fill="none"/></svg>
<svg class="b" style="left:189.00px;top:180.50px;" width="13" height="12" viewBox="0 0 13 12"><path d="M1 6.4 L4.8 10.4 L12 1.4" stroke="#b0b0b0" stroke-width="2" fill="none"/></svg>
<span class="t" style="top:177.92px;font-size:18px;color:#3a3a3a;font-style:italic;left:225.60px;transform-origin:0 50%;font-family:'Liberation Serif',serif;">f</span>
<span class="t" style="top:179.69px;font-size:14.5px;color:#3a3a3a;font-style:italic;left:231.20px;transform-origin:0 50%;font-family:'Liberation Serif',serif;">x</span>
<div class="b" style="left:254.00px;top:175.60px;width:1692.00px;height:40.60px;background:#fff;"></div>
<span class="t" style="transform:scaleX(0.9931);top:180.44px;font-size:13.4px;color:#222;left:265.70px;transform-origin:0 50%;">=+K$31/(1+$B44)^K$39</span>
<div class="b" style="left:0.00px;top:1019.00px;width:1946.00px;height:23.00px;background:#e6e6e6;"></div>
<div class="b" style="left:0.00px;top:1019.00px;width:1946.00px;height:1.00px;background:#c6c6c6;"></div>
<svg class="b" style="left:15.00px;top:1024.00px;" width="10" height="12" viewBox="0 0 10 12"><path d="M7.4 1.6 L2.4 6 L7.4 10.4 Z" fill="#c9c9c9"/></svg>
<svg class="b" style="left:36.00px;top:1024.00px;" width="10" height="12" viewBox="0 0 10 12"><path d="M2.6 1.6 L7.6 6 L2.6 10.4 Z" fill="#c9c9c9"/></svg>
<div class="b" style="left:76.00px;top:1021.00px;width:47.80px;height:18.80px;background:#1ba7e0;"></div>
<span class="t" style="transform:scaleX(0.8846);top:1022.47px;font-size:14.8px;color:#111;left:82.50px;transform-origin:0 50%;">Cover</span>
<div class="b" style="left:73.60px;top:1021.50px;width:1.00px;height:18.00px;background:#bdbdbd;"></div>
<span class="t" style="transform:scaleX(0.9439);top:1022.47px;font-size:14.8px;color:#444;left:133.20px;transform-origin:0 50%;">Build-Up</span>
<div class="b" style="left:125.40px;top:1021.50px;width:1.00px;height:18.00px;background:#c9c9c9;"></div>
<div class="b" style="left:195.30px;top:1021.50px;width:1.00px;height:18.00px;background:#bdbdbd;"></div>
<span class="t" style="transform:scaleX(0.6842);top:1022.07px;font-size:14.8px;color:#444;left:202.50px;transform-origin:0 50%;">FS</span>
<div class="b" style="left:223.20px;top:1019.00px;width:38.40px;height:21.00px;background:#fff;border-left:1px solid #c6c6c6;border-right:1px solid #c6c6c6;box-sizing:border-box;"></div>
<div class="b" style="left:223.20px;top:1038.80px;width:38.40px;height:1.60px;background:#217346;"></div>
<span class="t" style="transform:scaleX(0.8500);top:1022.07px;font-size:14.8px;color:#1b6a3f;font-weight:bold;left:229.50px;transform-origin:0 50%;">DCF</span>
<span class="t" style="transform:scaleX(0.8622);top:1022.07px;font-size:14.8px;color:#444;left:268.20px;transform-origin:0 50%;">WACC</span>
<div class="b" style="left:313.80px;top:1021.50px;width:1.00px;height:18.00px;background:#bdbdbd;"></div>
<svg class="b" style="left:338.50px;top:1021.50px;" width="18" height="18" viewBox="0 0 18 18"><circle cx="9" cy="9" r="7.6" fill="none" stroke="#666" stroke-width="1.1"/><path d="M9 5.2 V12.8 M5.2 9 H12.8" stroke="#666" stroke-width="1.3"/></svg>
<div class="b" style="left:1177.00px;top:1025.60px;width:1.30px;height:1.30px;background:#a5a5a5;"></div>
<div class="b" style="left:1177.00px;top:1029.40px;width:1.30px;height:1.30px;background:#a5a5a5;"></div>
<div class="b" style="left:1177.00px;top:1033.20px;width:1.30px;height:1.30px;background:#a5a5a5;"></div>
<div class="b" style="left:1190.00px;top:1022.00px;width:17.00px;height:17.00px;background:#fff;border:1px solid #b9b9b9;box-sizing:border-box;"></div>
<svg class="b" style="left:1194.00px;top:1026.00px;" width="8" height="9" viewBox="0 0 8 9"><path d="M6 0.8 L1.4 4.5 L6 8.2 Z" fill="#222"/></svg>
<div class="b" style="left:1207.00px;top:1022.00px;width:692.00px;height:17.00px;background:#fff;border:1px solid #b9b9b9;box-sizing:border-box;"></div>
<div class="b" style="left:1899.00px;top:1022.00px;width:30.00px;height:17.00px;background:#f0f0f0;"></div>
<div class="b" style="left:1929.00px;top:1022.00px;width:17.00px;height:17.00px;background:#fff;border:1px solid #b9b9b9;box-sizing:border-box;"></div>
<svg class="b" style="left:1934.00px;top:1026.00px;" width="8" height="9" viewBox="0 0 8 9"><path d="M2 0.8 L6.6 4.5 L2 8.2 Z" fill="#222"/></svg>
<div class="b" style="left:0.00px;top:1041.20px;width:1946.00px;height:1.00px;background:#c9c9c9;"></div>
<div class="b" style="left:0.00px;top:1042.00px;width:1946.00px;height:22.00px;background:#f3f2f1;"></div>
<span class="t" style="transform:scaleX(0.8471);top:1048.86px;font-size:11.8px;color:#555;left:11.20px;transform-origin:0 50%;">Ready</span>
<span class="t" style="transform:scaleX(0.8837);top:1048.86px;font-size:11.8px;color:#555;left:55.50px;transform-origin:0 50%;">Calculate</span>
<svg class="b" style="left:117.00px;top:1046.00px;" width="17" height="17" viewBox="0 0 17 17"><circle cx="6.6" cy="2.6" r="1.7" fill="none" stroke="#444" stroke-width="1"/><path d="M1.4 5 L5 6.2 H8.2 L11.8 5 L12.2 6 L8.8 7.6 V10 L10 15 M4.4 7.6 V10 L2.8 15.4 M6.6 10.4 L6 12.6" fill="none" stroke="#444" stroke-width="1" stroke-linejoin="round"/><path d="M8.8 10.2 L14.6 15.8 M14.6 10.2 L8.8 15.8" stroke="#444" stroke-width="1.1"/></svg>
<span class="t" style="transform:scaleX(0.8849);top:1048.96px;font-size:11.6px;color:#333;font-weight:bold;left:136.20px;transform-origin:0 50%;">Accessibility: Investigate</span>
<svg class="b" style="left:1554.00px;top:1046.50px;" width="16" height="15" viewBox="0 0 16 15"><path d="M1 1.4 H12.6 V6 M1 1.4 V9.6 H6.4 M4 12 H6.4" fill="none" stroke="#444" stroke-width="1"/><circle cx="10.6" cy="10.4" r="2.6" fill="none" stroke="#444" stroke-width="1.2"/><path d="M10.6 6.6 V7.8 M10.6 13 V14.2 M6.8 10.4 H8 M13.2 10.4 H14.4 M8 7.8 L8.8 8.6 M12.4 12.2 L13.2 13 M13.2 7.8 L12.4 8.6 M8 13 L8.8 12.2" stroke="#444" stroke-width="1"/></svg>
<span class="t" style="transform:scaleX(0.8824);top:1048.86px;font-size:11.8px;color:#555;left:1573.00px;transform-origin:0 50%;">Display Settings</span>
<div class="b" style="left:1666.50px;top:1042.60px;width:41.00px;height:21.40px;background:#d2d0ce;"></div>
<svg class="b" style="left:1679.40px;top:1046.00px;" width="15" height="15" viewBox="0 0 15 15"><path d="M1 1.2 H13.6 V13 H1 Z M1 5.1 H13.6 M1 9 H13.6 M5.2 1.2 V13 M9.4 1.2 V13" fill="none" stroke="#333" stroke-width="1"/></svg>
<svg class="b" style="left:1720.40px;top:1046.00px;" width="15" height="15" viewBox="0 0 15 15"><path d="M1 1.2 H13.6 V13 H1 Z" fill="none" stroke="#444" stroke-width="1"/><path d="M3.6 3.8 H11 V10.6 H3.6 Z M5 5.8 H9.6 M5 7.4 H9.6 M5 9 H9.6" fill="none" stroke="#444" stroke-width="0.9"/></svg>
<svg class="b" style="left:1761.40px;top:1046.00px;" width="15" height="15" viewBox="0 0 15 15"><path d="M1 1.2 H13.6 V13 H1 Z M5 1.2 V7 H9.6 V1.2 M1 9.4 H13.6" fill="none" stroke="#444" stroke-width="1" stroke-dasharray="none"/></svg>
<div class="b" style="left:1795.50px;top:1053.00px;width:7.40px;height:1.10px;background:#8a8a8a;"></div>
<div class="b" style="left:1809.60px;top:1053.10px;width:100.60px;height:1.00px;background:#6a6a6a;"></div>
<div class="b" style="left:1859.60px;top:1050.60px;width:1.00px;height:6.00px;background:#6a6a6a;"></div>
<div class="b" style="left:1841.60px;top:1047.80px;width:4.40px;height:11.20px;background:#333;border-radius:1px;"></div>
<div class="b" style="left:1916.60px;top:1053.00px;width:7.40px;height:1.10px;background:#666;"></div>
<div class="b" style="left:1919.80px;top:1049.80px;width:1.10px;height:7.40px;background:#666;"></div>
<span class="t" style="transform:scaleX(0.9231);top:1049.01px;font-size:11.8px;color:#555;left:1938.20px;transform-origin:0 50%;">70</span>
</div>
</body></html>
